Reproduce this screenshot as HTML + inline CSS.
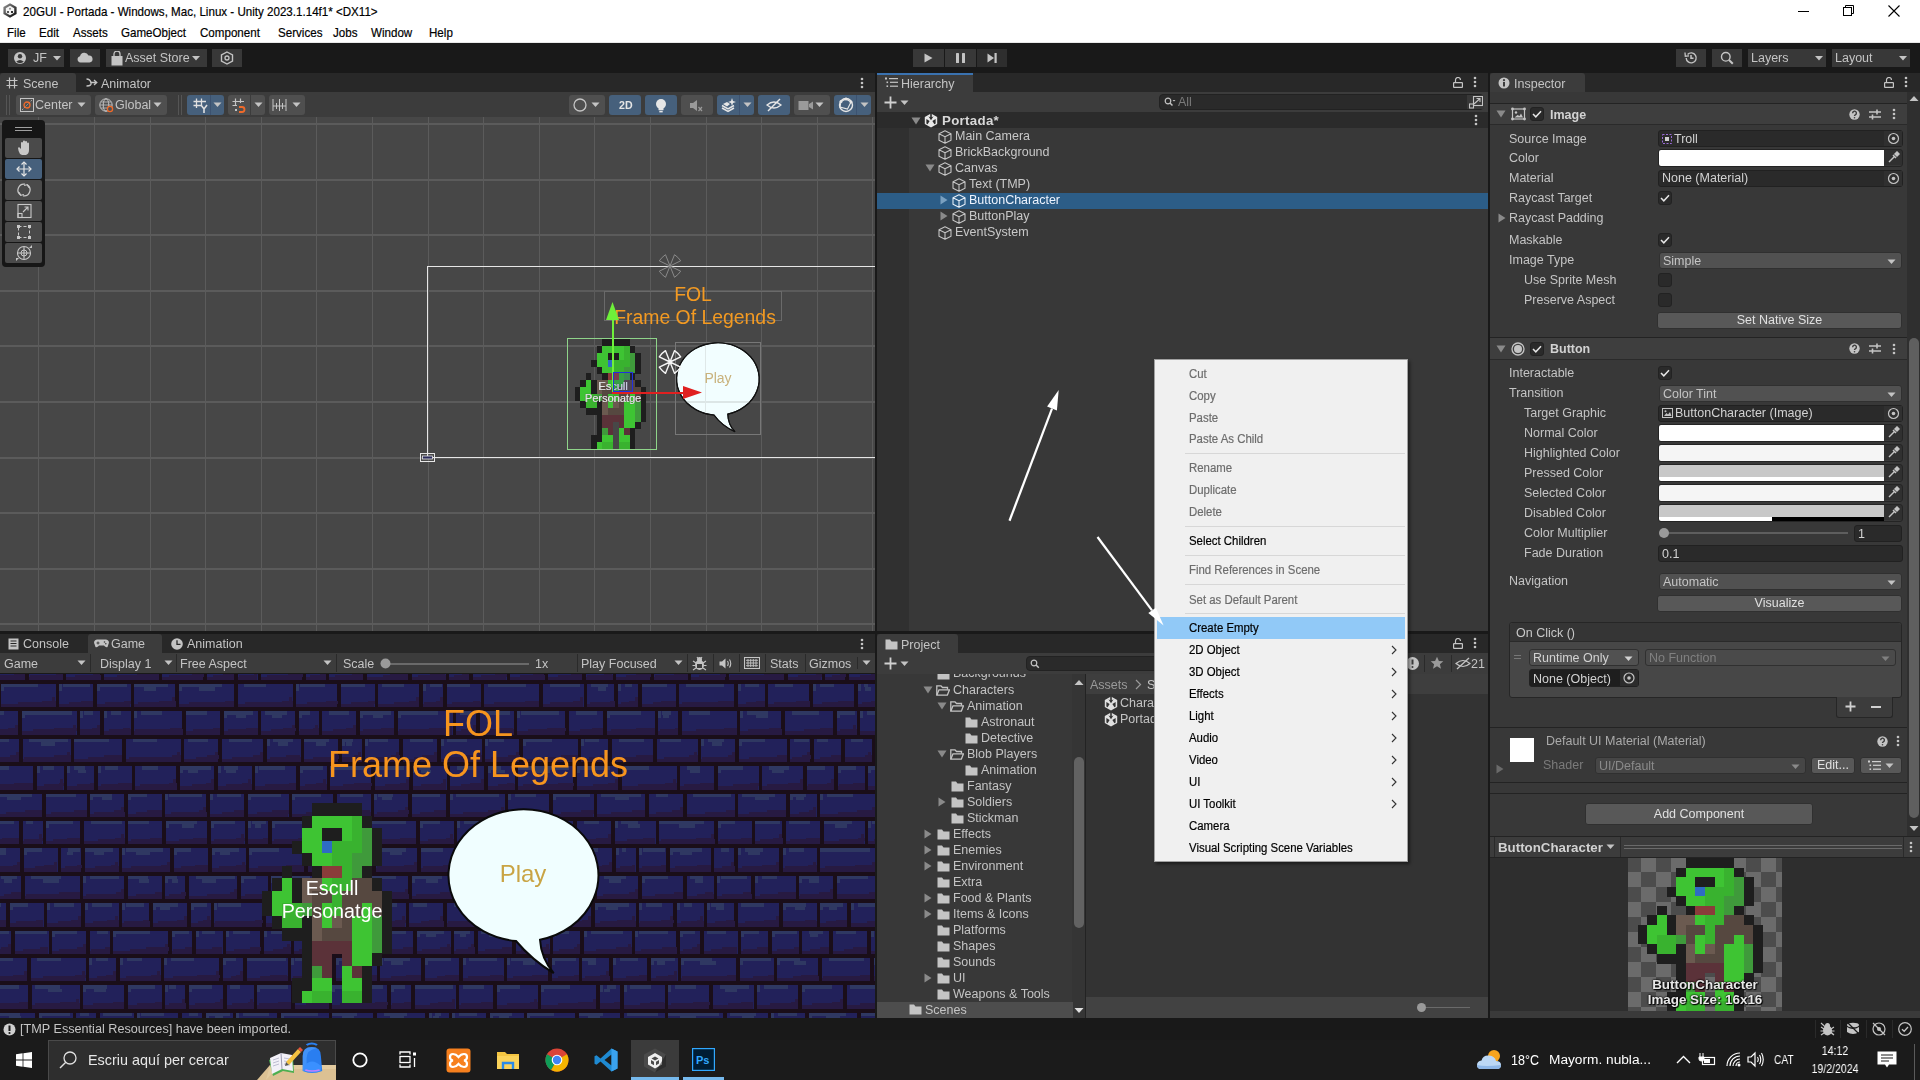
<!DOCTYPE html><html><head><meta charset="utf-8"><style>
html,body{margin:0;padding:0;width:1920px;height:1080px;overflow:hidden;background:#191919;font-family:"Liberation Sans",sans-serif;}
.a{position:absolute;box-sizing:border-box;}
.t{position:absolute;white-space:pre;font-family:"Liberation Sans",sans-serif;will-change:transform;}
</style></head><body>
<div class="a" style="left:0px;top:0px;width:1920px;height:43px;background:#ffffff;"></div>
<div class="a" style="left:0px;top:42px;width:1920px;height:1px;background:#e8e8e8;"></div>
<svg class="a" style="left:3px;top:3px;" width="14" height="15" viewBox="0 0 14 15"><defs><linearGradient id="ug" x1="0" y1="0" x2="1" y2="1"><stop offset="0" stop-color="#9a9a9a"/><stop offset="1" stop-color="#000"/></linearGradient></defs><polygon points="7,0.3 13.6,4 13.6,11 7,14.7 0.4,11 0.4,4" fill="url(#ug)"/><polygon points="7,2.8 11.2,5.2 11.2,9.8 7,12.2 2.8,9.8 2.8,5.2" fill="#f4f4f4"/><circle cx="7" cy="5.7" r="1" fill="#888"/><circle cx="5" cy="9" r="1.1" fill="#333"/><circle cx="9" cy="9" r="1.1" fill="#000"/></svg>
<div class="t" style="left:23px;top:5.1px;font-size:12.6px;line-height:15px;color:#000;font-weight:400;transform:scaleX(0.92);transform-origin:0 0;will-change:auto;-webkit-text-stroke:0.2px #000;">20GUI - Portada - Windows, Mac, Linux - Unity 2023.1.14f1* &lt;DX11&gt;</div>
<div class="a" style="left:1798px;top:11px;width:11px;height:1px;background:#000;"></div>
<svg class="a" style="left:1843px;top:5px;" width="12" height="12" viewBox="0 0 12 12"><rect x="0.5" y="2.5" width="8" height="8" fill="none" stroke="#000" stroke-width="1"/><path d="M2.5 2.5 V0.5 H10.5 V8.5 H8.5" fill="none" stroke="#000" stroke-width="1"/></svg>
<svg class="a" style="left:1888px;top:5px;" width="12" height="12" viewBox="0 0 12 12"><path d="M0.5 0.5 L11.5 11.5 M11.5 0.5 L0.5 11.5" stroke="#000" stroke-width="1.1"/></svg>
<div class="t" style="left:7px;top:26.1px;font-size:12.6px;line-height:15px;color:#000;font-weight:400;transform:scaleX(0.92);transform-origin:0 0;will-change:auto;-webkit-text-stroke:0.2px #000;">File</div>
<div class="t" style="left:39px;top:26.1px;font-size:12.6px;line-height:15px;color:#000;font-weight:400;transform:scaleX(0.92);transform-origin:0 0;will-change:auto;-webkit-text-stroke:0.2px #000;">Edit</div>
<div class="t" style="left:73px;top:26.1px;font-size:12.6px;line-height:15px;color:#000;font-weight:400;transform:scaleX(0.92);transform-origin:0 0;will-change:auto;-webkit-text-stroke:0.2px #000;">Assets</div>
<div class="t" style="left:121px;top:26.1px;font-size:12.6px;line-height:15px;color:#000;font-weight:400;transform:scaleX(0.92);transform-origin:0 0;will-change:auto;-webkit-text-stroke:0.2px #000;">GameObject</div>
<div class="t" style="left:200px;top:26.1px;font-size:12.6px;line-height:15px;color:#000;font-weight:400;transform:scaleX(0.92);transform-origin:0 0;will-change:auto;-webkit-text-stroke:0.2px #000;">Component</div>
<div class="t" style="left:278px;top:26.1px;font-size:12.6px;line-height:15px;color:#000;font-weight:400;transform:scaleX(0.92);transform-origin:0 0;will-change:auto;-webkit-text-stroke:0.2px #000;">Services</div>
<div class="t" style="left:333px;top:26.1px;font-size:12.6px;line-height:15px;color:#000;font-weight:400;transform:scaleX(0.92);transform-origin:0 0;will-change:auto;-webkit-text-stroke:0.2px #000;">Jobs</div>
<div class="t" style="left:371px;top:26.1px;font-size:12.6px;line-height:15px;color:#000;font-weight:400;transform:scaleX(0.92);transform-origin:0 0;will-change:auto;-webkit-text-stroke:0.2px #000;">Window</div>
<div class="t" style="left:429px;top:26.1px;font-size:12.6px;line-height:15px;color:#000;font-weight:400;transform:scaleX(0.92);transform-origin:0 0;will-change:auto;-webkit-text-stroke:0.2px #000;">Help</div>
<div class="a" style="left:0px;top:43px;width:1920px;height:30px;background:#191919;"></div>
<div class="a" style="left:8px;top:49px;width:56px;height:18px;background:#383838;"></div>
<svg class="a" style="left:13px;top:51px;" width="14" height="14" viewBox="0 0 14 14"><circle cx="7" cy="7" r="6" fill="#c4c4c4"/><circle cx="7" cy="5.2" r="2.2" fill="#383838"/><path d="M3.2 10.8 Q7 7.2 10.8 10.8 Q7 13.5 3.2 10.8Z" fill="#383838"/></svg>
<div class="t" style="left:33px;top:51.1px;font-size:12.5px;line-height:15px;color:#c4c4c4;font-weight:400;">JF</div>
<svg class="a" style="left:53px;top:56px;" width="8" height="5" viewBox="0 0 8 5"><path d="M0 0 H8 L4 4.5Z" fill="#c4c4c4"/></svg>
<div class="a" style="left:70px;top:49px;width:30px;height:18px;background:#383838;"></div>
<svg class="a" style="left:77px;top:52px;" width="16" height="11" viewBox="0 0 16 11"><path d="M3.5 10.5 A3.2 3.2 0 0 1 3 4.2 A4.5 4.5 0 0 1 11.5 3.5 A3.5 3.5 0 0 1 12.5 10.5Z" fill="#c4c4c4"/></svg>
<div class="a" style="left:106px;top:49px;width:101px;height:18px;background:#383838;"></div>
<svg class="a" style="left:111px;top:51px;" width="12" height="15" viewBox="0 0 12 15"><path d="M3 5 V3 A3 3 0 0 1 9 3 V5" fill="none" stroke="#c4c4c4" stroke-width="1.3"/><rect x="0.5" y="5" width="11" height="9.5" fill="#c4c4c4"/></svg>
<div class="t" style="left:125px;top:51.1px;font-size:12.5px;line-height:15px;color:#c4c4c4;font-weight:400;">Asset Store</div>
<svg class="a" style="left:192px;top:56px;" width="8" height="5" viewBox="0 0 8 5"><path d="M0 0 H8 L4 4.5Z" fill="#c4c4c4"/></svg>
<div class="a" style="left:212px;top:49px;width:30px;height:18px;background:#383838;"></div>
<svg class="a" style="left:220px;top:51px;" width="14" height="14" viewBox="0 0 14 14"><polygon points="7,1 12.5,4 12.5,10 7,13 1.5,10 1.5,4" fill="none" stroke="#c4c4c4" stroke-width="1.4"/><circle cx="7" cy="7" r="2" fill="none" stroke="#c4c4c4" stroke-width="1.3"/></svg>
<div class="a" style="left:913px;top:49px;width:31px;height:18px;background:#383838;"></div>
<div class="a" style="left:945px;top:49px;width:31px;height:18px;background:#383838;"></div>
<div class="a" style="left:977px;top:49px;width:30px;height:18px;background:#2e2e2e;"></div>
<svg class="a" style="left:924px;top:53px;" width="9" height="10" viewBox="0 0 9 10"><path d="M0.5 0.5 L8.5 5 L0.5 9.5Z" fill="#c4c4c4"/></svg>
<svg class="a" style="left:956px;top:53px;" width="9" height="10" viewBox="0 0 9 10"><rect x="0" y="0" width="3" height="10" rx="0.6" fill="#c4c4c4"/><rect x="6" y="0" width="3" height="10" rx="0.6" fill="#c4c4c4"/></svg>
<svg class="a" style="left:987px;top:53px;" width="11" height="10" viewBox="0 0 11 10"><path d="M0.5 0.5 L7 5 L0.5 9.5Z" fill="#c4c4c4"/><rect x="7.5" y="0" width="2.2" height="10" fill="#c4c4c4"/></svg>
<div class="a" style="left:1676px;top:49px;width:30px;height:18px;background:#383838;"></div>
<div class="a" style="left:1712px;top:49px;width:30px;height:18px;background:#383838;"></div>
<div class="a" style="left:1748px;top:49px;width:78px;height:18px;background:#383838;"></div>
<div class="a" style="left:1832px;top:49px;width:78px;height:18px;background:#383838;"></div>
<svg class="a" style="left:1684px;top:51px;" width="14" height="14" viewBox="0 0 14 14"><path d="M2.2 7 A5 5 0 1 0 3.6 3.4" fill="none" stroke="#c4c4c4" stroke-width="1.4"/><path d="M1 1.5 L1.3 5.2 L5 4.8" fill="none" stroke="#c4c4c4" stroke-width="1.3"/><path d="M7 4 V7.3 H9.5" fill="none" stroke="#c4c4c4" stroke-width="1.5"/></svg>
<svg class="a" style="left:1720px;top:51px;" width="14" height="14" viewBox="0 0 14 14"><circle cx="5.8" cy="5.8" r="4.3" fill="none" stroke="#c4c4c4" stroke-width="1.4"/><path d="M9 9 L12.8 12.8" stroke="#c4c4c4" stroke-width="2"/></svg>
<div class="t" style="left:1751px;top:51.1px;font-size:12.5px;line-height:15px;color:#c4c4c4;font-weight:400;">Layers</div>
<svg class="a" style="left:1815px;top:56px;" width="8" height="5" viewBox="0 0 8 5"><path d="M0 0 H8 L4 4.5Z" fill="#c4c4c4"/></svg>
<div class="t" style="left:1835px;top:51.1px;font-size:12.5px;line-height:15px;color:#c4c4c4;font-weight:400;">Layout</div>
<svg class="a" style="left:1899px;top:56px;" width="8" height="5" viewBox="0 0 8 5"><path d="M0 0 H8 L4 4.5Z" fill="#c4c4c4"/></svg>
<div class="a" style="left:0px;top:73px;width:875px;height:19px;background:#282828;"></div>
<div class="a" style="left:0;top:73px;width:76px;height:19px;background:#3c3c3c;border-radius:3px 3px 0 0"></div>
<svg class="a" style="left:6px;top:77px;" width="12" height="12" viewBox="0 0 12 12"><path d="M3.5 0.5 V11.5 M8.5 0.5 V11.5 M0.5 3.5 H11.5 M0.5 8.5 H11.5" stroke="#c4c4c4" stroke-width="1.2"/></svg>
<div class="t" style="left:23px;top:76.6px;font-size:12.5px;line-height:15px;color:#c4c4c4;font-weight:400;">Scene</div>
<svg class="a" style="left:86px;top:77px;" width="12" height="11" viewBox="0 0 12 11"><path d="M0.5 2 Q4 2 5 5.5 Q6 9 0.5 9" fill="none" stroke="#c4c4c4" stroke-width="1.3"/><path d="M4.5 5.5 H10.5 M8 3 L10.8 5.5 L8 8" fill="none" stroke="#c4c4c4" stroke-width="1.3"/></svg>
<div class="t" style="left:101px;top:76.6px;font-size:12.5px;line-height:15px;color:#c4c4c4;font-weight:400;">Animator</div>
<svg class="a" style="left:860px;top:77px;" width="4" height="12" viewBox="0 0 4 12"><circle cx="2" cy="2" r="1.3" fill="#c4c4c4"/><circle cx="2" cy="6" r="1.3" fill="#c4c4c4"/><circle cx="2" cy="10" r="1.3" fill="#c4c4c4"/></svg>
<div class="a" style="left:0px;top:92px;width:875px;height:25px;background:#3c3c3c;"></div>
<div class="a" style="left:6px;top:95px;width:1px;height:20px;background:#555;"></div>
<div class="a" style="left:9px;top:95px;width:1px;height:20px;background:#555;"></div>
<div class="a" style="left:178px;top:95px;width:1px;height:20px;background:#555;"></div>
<div class="a" style="left:181px;top:95px;width:1px;height:20px;background:#555;"></div>
<div class="a" style="left:613px;top:95px;width:1px;height:20px;background:#555;"></div>
<div class="a" style="left:16px;top:95px;width:75px;height:20px;background:#4f4f4f;border-radius:3px"></div>
<svg class="a" style="left:20px;top:98px;" width="14" height="14" viewBox="0 0 14 14"><rect x="0.5" y="0.5" width="13" height="13" fill="none" stroke="#c4c4c4" stroke-width="1"/><path d="M2 12 L12 2" stroke="#c4c4c4" stroke-width="0.8" stroke-dasharray="1.5 1"/><circle cx="7" cy="7" r="3" fill="none" stroke="#f06a2a" stroke-width="1.3"/></svg>
<div class="t" style="left:35px;top:98.1px;font-size:12.5px;line-height:15px;color:#c4c4c4;font-weight:400;">Center</div>
<svg class="a" style="left:77px;top:102px;" width="9" height="6" viewBox="0 0 9 6"><path d="M0.5 0.5 H8.5 L4.5 5Z" fill="#c4c4c4"/></svg>
<div class="a" style="left:95px;top:95px;width:72px;height:20px;background:#4f4f4f;border-radius:3px"></div>
<svg class="a" style="left:99px;top:98px;" width="18" height="15" viewBox="0 0 18 15"><circle cx="7" cy="7" r="6.2" fill="none" stroke="#c4c4c4" stroke-width="1"/><ellipse cx="7" cy="7" rx="2.8" ry="6.2" fill="none" stroke="#c4c4c4" stroke-width="1"/><path d="M1 7 H13 M2 4 H12 M2 10 H12" stroke="#c4c4c4" stroke-width="0.8"/><circle cx="11" cy="11" r="2.6" fill="#4f4f4f" stroke="#f06a2a" stroke-width="1.3"/></svg>
<div class="t" style="left:115px;top:98.1px;font-size:12.5px;line-height:15px;color:#c4c4c4;font-weight:400;">Global</div>
<svg class="a" style="left:153px;top:102px;" width="9" height="6" viewBox="0 0 9 6"><path d="M0.5 0.5 H8.5 L4.5 5Z" fill="#c4c4c4"/></svg>
<div class="a" style="left:187px;top:95px;width:37px;height:20px;background:#46607c;border-radius:3px"></div>
<div class="a" style="left:210px;top:95px;width:1px;height:20px;background:#3c5270;"></div>
<svg class="a" style="left:193px;top:98px;" width="16" height="15" viewBox="0 0 16 15"><path d="M3.5 0.5 V10 M8.5 0.5 V7 M0.5 3.5 H13 M0.5 7.5 H8" stroke="#e0e0e0" stroke-width="1.3"/><path d="M8 7 L11 11 L14 7 M11 11 V15" fill="none" stroke="#e0e0e0" stroke-width="1.6"/></svg>
<svg class="a" style="left:213px;top:102px;" width="9" height="6" viewBox="0 0 9 6"><path d="M0.5 0.5 H8.5 L4.5 5Z" fill="#c4c4c4"/></svg>
<div class="a" style="left:228px;top:95px;width:37px;height:20px;background:#4f4f4f;border-radius:3px"></div>
<div class="a" style="left:250px;top:95px;width:1px;height:20px;background:#3c3c3c;"></div>
<svg class="a" style="left:232px;top:98px;" width="16" height="15" viewBox="0 0 16 15"><path d="M3.5 0.5 V8 M8.5 0.5 V5 M0.5 3.5 H12 M0.5 7.5 H5" stroke="#c4c4c4" stroke-width="1.2"/><path d="M7 9 H10 A2.5 2.5 0 0 1 10 14 H7" fill="none" stroke="#f06a2a" stroke-width="1.8"/><rect x="3" y="11" width="2" height="2" fill="#c4c4c4"/></svg>
<svg class="a" style="left:254px;top:102px;" width="9" height="6" viewBox="0 0 9 6"><path d="M0.5 0.5 H8.5 L4.5 5Z" fill="#c4c4c4"/></svg>
<div class="a" style="left:269px;top:95px;width:36px;height:20px;background:#4f4f4f;border-radius:3px"></div>
<svg class="a" style="left:272px;top:98px;" width="16" height="14" viewBox="0 0 16 14"><path d="M1 1 V13 M4.5 5 V11 M7.5 1 V13 M10.5 5 V11 M14 1 V13 M1 8 H14" stroke="#c4c4c4" stroke-width="1"/></svg>
<svg class="a" style="left:292px;top:102px;" width="9" height="6" viewBox="0 0 9 6"><path d="M0.5 0.5 H8.5 L4.5 5Z" fill="#c4c4c4"/></svg>
<div class="a" style="left:569px;top:95px;width:36px;height:20px;background:#4f4f4f;border-radius:3px"></div>
<svg class="a" style="left:573px;top:98px;" width="16" height="14" viewBox="0 0 16 14"><circle cx="7" cy="7" r="6" fill="none" stroke="#c4c4c4" stroke-width="1.3"/><path d="M8.5 12.8 A6 6 0 0 0 12.8 6 A5 5 0 0 1 8.5 12.8Z" fill="#c4c4c4"/></svg>
<svg class="a" style="left:591px;top:102px;" width="9" height="6" viewBox="0 0 9 6"><path d="M0.5 0.5 H8.5 L4.5 5Z" fill="#c4c4c4"/></svg>
<div class="a" style="left:609px;top:95px;width:32px;height:20px;background:#46607c;border-radius:3px"></div>
<div class="t" style="left:618.5px;top:99.3px;font-size:10.6px;line-height:13px;color:#e6e6e6;font-weight:700;">2D</div>
<div class="a" style="left:645px;top:95px;width:32px;height:20px;background:#46607c;border-radius:3px"></div>
<svg class="a" style="left:654px;top:98px;" width="14" height="15" viewBox="0 0 14 15"><circle cx="7" cy="6" r="5" fill="#e6e6e6"/><rect x="4.5" y="10" width="5" height="2.2" fill="#e6e6e6"/><rect x="5.3" y="12.8" width="3.4" height="1.6" fill="#e6e6e6"/></svg>
<div class="a" style="left:681px;top:95px;width:32px;height:20px;background:#4f4f4f;border-radius:3px"></div>
<svg class="a" style="left:689px;top:99px;" width="16" height="13" viewBox="0 0 16 13"><path d="M1 4 H4 L8 1 V12 L4 9 H1Z" fill="#9a9a9a"/><path d="M9.5 8 L13 12 M13 8 L9.5 12" stroke="#9a9a9a" stroke-width="1.2"/></svg>
<div class="a" style="left:717px;top:95px;width:37px;height:20px;background:#46607c;border-radius:3px"></div>
<div class="a" style="left:739px;top:95px;width:1px;height:20px;background:#3c5270;"></div>
<svg class="a" style="left:721px;top:97px;" width="16" height="16" viewBox="0 0 16 16"><path d="M1 8.5 L7 12 L13 8.5 M1 11 L7 14.5 L13 11" fill="none" stroke="#e6e6e6" stroke-width="1.5"/><path d="M2 7 L6 5 L9 7 L6 9.5Z" fill="#e6e6e6"/><path d="M11 1 L12 4 L15 5 L12 6 L11 9 L10 6 L7 5 L10 4Z" fill="#e6e6e6"/></svg>
<svg class="a" style="left:743px;top:102px;" width="9" height="6" viewBox="0 0 9 6"><path d="M0.5 0.5 H8.5 L4.5 5Z" fill="#c4c4c4"/></svg>
<div class="a" style="left:758px;top:95px;width:32px;height:20px;background:#46607c;border-radius:3px"></div>
<svg class="a" style="left:766px;top:98px;" width="17" height="14" viewBox="0 0 17 14"><path d="M1 7 Q8 1 15 7 Q8 13 1 7Z" fill="none" stroke="#e6e6e6" stroke-width="1.3"/><path d="M2 13 L14 1" stroke="#e6e6e6" stroke-width="1.5"/></svg>
<div class="a" style="left:794px;top:95px;width:36px;height:20px;background:#4f4f4f;border-radius:3px"></div>
<svg class="a" style="left:798px;top:99px;" width="16" height="12" viewBox="0 0 16 12"><rect x="0.5" y="2" width="10" height="9" fill="#9a9a9a"/><path d="M11 5 L15 2.5 V10.5 L11 8Z" fill="#9a9a9a"/></svg>
<svg class="a" style="left:815px;top:102px;" width="9" height="6" viewBox="0 0 9 6"><path d="M0.5 0.5 H8.5 L4.5 5Z" fill="#c4c4c4"/></svg>
<div class="a" style="left:834px;top:95px;width:37px;height:20px;background:#46607c;border-radius:3px"></div>
<div class="a" style="left:856px;top:95px;width:1px;height:20px;background:#3c5270;"></div>
<svg class="a" style="left:838px;top:97px;" width="16" height="16" viewBox="0 0 16 16"><circle cx="8" cy="8" r="6.5" fill="none" stroke="#e6e6e6" stroke-width="1.4"/><path d="M3 4.5 L8 2 L13 5 L9.5 12 L2 10Z" fill="none" stroke="#e6e6e6" stroke-width="1.1"/><circle cx="8" cy="2" r="1.5" fill="#e6e6e6"/><circle cx="13" cy="5" r="1.5" fill="#e6e6e6"/><circle cx="3" cy="4.5" r="1.5" fill="#e6e6e6"/></svg>
<svg class="a" style="left:860px;top:102px;" width="9" height="6" viewBox="0 0 9 6"><path d="M0.5 0.5 H8.5 L4.5 5Z" fill="#c4c4c4"/></svg>
<div class="a" style="left:0px;top:117px;width:875px;height:514.5px;background:#474747;"></div>
<div class="a" style="left:38px;top:117px;width:1px;height:514px;background:#5b5b5b;"></div>
<div class="a" style="left:94px;top:117px;width:1px;height:514px;background:#5b5b5b;"></div>
<div class="a" style="left:150px;top:117px;width:1px;height:514px;background:#5b5b5b;"></div>
<div class="a" style="left:205px;top:117px;width:1px;height:514px;background:#5b5b5b;"></div>
<div class="a" style="left:261px;top:117px;width:1px;height:514px;background:#5b5b5b;"></div>
<div class="a" style="left:316px;top:117px;width:1px;height:514px;background:#5b5b5b;"></div>
<div class="a" style="left:372px;top:117px;width:1px;height:514px;background:#5b5b5b;"></div>
<div class="a" style="left:428px;top:117px;width:1px;height:514px;background:#5b5b5b;"></div>
<div class="a" style="left:483px;top:117px;width:1px;height:514px;background:#5b5b5b;"></div>
<div class="a" style="left:539px;top:117px;width:1px;height:514px;background:#5b5b5b;"></div>
<div class="a" style="left:594px;top:117px;width:1px;height:514px;background:#5b5b5b;"></div>
<div class="a" style="left:650px;top:117px;width:1px;height:514px;background:#5b5b5b;"></div>
<div class="a" style="left:706px;top:117px;width:1px;height:514px;background:#5b5b5b;"></div>
<div class="a" style="left:761px;top:117px;width:1px;height:514px;background:#5b5b5b;"></div>
<div class="a" style="left:817px;top:117px;width:1px;height:514px;background:#5b5b5b;"></div>
<div class="a" style="left:872px;top:117px;width:1px;height:514px;background:#5b5b5b;"></div>
<div class="a" style="left:0px;top:123px;width:875px;height:2px;background:#5b5b5b;"></div>
<div class="a" style="left:0px;top:179px;width:875px;height:2px;background:#5b5b5b;"></div>
<div class="a" style="left:0px;top:234px;width:875px;height:2px;background:#5b5b5b;"></div>
<div class="a" style="left:0px;top:290px;width:875px;height:2px;background:#5b5b5b;"></div>
<div class="a" style="left:0px;top:345px;width:875px;height:2px;background:#5b5b5b;"></div>
<div class="a" style="left:0px;top:401px;width:875px;height:2px;background:#5b5b5b;"></div>
<div class="a" style="left:0px;top:457px;width:875px;height:2px;background:#5b5b5b;"></div>
<div class="a" style="left:0px;top:512px;width:875px;height:2px;background:#5b5b5b;"></div>
<div class="a" style="left:0px;top:568px;width:875px;height:2px;background:#5b5b5b;"></div>
<div class="a" style="left:0px;top:623px;width:875px;height:2px;background:#5b5b5b;"></div>
<div class="a" style="left:427px;top:266px;width:448px;height:1px;background:#e6e6e6;"></div>
<div class="a" style="left:427px;top:266px;width:1px;height:192px;background:#e6e6e6;"></div>
<div class="a" style="left:427px;top:457px;width:448px;height:1px;background:#e6e6e6;"></div>
<svg class="a" style="left:420px;top:453px;" width="15" height="9" viewBox="0 0 15 9"><rect x="0.5" y="0.5" width="14" height="8" fill="none" stroke="#e6e6e6" stroke-width="1"/><rect x="2.5" y="3" width="10" height="3" fill="#2a2a5a" stroke="#e6e6e6" stroke-width="0.8"/></svg>
<div class="a" style="left:604px;top:291px;width:177px;height:1px;background:#6a6a6a;"></div>
<div class="a" style="left:604px;top:320px;width:177px;height:1px;background:#6a6a6a;"></div>
<div class="a" style="left:604px;top:291px;width:1px;height:30px;background:#6a6a6a;"></div>
<div class="a" style="left:781px;top:291px;width:1px;height:30px;background:#6a6a6a;"></div>
<div class="t" style="left:693px;top:285.4px;font-size:19.4px;line-height:19.4px;color:#f39a22;font-weight:400;transform:translateX(-50%);">FOL</div>
<div class="t" style="left:695px;top:308.2px;font-size:19.4px;line-height:19.4px;color:#f39a22;font-weight:400;transform:translateX(-50%);">Frame Of Legends</div>
<svg class="a" style="left:568.7px;top:339px" width="88" height="110" viewBox="0 0 16 16" preserveAspectRatio="none" shape-rendering="crispEdges"><rect x="6" y="0" width="1.04" height="1.04" fill="#1e1e1e"/><rect x="7" y="0" width="1.04" height="1.04" fill="#1e1e1e"/><rect x="8" y="0" width="1.04" height="1.04" fill="#1e1e1e"/><rect x="9" y="0" width="1.04" height="1.04" fill="#1e1e1e"/><rect x="10" y="0" width="1.04" height="1.04" fill="#1e1e1e"/><rect x="5" y="1" width="1.04" height="1.04" fill="#1e1e1e"/><rect x="6" y="1" width="1.04" height="1.04" fill="#3ec433"/><rect x="7" y="1" width="1.04" height="1.04" fill="#3ec433"/><rect x="8" y="1" width="1.04" height="1.04" fill="#3ec433"/><rect x="9" y="1" width="1.04" height="1.04" fill="#3ec433"/><rect x="10" y="1" width="1.04" height="1.04" fill="#39b22f"/><rect x="11" y="1" width="1.04" height="1.04" fill="#1e1e1e"/><rect x="5" y="2" width="1.04" height="1.04" fill="#3ec433"/><rect x="6" y="2" width="1.04" height="1.04" fill="#3ec433"/><rect x="7" y="2" width="1.04" height="1.04" fill="#1e1e1e"/><rect x="8" y="2" width="1.04" height="1.04" fill="#1e1e1e"/><rect x="9" y="2" width="1.04" height="1.04" fill="#3ec433"/><rect x="10" y="2" width="1.04" height="1.04" fill="#39b22f"/><rect x="11" y="2" width="1.04" height="1.04" fill="#3f9a3b"/><rect x="12" y="2" width="1.04" height="1.04" fill="#1e1e1e"/><rect x="4" y="3" width="1.04" height="1.04" fill="#1e1e1e"/><rect x="5" y="3" width="1.04" height="1.04" fill="#3ec433"/><rect x="6" y="3" width="1.04" height="1.04" fill="#3ec433"/><rect x="7" y="3" width="1.04" height="1.04" fill="#2e6cc4"/><rect x="8" y="3" width="1.04" height="1.04" fill="#39b22f"/><rect x="9" y="3" width="1.04" height="1.04" fill="#39b22f"/><rect x="10" y="3" width="1.04" height="1.04" fill="#39b22f"/><rect x="11" y="3" width="1.04" height="1.04" fill="#3f9a3b"/><rect x="12" y="3" width="1.04" height="1.04" fill="#1e1e1e"/><rect x="5" y="4" width="1.04" height="1.04" fill="#1e1e1e"/><rect x="6" y="4" width="1.04" height="1.04" fill="#3ec433"/><rect x="7" y="4" width="1.04" height="1.04" fill="#3ec433"/><rect x="8" y="4" width="1.04" height="1.04" fill="#39b22f"/><rect x="9" y="4" width="1.04" height="1.04" fill="#39b22f"/><rect x="10" y="4" width="1.04" height="1.04" fill="#3f9a3b"/><rect x="11" y="4" width="1.04" height="1.04" fill="#3f9a3b"/><rect x="12" y="4" width="1.04" height="1.04" fill="#1e1e1e"/><rect x="3" y="5" width="1.04" height="1.04" fill="#1e1e1e"/><rect x="6" y="5" width="1.04" height="1.04" fill="#1e1e1e"/><rect x="7" y="5" width="1.04" height="1.04" fill="#8a3c3a"/><rect x="8" y="5" width="1.04" height="1.04" fill="#8a3c3a"/><rect x="9" y="5" width="1.04" height="1.04" fill="#39b22f"/><rect x="10" y="5" width="1.04" height="1.04" fill="#3f9a3b"/><rect x="11" y="5" width="1.04" height="1.04" fill="#1e1e1e"/><rect x="2" y="6" width="1.04" height="1.04" fill="#1e1e1e"/><rect x="3" y="6" width="1.04" height="1.04" fill="#3ec433"/><rect x="4" y="6" width="1.04" height="1.04" fill="#1e1e1e"/><rect x="5" y="6" width="1.04" height="1.04" fill="#6b5a50"/><rect x="6" y="6" width="1.04" height="1.04" fill="#6b5a50"/><rect x="7" y="6" width="1.04" height="1.04" fill="#3ec433"/><rect x="8" y="6" width="1.04" height="1.04" fill="#39b22f"/><rect x="9" y="6" width="1.04" height="1.04" fill="#39b22f"/><rect x="10" y="6" width="1.04" height="1.04" fill="#564840"/><rect x="11" y="6" width="1.04" height="1.04" fill="#564840"/><rect x="12" y="6" width="1.04" height="1.04" fill="#1e1e1e"/><rect x="1" y="7" width="1.04" height="1.04" fill="#1e1e1e"/><rect x="2" y="7" width="1.04" height="1.04" fill="#3ec433"/><rect x="3" y="7" width="1.04" height="1.04" fill="#3ec433"/><rect x="4" y="7" width="1.04" height="1.04" fill="#1e1e1e"/><rect x="5" y="7" width="1.04" height="1.04" fill="#6b5a50"/><rect x="6" y="7" width="1.04" height="1.04" fill="#564840"/><rect x="7" y="7" width="1.04" height="1.04" fill="#564840"/><rect x="8" y="7" width="1.04" height="1.04" fill="#39b22f"/><rect x="9" y="7" width="1.04" height="1.04" fill="#564840"/><rect x="10" y="7" width="1.04" height="1.04" fill="#564840"/><rect x="11" y="7" width="1.04" height="1.04" fill="#564840"/><rect x="12" y="7" width="1.04" height="1.04" fill="#564840"/><rect x="13" y="7" width="1.04" height="1.04" fill="#1e1e1e"/><rect x="1" y="8" width="1.04" height="1.04" fill="#1e1e1e"/><rect x="2" y="8" width="1.04" height="1.04" fill="#3ec433"/><rect x="3" y="8" width="1.04" height="1.04" fill="#39b22f"/><rect x="4" y="8" width="1.04" height="1.04" fill="#39b22f"/><rect x="5" y="8" width="1.04" height="1.04" fill="#3f9a3b"/><rect x="6" y="8" width="1.04" height="1.04" fill="#564840"/><rect x="7" y="8" width="1.04" height="1.04" fill="#3ec433"/><rect x="8" y="8" width="1.04" height="1.04" fill="#39b22f"/><rect x="9" y="8" width="1.04" height="1.04" fill="#564840"/><rect x="10" y="8" width="1.04" height="1.04" fill="#564840"/><rect x="11" y="8" width="1.04" height="1.04" fill="#3ec433"/><rect x="12" y="8" width="1.04" height="1.04" fill="#564840"/><rect x="13" y="8" width="1.04" height="1.04" fill="#1e1e1e"/><rect x="2" y="9" width="1.04" height="1.04" fill="#1e1e1e"/><rect x="3" y="9" width="1.04" height="1.04" fill="#39b22f"/><rect x="4" y="9" width="1.04" height="1.04" fill="#39b22f"/><rect x="5" y="9" width="1.04" height="1.04" fill="#1e1e1e"/><rect x="6" y="9" width="1.04" height="1.04" fill="#6b5a50"/><rect x="7" y="9" width="1.04" height="1.04" fill="#3ec433"/><rect x="8" y="9" width="1.04" height="1.04" fill="#6b5a50"/><rect x="9" y="9" width="1.04" height="1.04" fill="#564840"/><rect x="10" y="9" width="1.04" height="1.04" fill="#3ec433"/><rect x="11" y="9" width="1.04" height="1.04" fill="#3ec433"/><rect x="12" y="9" width="1.04" height="1.04" fill="#3f9a3b"/><rect x="13" y="9" width="1.04" height="1.04" fill="#1e1e1e"/><rect x="3" y="10" width="1.04" height="1.04" fill="#1e1e1e"/><rect x="4" y="10" width="1.04" height="1.04" fill="#1e1e1e"/><rect x="5" y="10" width="1.04" height="1.04" fill="#1e1e1e"/><rect x="6" y="10" width="1.04" height="1.04" fill="#6b5a50"/><rect x="7" y="10" width="1.04" height="1.04" fill="#564840"/><rect x="8" y="10" width="1.04" height="1.04" fill="#564840"/><rect x="9" y="10" width="1.04" height="1.04" fill="#564840"/><rect x="10" y="10" width="1.04" height="1.04" fill="#3ec433"/><rect x="11" y="10" width="1.04" height="1.04" fill="#3ec433"/><rect x="12" y="10" width="1.04" height="1.04" fill="#3f9a3b"/><rect x="13" y="10" width="1.04" height="1.04" fill="#1e1e1e"/><rect x="5" y="11" width="1.04" height="1.04" fill="#1e1e1e"/><rect x="6" y="11" width="1.04" height="1.04" fill="#5b3239"/><rect x="7" y="11" width="1.04" height="1.04" fill="#5b3239"/><rect x="8" y="11" width="1.04" height="1.04" fill="#5b3239"/><rect x="9" y="11" width="1.04" height="1.04" fill="#5b3239"/><rect x="10" y="11" width="1.04" height="1.04" fill="#3ec433"/><rect x="11" y="11" width="1.04" height="1.04" fill="#3ec433"/><rect x="12" y="11" width="1.04" height="1.04" fill="#3f9a3b"/><rect x="13" y="11" width="1.04" height="1.04" fill="#1e1e1e"/><rect x="5" y="12" width="1.04" height="1.04" fill="#1e1e1e"/><rect x="6" y="12" width="1.04" height="1.04" fill="#5b3239"/><rect x="7" y="12" width="1.04" height="1.04" fill="#5b3239"/><rect x="9" y="12" width="1.04" height="1.04" fill="#5b3239"/><rect x="10" y="12" width="1.04" height="1.04" fill="#3ec433"/><rect x="11" y="12" width="1.04" height="1.04" fill="#3ec433"/><rect x="12" y="12" width="1.04" height="1.04" fill="#1e1e1e"/><rect x="5" y="13" width="1.04" height="1.04" fill="#1e1e1e"/><rect x="6" y="13" width="1.04" height="1.04" fill="#3f9a3b"/><rect x="7" y="13" width="1.04" height="1.04" fill="#5b3239"/><rect x="9" y="13" width="1.04" height="1.04" fill="#3ec433"/><rect x="10" y="13" width="1.04" height="1.04" fill="#5b3239"/><rect x="11" y="13" width="1.04" height="1.04" fill="#1e1e1e"/><rect x="4" y="14" width="1.04" height="1.04" fill="#1e1e1e"/><rect x="5" y="14" width="1.04" height="1.04" fill="#1e1e1e"/><rect x="6" y="14" width="1.04" height="1.04" fill="#3ec433"/><rect x="7" y="14" width="1.04" height="1.04" fill="#3ec433"/><rect x="9" y="14" width="1.04" height="1.04" fill="#3ec433"/><rect x="10" y="14" width="1.04" height="1.04" fill="#3ec433"/><rect x="11" y="14" width="1.04" height="1.04" fill="#1e1e1e"/><rect x="4" y="15" width="1.04" height="1.04" fill="#1e1e1e"/><rect x="5" y="15" width="1.04" height="1.04" fill="#3ec433"/><rect x="6" y="15" width="1.04" height="1.04" fill="#39b22f"/><rect x="7" y="15" width="1.04" height="1.04" fill="#39b22f"/><rect x="9" y="15" width="1.04" height="1.04" fill="#39b22f"/><rect x="10" y="15" width="1.04" height="1.04" fill="#39b22f"/><rect x="11" y="15" width="1.04" height="1.04" fill="#1e1e1e"/></svg>
<div class="a" style="left:567px;top:338px;width:90px;height:112px;border:1px solid #8fd48a"></div>
<div class="t" style="left:612.7px;top:380.7px;font-size:11.0px;line-height:11.0px;color:#e8e8e8;font-weight:400;transform:translateX(-50%);text-shadow:0 0 1px rgba(40,40,40,0.8),0.3px 0 0 #e8e8e8;">Escull</div>
<div class="t" style="left:612.9px;top:392.9px;font-size:11.0px;line-height:11.0px;color:#e8e8e8;font-weight:400;transform:translateX(-50%);text-shadow:0 0 1px rgba(40,40,40,0.8),0.3px 0 0 #e8e8e8;">Personatge</div>
<div class="a" style="left:675px;top:342px;width:86px;height:1px;background:#777;"></div>
<div class="a" style="left:675px;top:434px;width:86px;height:1px;background:#777;"></div>
<div class="a" style="left:675px;top:342px;width:1px;height:93px;background:#777;"></div>
<div class="a" style="left:760px;top:342px;width:1px;height:93px;background:#777;"></div>
<svg class="a" style="left:670px;top:335px;" width="100" height="102" viewBox="0 0 100 102"><defs><clipPath id="bc"><path d="M57.8 79.1 A41.3 36.2 0 1 0 44 80 Q52 91 65 96.7 Q58 90 57.8 79.1 Z"/></clipPath></defs><path d="M57.8 79.1 A41.3 36.2 0 1 0 44 80 Q52 91 65 96.7 Q58 90 57.8 79.1 Z" fill="#f2feff" stroke="#111" stroke-width="1.1"/><g clip-path="url(#bc)"><path d="M0 67 H100" stroke="#d5dede" stroke-width="1.6"/><path d="M35.5 0 V100" stroke="#dfe8e8" stroke-width="1"/></g><path d="M57.8 79.1 A41.3 36.2 0 1 0 44 80 Q52 91 65 96.7 Q58 90 57.8 79.1 Z" fill="none" stroke="#111" stroke-width="1.1"/></svg>
<div class="t" style="left:718px;top:370.6px;font-size:14px;line-height:14px;color:#c9b27c;font-weight:400;transform:translateX(-50%);">Play</div>
<svg class="a" style="left:657px;top:253.39999999999998px;" width="26" height="26" viewBox="0 0 26 26"><g transform="translate(13 13)" fill="none" stroke="#8a8a8a" stroke-width="1.0" opacity="1" stroke-linejoin="round"><path d="M0 0 L-10.7 -5.2 Q-8 -9 -4.5 -11.3 Z M0 0 L10.7 -5.2 Q8 -9 4.5 -11.3 Z M0 0 L-10.7 5.2 Q-8 9 -4.5 11.3 Z M0 0 L10.7 5.2 Q8 9 4.5 11.3 Z"/></g></svg>
<svg class="a" style="left:657px;top:349.4px;" width="26" height="26" viewBox="0 0 26 26"><g transform="translate(13 13)" fill="none" stroke="#f4f4f4" stroke-width="1.4" opacity="1" stroke-linejoin="round"><path d="M0 0 L-10.7 -5.2 Q-8 -9 -4.5 -11.3 Z M0 0 L10.7 -5.2 Q8 -9 4.5 -11.3 Z M0 0 L-10.7 5.2 Q-8 9 -4.5 11.3 Z M0 0 L10.7 5.2 Q8 9 4.5 11.3 Z"/></g></svg>
<div class="a" style="left:612px;top:320px;width:1.5px;height:73px;background:#6ef03a;"></div>
<svg class="a" style="left:605px;top:302px;" width="15" height="19" viewBox="0 0 15 19"><path d="M7.5 0 L14 18 H1Z" fill="#6ef03a"/></svg>
<div class="a" style="left:612px;top:392px;width:72px;height:1.5px;background:#e02020;"></div>
<svg class="a" style="left:683px;top:385px;" width="20" height="15" viewBox="0 0 20 15"><path d="M19 7.5 L0 14 V1Z" fill="#e02020"/></svg>
<div class="a" style="left:613px;top:372px;width:20px;height:20px;border:1px solid #2030e0;background:rgba(40,60,200,0.15)"></div>
<div class="a" style="left:2px;top:120px;width:43px;height:147px;background:#161616;border-radius:4px"></div>
<div class="a" style="left:15px;top:127px;width:17px;height:1px;background:#a0a0a0;"></div>
<div class="a" style="left:15px;top:130px;width:17px;height:1px;background:#a0a0a0;"></div>
<div class="a" style="left:5px;top:138px;width:37px;height:20px;background:#4a4a4a;border-radius:2px"></div>
<div class="a" style="left:5px;top:159px;width:37px;height:20px;background:#46607c;border-radius:2px"></div>
<div class="a" style="left:5px;top:180px;width:37px;height:20px;background:#4a4a4a;border-radius:2px"></div>
<div class="a" style="left:5px;top:201px;width:37px;height:20px;background:#4a4a4a;border-radius:2px"></div>
<div class="a" style="left:5px;top:222px;width:37px;height:20px;background:#4a4a4a;border-radius:2px"></div>
<div class="a" style="left:5px;top:243px;width:37px;height:20px;background:#4a4a4a;border-radius:2px"></div>
<svg class="a" style="left:16px;top:140px;" width="16" height="16" viewBox="0 0 16 16"><path d="M4 14 Q2 10 2 8 L3 7 L5 9 V3 Q5 2 6 2 Q7 2 7 3 V8 V1.5 Q7 0.5 8 0.5 Q9 0.5 9 1.5 V8 V2 Q9 1 10 1 Q11 1 11 2 V8 V3.5 Q11 2.5 12 2.5 Q13 2.5 13 3.5 V10 Q13 14 10 15 H6Z" fill="#c8c8c8"/></svg>
<svg class="a" style="left:15px;top:160px;" width="18" height="18" viewBox="0 0 18 18"><path d="M9 2 V16 M2 9 H16" stroke="#e6e6e6" stroke-width="1.2"/><path d="M6.5 4.5 L9 2 L11.5 4.5 M6.5 13.5 L9 16 L11.5 13.5 M4.5 6.5 L2 9 L4.5 11.5 M13.5 6.5 L16 9 L13.5 11.5" fill="none" stroke="#e6e6e6" stroke-width="1.2"/></svg>
<svg class="a" style="left:16px;top:182px;" width="16" height="16" viewBox="0 0 16 16"><g fill="none" stroke="#c8c8c8" stroke-width="1.2"><path d="M9 2.2 A6 6 0 0 0 4.8 13.2"/><path d="M3 10.3 L4.8 13.3 L7.9 12.5"/><path d="M7 13.8 A6 6 0 0 0 11.2 2.8"/><path d="M13 5.7 L11.2 2.7 L8.1 3.5"/></g></svg>
<svg class="a" style="left:16px;top:203px;" width="16" height="16" viewBox="0 0 16 16"><rect x="2" y="1.5" width="13" height="13" fill="none" stroke="#c8c8c8" stroke-width="1.1"/><rect x="2" y="10.5" width="4" height="4" fill="none" stroke="#c8c8c8" stroke-width="1.1"/><path d="M7 9 L12 4 M8.5 4 H12 V7.5" fill="none" stroke="#c8c8c8" stroke-width="1.1"/></svg>
<svg class="a" style="left:16px;top:224px;" width="16" height="16" viewBox="0 0 16 16"><rect x="2.5" y="2.5" width="11" height="11" fill="none" stroke="#c8c8c8" stroke-width="1" stroke-dasharray="3 2"/><rect x="1" y="1" width="3" height="3" fill="#c8c8c8"/><rect x="12" y="1" width="3" height="3" fill="#c8c8c8"/><rect x="1" y="12" width="3" height="3" fill="#c8c8c8"/><rect x="12" y="12" width="3" height="3" fill="#c8c8c8"/></svg>
<svg class="a" style="left:15px;top:244px;" width="18" height="18" viewBox="0 0 18 18"><circle cx="9" cy="9" r="6.5" fill="none" stroke="#c8c8c8" stroke-width="1.1"/><path d="M9 3 V15 M3 9 H15" stroke="#c8c8c8" stroke-width="1.1"/><circle cx="9" cy="9" r="3" fill="none" stroke="#c8c8c8" stroke-width="1"/><path d="M1 17 L4 14 L1 14Z M17 1 L14 4 L17 4Z" fill="#c8c8c8"/></svg>
<div class="a" style="left:0px;top:631px;width:1920px;height:3px;background:#191919;"></div>
<div class="a" style="left:875px;top:73px;width:2px;height:560px;background:#191919;"></div>
<div class="a" style="left:877px;top:73px;width:611px;height:19px;background:#282828;"></div>
<div class="a" style="left:877px;top:73px;width:96px;height:19px;background:#3c3c3c;border-radius:3px 3px 0 0"></div>
<div class="a" style="left:877px;top:73px;width:96px;height:2px;background:#3a72b0;"></div>
<svg class="a" style="left:885px;top:77px;" width="13" height="11" viewBox="0 0 13 11"><g fill="#c4c4c4"><rect x="0" y="0.5" width="2" height="2"/><rect x="4" y="1" width="9" height="1.2"/><rect x="1.5" y="4.5" width="1.6" height="1.6"/><rect x="5" y="4.7" width="8" height="1.2"/><rect x="1.5" y="8.4" width="1.6" height="1.6"/><rect x="5" y="8.6" width="8" height="1.2"/></g></svg>
<div class="t" style="left:901px;top:76.6px;font-size:12.5px;line-height:15px;color:#c4c4c4;font-weight:400;">Hierarchy</div>
<svg class="a" style="left:1453px;top:77px;" width="10" height="11" viewBox="0 0 10 11"><path d="M2.5 5 V3 A2.5 2.5 0 0 1 7.5 3" fill="none" stroke="#c4c4c4" stroke-width="1.2"/><rect x="0.6" y="5.6" width="8.8" height="4.8" fill="none" stroke="#c4c4c4" stroke-width="1.2" rx="0.5"/></svg>
<svg class="a" style="left:1473px;top:76px;" width="4" height="12" viewBox="0 0 4 12"><circle cx="2" cy="2" r="1.3" fill="#c4c4c4"/><circle cx="2" cy="6" r="1.3" fill="#c4c4c4"/><circle cx="2" cy="10" r="1.3" fill="#c4c4c4"/></svg>
<div class="a" style="left:877px;top:92px;width:611px;height:20px;background:#3c3c3c;"></div>
<svg class="a" style="left:884px;top:96px;" width="13" height="13" viewBox="0 0 13 13"><path d="M6.5 0.5 V12.5 M0.5 6.5 H12.5" stroke="#d0d0d0" stroke-width="1.8"/></svg>
<svg class="a" style="left:900px;top:100px;" width="9" height="6" viewBox="0 0 9 6"><path d="M0.5 0.5 H8.5 L4.5 5Z" fill="#c4c4c4"/></svg>
<div class="a" style="left:1159px;top:94px;width:325px;height:16px;background:#2a2a2a;border:1px solid #222;border-radius:4px"></div>
<div class="a" style="left:1467px;top:95px;width:17px;height:14px;background:#383838;"></div>
<svg class="a" style="left:1164px;top:97px;" width="12" height="10" viewBox="0 0 12 10"><circle cx="4" cy="4" r="2.8" fill="none" stroke="#c4c4c4" stroke-width="1.2"/><path d="M6 6 L8.5 8.5" stroke="#c4c4c4" stroke-width="1.5"/><path d="M8.5 3 H11.5 L10 4.6Z" fill="#c4c4c4"/></svg>
<div class="t" style="left:1178px;top:95.1px;font-size:12.5px;line-height:15px;color:#7a7a7a;font-weight:400;">All</div>
<svg class="a" style="left:1469px;top:96px;" width="14" height="13" viewBox="0 0 14 13"><rect x="4.5" y="0.5" width="9" height="9" fill="none" stroke="#c4c4c4" stroke-width="1.1"/><rect x="0.5" y="8" width="4" height="4" fill="none" stroke="#c4c4c4" stroke-width="1.1"/><path d="M5 8 L11 2.5 M7.5 2.5 H11 V6" fill="none" stroke="#c4c4c4" stroke-width="1.1"/></svg>
<div class="a" style="left:877px;top:112px;width:611px;height:519px;background:#383838;"></div>
<div class="a" style="left:877px;top:112px;width:32px;height:519px;background:#303030;"></div>
<div class="a" style="left:877px;top:112px;width:611px;height:16px;background:#2b2b2b;"></div>
<svg class="a" style="left:1474px;top:114px;" width="4" height="12" viewBox="0 0 4 12"><circle cx="2" cy="2" r="1.3" fill="#c4c4c4"/><circle cx="2" cy="6" r="1.3" fill="#c4c4c4"/><circle cx="2" cy="10" r="1.3" fill="#c4c4c4"/></svg>
<svg class="a" style="left:911px;top:117px;" width="10" height="8" viewBox="0 0 10 8"><path d="M0.5 0.5 H9.5 L5 7.5Z" fill="#8a8a8a"/></svg>
<svg class="a" style="left:924px;top:113px;" width="14" height="15" viewBox="0 0 14 15"><path d="M7 0.6 L13.2 4.1 V11 L7 14.4 L0.8 11 V4.1Z" fill="#e8e8e8"/><path d="M6.2 0 H7.8 V4.2 L9.6 3.2 L7 7.2 L4.4 3.2 L6.2 4.2Z" fill="#2b2b2b"/><path d="M2.4 6 L5.6 7.9 L3.6 11.2 L2.4 10.5Z" fill="#2b2b2b"/><path d="M11.6 6 L8.4 7.9 L10.4 11.2 L11.6 10.5Z" fill="#2b2b2b"/></svg>
<div class="t" style="left:942px;top:113.4px;font-size:13.3px;line-height:16px;color:#d8d8d8;font-weight:700;letter-spacing:0.3px;">Portada*</div>
<div class="a" style="left:877px;top:193px;width:611px;height:16px;background:#2c5d87;"></div>
<svg class="a" style="left:938px;top:130px;" width="14" height="14" viewBox="0 0 14 14"><g fill="none" stroke="#c4c4c4" stroke-width="1.1" stroke-linejoin="round"><path d="M7 0.8 L13 3.8 V10.2 L7 13.2 L1 10.2 V3.8Z M1 3.8 L7 6.8 L13 3.8 M7 6.8 V13.2"/></g></svg>
<div class="t" style="left:955px;top:129.1px;font-size:12.5px;line-height:15px;color:#c8c8c8;font-weight:400;">Main Camera</div>
<svg class="a" style="left:938px;top:146px;" width="14" height="14" viewBox="0 0 14 14"><g fill="none" stroke="#c4c4c4" stroke-width="1.1" stroke-linejoin="round"><path d="M7 0.8 L13 3.8 V10.2 L7 13.2 L1 10.2 V3.8Z M1 3.8 L7 6.8 L13 3.8 M7 6.8 V13.2"/></g></svg>
<div class="t" style="left:955px;top:145.1px;font-size:12.5px;line-height:15px;color:#c8c8c8;font-weight:400;">BrickBackground</div>
<svg class="a" style="left:925px;top:164px;" width="10" height="8" viewBox="0 0 10 8"><path d="M0.5 0.5 H9.5 L5 7.5Z" fill="#8a8a8a"/></svg>
<svg class="a" style="left:938px;top:162px;" width="14" height="14" viewBox="0 0 14 14"><g fill="none" stroke="#c4c4c4" stroke-width="1.1" stroke-linejoin="round"><path d="M7 0.8 L13 3.8 V10.2 L7 13.2 L1 10.2 V3.8Z M1 3.8 L7 6.8 L13 3.8 M7 6.8 V13.2"/></g></svg>
<div class="t" style="left:955px;top:161.1px;font-size:12.5px;line-height:15px;color:#c8c8c8;font-weight:400;">Canvas</div>
<svg class="a" style="left:952px;top:178px;" width="14" height="14" viewBox="0 0 14 14"><g fill="none" stroke="#c4c4c4" stroke-width="1.1" stroke-linejoin="round"><path d="M7 0.8 L13 3.8 V10.2 L7 13.2 L1 10.2 V3.8Z M1 3.8 L7 6.8 L13 3.8 M7 6.8 V13.2"/></g></svg>
<div class="t" style="left:969px;top:177.1px;font-size:12.5px;line-height:15px;color:#c8c8c8;font-weight:400;">Text (TMP)</div>
<svg class="a" style="left:940px;top:195px;" width="8" height="10" viewBox="0 0 8 10"><path d="M0.5 0.5 L7.5 5 L0.5 9.5Z" fill="#7aa0c0"/></svg>
<svg class="a" style="left:952px;top:194px;" width="14" height="14" viewBox="0 0 14 14"><g fill="none" stroke="#e6eef8" stroke-width="1.1" stroke-linejoin="round"><path d="M7 0.8 L13 3.8 V10.2 L7 13.2 L1 10.2 V3.8Z M1 3.8 L7 6.8 L13 3.8 M7 6.8 V13.2"/></g></svg>
<div class="t" style="left:969px;top:193.1px;font-size:12.5px;line-height:15px;color:#eef4ff;font-weight:400;">ButtonCharacter</div>
<svg class="a" style="left:940px;top:211px;" width="8" height="10" viewBox="0 0 8 10"><path d="M0.5 0.5 L7.5 5 L0.5 9.5Z" fill="#8a8a8a"/></svg>
<svg class="a" style="left:952px;top:210px;" width="14" height="14" viewBox="0 0 14 14"><g fill="none" stroke="#c4c4c4" stroke-width="1.1" stroke-linejoin="round"><path d="M7 0.8 L13 3.8 V10.2 L7 13.2 L1 10.2 V3.8Z M1 3.8 L7 6.8 L13 3.8 M7 6.8 V13.2"/></g></svg>
<div class="t" style="left:969px;top:209.1px;font-size:12.5px;line-height:15px;color:#c8c8c8;font-weight:400;">ButtonPlay</div>
<svg class="a" style="left:938px;top:226px;" width="14" height="14" viewBox="0 0 14 14"><g fill="none" stroke="#c4c4c4" stroke-width="1.1" stroke-linejoin="round"><path d="M7 0.8 L13 3.8 V10.2 L7 13.2 L1 10.2 V3.8Z M1 3.8 L7 6.8 L13 3.8 M7 6.8 V13.2"/></g></svg>
<div class="t" style="left:955px;top:225.1px;font-size:12.5px;line-height:15px;color:#c8c8c8;font-weight:400;">EventSystem</div>
<div class="a" style="left:1490px;top:73px;width:430px;height:19px;background:#282828;"></div>
<div class="a" style="left:1490px;top:73px;width:95px;height:19px;background:#3c3c3c;border-radius:3px 3px 0 0"></div>
<svg class="a" style="left:1498px;top:77px;" width="12" height="12" viewBox="0 0 12 12"><circle cx="6" cy="6" r="5.5" fill="#c4c4c4"/><rect x="5" y="5" width="2" height="4.5" fill="#3c3c3c"/><circle cx="6" cy="3.2" r="1.1" fill="#3c3c3c"/></svg>
<div class="t" style="left:1514px;top:76.6px;font-size:12.5px;line-height:15px;color:#c4c4c4;font-weight:400;">Inspector</div>
<svg class="a" style="left:1884px;top:77px;" width="10" height="11" viewBox="0 0 10 11"><path d="M2.5 5 V3 A2.5 2.5 0 0 1 7.5 3" fill="none" stroke="#c4c4c4" stroke-width="1.2"/><rect x="0.6" y="5.6" width="8.8" height="4.8" fill="none" stroke="#c4c4c4" stroke-width="1.2" rx="0.5"/></svg>
<svg class="a" style="left:1904px;top:76px;" width="4" height="12" viewBox="0 0 4 12"><circle cx="2" cy="2" r="1.3" fill="#c4c4c4"/><circle cx="2" cy="6" r="1.3" fill="#c4c4c4"/><circle cx="2" cy="10" r="1.3" fill="#c4c4c4"/></svg>
<div class="a" style="left:1490px;top:92px;width:430px;height:926px;background:#383838;"></div>
<div class="a" style="left:1490px;top:92px;width:417px;height:11px;background:#383838;"></div>
<div class="a" style="left:1490px;top:103px;width:417px;height:1px;background:#232323;"></div>
<div class="a" style="left:1907px;top:92px;width:13px;height:926px;background:#2f2f2f;"></div>
<svg class="a" style="left:1909px;top:95px;" width="10" height="7" viewBox="0 0 10 7"><path d="M0.5 6 L5 1 L9.5 6Z" fill="#c4c4c4"/></svg>
<div class="a" style="left:1909px;top:338px;width:10px;height:480px;background:#5f5f5f;border-radius:5px"></div>
<svg class="a" style="left:1909px;top:825px;" width="10" height="7" viewBox="0 0 10 7"><path d="M0.5 1 L5 6 L9.5 1Z" fill="#c4c4c4"/></svg>
<div class="a" style="left:1490px;top:104px;width:417px;height:20px;background:#3e3e3e;"></div>
<div class="a" style="left:1490px;top:124px;width:417px;height:1px;background:#2a2a2a;"></div>
<svg class="a" style="left:1496px;top:110.0px;" width="10" height="8" viewBox="0 0 10 8"><path d="M0.5 0.5 H9.5 L5 7.5Z" fill="#8a8a8a"/></svg>
<svg class="a" style="left:1511px;top:107.0px;" width="15" height="14" viewBox="0 0 15 14"><rect x="1.5" y="2" width="12" height="10" fill="none" stroke="#c4c4c4" stroke-width="1.2"/><circle cx="1.5" cy="2" r="1.4" fill="#c4c4c4"/><circle cx="13.5" cy="2" r="1.4" fill="#c4c4c4"/><circle cx="1.5" cy="12" r="1.4" fill="#c4c4c4"/><circle cx="13.5" cy="12" r="1.4" fill="#c4c4c4"/><circle cx="5" cy="5.5" r="1.2" fill="#c4c4c4"/><path d="M3.5 10.5 L6.5 8 L8.5 9 L10 6.5 L12 10.5Z" fill="#c4c4c4"/></svg>
<div class="a" style="left:1530px;top:107.0px;width:14px;height:14px;background:#2a2a2a;border:1px solid #222;border-radius:3px"></div>
<svg class="a" style="left:1532px;top:110.0px;" width="10" height="8" viewBox="0 0 10 8"><path d="M1 4 L3.8 6.8 L9 1.3" fill="none" stroke="#e6e6e6" stroke-width="1.5"/></svg>
<div class="t" style="left:1550px;top:107.6px;font-size:12.5px;line-height:15px;color:#d2d2d2;font-weight:700;">Image</div>
<svg class="a" style="left:1849px;top:108.5px;" width="11" height="11" viewBox="0 0 11 11"><circle cx="5.5" cy="5.5" r="5.2" fill="#c4c4c4"/><path d="M3.6 4.2 A1.9 1.9 0 1 1 6.3 5.8 Q5.5 6.2 5.5 7" fill="none" stroke="#3e3e3e" stroke-width="1.4"/><circle cx="5.5" cy="8.8" r="0.8" fill="#3e3e3e"/></svg>
<svg class="a" style="left:1869px;top:108.5px;" width="12" height="11" viewBox="0 0 12 11"><path d="M0 3 H12 M0 8 H12" stroke="#c4c4c4" stroke-width="1.3"/><path d="M8 0.5 V5.5 M3.5 5.5 V10.5" stroke="#c4c4c4" stroke-width="1.6"/></svg>
<svg class="a" style="left:1892px;top:108.0px;" width="4" height="12" viewBox="0 0 4 12"><circle cx="2" cy="2" r="1.3" fill="#c4c4c4"/><circle cx="2" cy="6" r="1.3" fill="#c4c4c4"/><circle cx="2" cy="10" r="1.3" fill="#c4c4c4"/></svg>
<div class="t" style="left:1509px;top:131.6px;font-size:12.5px;line-height:15px;color:#c4c4c4;font-weight:400;">Source Image</div>
<div class="a" style="left:1658px;top:130px;width:245px;height:17px;background:#2a2a2a;border:1px solid #212121;border-radius:3px"></div>
<div class="a" style="left:1884px;top:131px;width:18px;height:15px;background:#303030;"></div>
<svg class="a" style="left:1887px;top:132px;" width="13" height="13" viewBox="0 0 13 13"><circle cx="6.5" cy="6.5" r="5" fill="none" stroke="#c4c4c4" stroke-width="1.2"/><circle cx="6.5" cy="6.5" r="1.8" fill="#c4c4c4"/></svg>
<svg class="a" style="left:1662px;top:134px;" width="10" height="10" viewBox="0 0 10 10"><rect x="0.5" y="0.5" width="9" height="9" fill="none" stroke="#9b6cd8" stroke-width="1" stroke-dasharray="2 1.5"/><rect x="3" y="3" width="4" height="4" fill="#d0d0d0"/></svg>
<div class="t" style="left:1674px;top:131.6px;font-size:12.5px;line-height:15px;color:#d2d2d2;font-weight:400;">Troll</div>
<div class="t" style="left:1509px;top:151.1px;font-size:12.5px;line-height:15px;color:#c4c4c4;font-weight:400;">Color</div>
<div class="a" style="left:1659px;top:150px;width:225px;height:16px;background:#ffffff;"></div>
<div class="a" style="left:1884px;top:150px;width:18px;height:15px;background:#303030;"></div>
<svg class="a" style="left:1887px;top:151px;" width="13" height="13" viewBox="0 0 13 13"><path d="M2 11 L7.5 5.5" stroke="#c4c4c4" stroke-width="1.4"/><path d="M6 4 L9 7 M8 3 L10 1 L12 3 L10 5Z" stroke="#c4c4c4" stroke-width="1.5" fill="#c4c4c4"/></svg>
<div class="a" style="left:1658px;top:149px;width:245px;height:18px;border:1px solid #242424;border-radius:3px"></div>
<div class="t" style="left:1509px;top:171.1px;font-size:12.5px;line-height:15px;color:#c4c4c4;font-weight:400;">Material</div>
<div class="a" style="left:1658px;top:170px;width:245px;height:17px;background:#2a2a2a;border:1px solid #212121;border-radius:3px"></div>
<div class="a" style="left:1884px;top:171px;width:18px;height:15px;background:#303030;"></div>
<svg class="a" style="left:1887px;top:172px;" width="13" height="13" viewBox="0 0 13 13"><circle cx="6.5" cy="6.5" r="5" fill="none" stroke="#c4c4c4" stroke-width="1.2"/><circle cx="6.5" cy="6.5" r="1.8" fill="#c4c4c4"/></svg>
<div class="t" style="left:1662px;top:171.1px;font-size:12.5px;line-height:15px;color:#d2d2d2;font-weight:400;">None (Material)</div>
<div class="t" style="left:1509px;top:191.1px;font-size:12.5px;line-height:15px;color:#c4c4c4;font-weight:400;">Raycast Target</div>
<div class="a" style="left:1658px;top:191px;width:14px;height:14px;background:#2a2a2a;border:1px solid #222;border-radius:3px"></div>
<svg class="a" style="left:1660px;top:194px;" width="10" height="8" viewBox="0 0 10 8"><path d="M1 4 L3.8 6.8 L9 1.3" fill="none" stroke="#e6e6e6" stroke-width="1.5"/></svg>
<svg class="a" style="left:1498px;top:213px;" width="8" height="10" viewBox="0 0 8 10"><path d="M0.5 0.5 L7.5 5 L0.5 9.5Z" fill="#8a8a8a"/></svg>
<div class="t" style="left:1509px;top:211.1px;font-size:12.5px;line-height:15px;color:#c4c4c4;font-weight:400;">Raycast Padding</div>
<div class="t" style="left:1509px;top:233.1px;font-size:12.5px;line-height:15px;color:#c4c4c4;font-weight:400;">Maskable</div>
<div class="a" style="left:1658px;top:233px;width:14px;height:14px;background:#2a2a2a;border:1px solid #222;border-radius:3px"></div>
<svg class="a" style="left:1660px;top:236px;" width="10" height="8" viewBox="0 0 10 8"><path d="M1 4 L3.8 6.8 L9 1.3" fill="none" stroke="#e6e6e6" stroke-width="1.5"/></svg>
<div class="t" style="left:1509px;top:253.1px;font-size:12.5px;line-height:15px;color:#c4c4c4;font-weight:400;">Image Type</div>
<div class="a" style="left:1659px;top:252px;width:243px;height:17px;background:#515151;border:1px solid #303030;border-radius:3px"></div>
<div class="t" style="left:1663px;top:254.1px;font-size:12.5px;line-height:15px;color:#c4c4c4;font-weight:400;">Simple</div>
<svg class="a" style="left:1887px;top:258.5px;" width="9" height="6" viewBox="0 0 9 6"><path d="M0.5 0.5 H8.5 L4.5 5Z" fill="#c4c4c4"/></svg>
<div class="t" style="left:1524px;top:273.1px;font-size:12.5px;line-height:15px;color:#c4c4c4;font-weight:400;">Use Sprite Mesh</div>
<div class="a" style="left:1658px;top:273px;width:14px;height:14px;background:#2a2a2a;border:1px solid #222;border-radius:3px"></div>
<div class="t" style="left:1524px;top:293.1px;font-size:12.5px;line-height:15px;color:#c4c4c4;font-weight:400;">Preserve Aspect</div>
<div class="a" style="left:1658px;top:293px;width:14px;height:14px;background:#2a2a2a;border:1px solid #222;border-radius:3px"></div>
<div class="a" style="left:1657px;top:312px;width:245px;height:17px;background:#585858;border:1px solid #303030;border-radius:3px"></div>
<div class="t" style="left:1657px;top:313.0px;width:245px;text-align:center;font-size:12.5px;line-height:15px;color:#e0e0e0">Set Native Size</div>
<div class="a" style="left:1490px;top:337px;width:417px;height:1px;background:#232323;"></div>
<div class="a" style="left:1490px;top:338px;width:417px;height:21px;background:#3e3e3e;"></div>
<div class="a" style="left:1490px;top:359px;width:417px;height:1px;background:#2a2a2a;"></div>
<svg class="a" style="left:1496px;top:344.5px;" width="10" height="8" viewBox="0 0 10 8"><path d="M0.5 0.5 H9.5 L5 7.5Z" fill="#8a8a8a"/></svg>
<svg class="a" style="left:1511px;top:341.5px;" width="14" height="14" viewBox="0 0 14 14"><circle cx="7" cy="7" r="6" fill="none" stroke="#c4c4c4" stroke-width="1.3"/><circle cx="7" cy="7" r="4" fill="#c4c4c4"/></svg>
<div class="a" style="left:1530px;top:341.5px;width:14px;height:14px;background:#2a2a2a;border:1px solid #222;border-radius:3px"></div>
<svg class="a" style="left:1532px;top:344.5px;" width="10" height="8" viewBox="0 0 10 8"><path d="M1 4 L3.8 6.8 L9 1.3" fill="none" stroke="#e6e6e6" stroke-width="1.5"/></svg>
<div class="t" style="left:1550px;top:342.1px;font-size:12.5px;line-height:15px;color:#d2d2d2;font-weight:700;">Button</div>
<svg class="a" style="left:1849px;top:343.0px;" width="11" height="11" viewBox="0 0 11 11"><circle cx="5.5" cy="5.5" r="5.2" fill="#c4c4c4"/><path d="M3.6 4.2 A1.9 1.9 0 1 1 6.3 5.8 Q5.5 6.2 5.5 7" fill="none" stroke="#3e3e3e" stroke-width="1.4"/><circle cx="5.5" cy="8.8" r="0.8" fill="#3e3e3e"/></svg>
<svg class="a" style="left:1869px;top:343.0px;" width="12" height="11" viewBox="0 0 12 11"><path d="M0 3 H12 M0 8 H12" stroke="#c4c4c4" stroke-width="1.3"/><path d="M8 0.5 V5.5 M3.5 5.5 V10.5" stroke="#c4c4c4" stroke-width="1.6"/></svg>
<svg class="a" style="left:1892px;top:342.5px;" width="4" height="12" viewBox="0 0 4 12"><circle cx="2" cy="2" r="1.3" fill="#c4c4c4"/><circle cx="2" cy="6" r="1.3" fill="#c4c4c4"/><circle cx="2" cy="10" r="1.3" fill="#c4c4c4"/></svg>
<div class="t" style="left:1509px;top:366.1px;font-size:12.5px;line-height:15px;color:#c4c4c4;font-weight:400;">Interactable</div>
<div class="a" style="left:1658px;top:366px;width:14px;height:14px;background:#2a2a2a;border:1px solid #222;border-radius:3px"></div>
<svg class="a" style="left:1660px;top:369px;" width="10" height="8" viewBox="0 0 10 8"><path d="M1 4 L3.8 6.8 L9 1.3" fill="none" stroke="#e6e6e6" stroke-width="1.5"/></svg>
<div class="t" style="left:1509px;top:386.1px;font-size:12.5px;line-height:15px;color:#c4c4c4;font-weight:400;">Transition</div>
<div class="a" style="left:1659px;top:385px;width:243px;height:17px;background:#515151;border:1px solid #303030;border-radius:3px"></div>
<div class="t" style="left:1663px;top:387.1px;font-size:12.5px;line-height:15px;color:#c4c4c4;font-weight:400;">Color Tint</div>
<svg class="a" style="left:1887px;top:391.5px;" width="9" height="6" viewBox="0 0 9 6"><path d="M0.5 0.5 H8.5 L4.5 5Z" fill="#c4c4c4"/></svg>
<div class="t" style="left:1524px;top:406.1px;font-size:12.5px;line-height:15px;color:#c4c4c4;font-weight:400;">Target Graphic</div>
<div class="a" style="left:1658px;top:405px;width:245px;height:17px;background:#2a2a2a;border:1px solid #212121;border-radius:3px"></div>
<div class="a" style="left:1884px;top:406px;width:18px;height:15px;background:#303030;"></div>
<svg class="a" style="left:1887px;top:407px;" width="13" height="13" viewBox="0 0 13 13"><circle cx="6.5" cy="6.5" r="5" fill="none" stroke="#c4c4c4" stroke-width="1.2"/><circle cx="6.5" cy="6.5" r="1.8" fill="#c4c4c4"/></svg>
<svg class="a" style="left:1662px;top:408px;" width="11" height="10" viewBox="0 0 11 10"><rect x="0.5" y="0.5" width="10" height="9" fill="none" stroke="#c4c4c4" stroke-width="1"/><path d="M2 8 L4.5 5 L6 6.5 L8 4 L9.5 8Z" fill="#c4c4c4"/><circle cx="3.5" cy="3.2" r="1" fill="#c4c4c4"/></svg>
<div class="t" style="left:1675px;top:406.1px;font-size:12.5px;line-height:15px;color:#d2d2d2;font-weight:400;">ButtonCharacter (Image)</div>
<div class="t" style="left:1524px;top:426.1px;font-size:12.5px;line-height:15px;color:#c4c4c4;font-weight:400;">Normal Color</div>
<div class="a" style="left:1659px;top:425px;width:225px;height:16px;background:#ffffff;"></div>
<div class="a" style="left:1884px;top:425px;width:18px;height:15px;background:#303030;"></div>
<svg class="a" style="left:1887px;top:426px;" width="13" height="13" viewBox="0 0 13 13"><path d="M2 11 L7.5 5.5" stroke="#c4c4c4" stroke-width="1.4"/><path d="M6 4 L9 7 M8 3 L10 1 L12 3 L10 5Z" stroke="#c4c4c4" stroke-width="1.5" fill="#c4c4c4"/></svg>
<div class="a" style="left:1658px;top:424px;width:245px;height:18px;border:1px solid #242424;border-radius:3px"></div>
<div class="t" style="left:1524px;top:446.1px;font-size:12.5px;line-height:15px;color:#c4c4c4;font-weight:400;">Highlighted Color</div>
<div class="a" style="left:1659px;top:445px;width:225px;height:16px;background:#f5f5f5;"></div>
<div class="a" style="left:1884px;top:445px;width:18px;height:15px;background:#303030;"></div>
<svg class="a" style="left:1887px;top:446px;" width="13" height="13" viewBox="0 0 13 13"><path d="M2 11 L7.5 5.5" stroke="#c4c4c4" stroke-width="1.4"/><path d="M6 4 L9 7 M8 3 L10 1 L12 3 L10 5Z" stroke="#c4c4c4" stroke-width="1.5" fill="#c4c4c4"/></svg>
<div class="a" style="left:1658px;top:444px;width:245px;height:18px;border:1px solid #242424;border-radius:3px"></div>
<div class="t" style="left:1524px;top:466.1px;font-size:12.5px;line-height:15px;color:#c4c4c4;font-weight:400;">Pressed Color</div>
<div class="a" style="left:1659px;top:465px;width:225px;height:16px;background:#c8c8c8;"></div>
<div class="a" style="left:1659px;top:477px;width:225px;height:4px;background:#ffffff;"></div>
<div class="a" style="left:1884px;top:465px;width:18px;height:15px;background:#303030;"></div>
<svg class="a" style="left:1887px;top:466px;" width="13" height="13" viewBox="0 0 13 13"><path d="M2 11 L7.5 5.5" stroke="#c4c4c4" stroke-width="1.4"/><path d="M6 4 L9 7 M8 3 L10 1 L12 3 L10 5Z" stroke="#c4c4c4" stroke-width="1.5" fill="#c4c4c4"/></svg>
<div class="a" style="left:1658px;top:464px;width:245px;height:18px;border:1px solid #242424;border-radius:3px"></div>
<div class="t" style="left:1524px;top:486.1px;font-size:12.5px;line-height:15px;color:#c4c4c4;font-weight:400;">Selected Color</div>
<div class="a" style="left:1659px;top:485px;width:225px;height:16px;background:#f5f5f5;"></div>
<div class="a" style="left:1884px;top:485px;width:18px;height:15px;background:#303030;"></div>
<svg class="a" style="left:1887px;top:486px;" width="13" height="13" viewBox="0 0 13 13"><path d="M2 11 L7.5 5.5" stroke="#c4c4c4" stroke-width="1.4"/><path d="M6 4 L9 7 M8 3 L10 1 L12 3 L10 5Z" stroke="#c4c4c4" stroke-width="1.5" fill="#c4c4c4"/></svg>
<div class="a" style="left:1658px;top:484px;width:245px;height:18px;border:1px solid #242424;border-radius:3px"></div>
<div class="t" style="left:1524px;top:506.1px;font-size:12.5px;line-height:15px;color:#c4c4c4;font-weight:400;">Disabled Color</div>
<div class="a" style="left:1659px;top:505px;width:225px;height:16px;background:#c8c8c8;"></div>
<div class="a" style="left:1659px;top:517px;width:113px;height:4px;background:#ffffff;"></div>
<div class="a" style="left:1772px;top:517px;width:112px;height:4px;background:#000000;"></div>
<div class="a" style="left:1884px;top:505px;width:18px;height:15px;background:#303030;"></div>
<svg class="a" style="left:1887px;top:506px;" width="13" height="13" viewBox="0 0 13 13"><path d="M2 11 L7.5 5.5" stroke="#c4c4c4" stroke-width="1.4"/><path d="M6 4 L9 7 M8 3 L10 1 L12 3 L10 5Z" stroke="#c4c4c4" stroke-width="1.5" fill="#c4c4c4"/></svg>
<div class="a" style="left:1658px;top:504px;width:245px;height:18px;border:1px solid #242424;border-radius:3px"></div>
<div class="t" style="left:1524px;top:526.1px;font-size:12.5px;line-height:15px;color:#c4c4c4;font-weight:400;">Color Multiplier</div>
<div class="a" style="left:1663px;top:532px;width:185px;height:2px;background:#5e5e5e;"></div>
<svg class="a" style="left:1658px;top:527px;" width="12" height="12" viewBox="0 0 12 12"><circle cx="6" cy="6" r="5" fill="#9a9a9a"/></svg>
<div class="a" style="left:1854px;top:525px;width:48px;height:17px;background:#2a2a2a;border:1px solid #212121;border-radius:3px"></div>
<div class="t" style="left:1858px;top:526.6px;font-size:12.5px;line-height:15px;color:#d2d2d2;font-weight:400;">1</div>
<div class="t" style="left:1524px;top:546.1px;font-size:12.5px;line-height:15px;color:#c4c4c4;font-weight:400;">Fade Duration</div>
<div class="a" style="left:1658px;top:545px;width:245px;height:17px;background:#2a2a2a;border:1px solid #212121;border-radius:3px"></div>
<div class="t" style="left:1662px;top:546.6px;font-size:12.5px;line-height:15px;color:#d2d2d2;font-weight:400;">0.1</div>
<div class="t" style="left:1509px;top:574.1px;font-size:12.5px;line-height:15px;color:#c4c4c4;font-weight:400;">Navigation</div>
<div class="a" style="left:1659px;top:573px;width:243px;height:17px;background:#515151;border:1px solid #303030;border-radius:3px"></div>
<div class="t" style="left:1663px;top:575.1px;font-size:12.5px;line-height:15px;color:#c4c4c4;font-weight:400;">Automatic</div>
<svg class="a" style="left:1887px;top:579.5px;" width="9" height="6" viewBox="0 0 9 6"><path d="M0.5 0.5 H8.5 L4.5 5Z" fill="#c4c4c4"/></svg>
<div class="a" style="left:1657px;top:595px;width:245px;height:17px;background:#585858;border:1px solid #303030;border-radius:3px"></div>
<div class="t" style="left:1657px;top:596.0px;width:245px;text-align:center;font-size:12.5px;line-height:15px;color:#e0e0e0">Visualize</div>
<div class="a" style="left:1509px;top:622px;width:393px;height:76px;background:#474747;border:1px solid #262626;border-radius:3px"></div>
<div class="a" style="left:1510px;top:623px;width:391px;height:19px;background:#353535;border-bottom:1px solid #2a2a2a;border-radius:3px 3px 0 0"></div>
<div class="t" style="left:1516px;top:625.6px;font-size:12.5px;line-height:15px;color:#c8c8c8;font-weight:400;">On Click ()</div>
<div class="a" style="left:1514px;top:655px;width:7px;height:1px;background:#777;"></div>
<div class="a" style="left:1514px;top:658px;width:7px;height:1px;background:#777;"></div>
<div class="a" style="left:1529px;top:649px;width:110px;height:17px;background:#515151;border:1px solid #303030;border-radius:3px"></div>
<div class="t" style="left:1533px;top:651.1px;font-size:12.5px;line-height:15px;color:#d2d2d2;font-weight:400;">Runtime Only</div>
<svg class="a" style="left:1624px;top:655.5px;" width="9" height="6" viewBox="0 0 9 6"><path d="M0.5 0.5 H8.5 L4.5 5Z" fill="#d2d2d2"/></svg>
<div class="a" style="left:1645px;top:649px;width:251px;height:17px;background:#4a4a4a;border:1px solid #303030;border-radius:3px"></div>
<div class="t" style="left:1649px;top:651.1px;font-size:12.5px;line-height:15px;color:#808080;font-weight:400;">No Function</div>
<svg class="a" style="left:1881px;top:655.5px;" width="9" height="6" viewBox="0 0 9 6"><path d="M0.5 0.5 H8.5 L4.5 5Z" fill="#808080"/></svg>
<div class="a" style="left:1529px;top:669px;width:110px;height:18px;background:#1e1e1e;border:1px solid #212121;border-radius:3px"></div>
<div class="a" style="left:1620px;top:670px;width:18px;height:16px;background:#2c2c2c;"></div>
<div class="t" style="left:1533px;top:671.6px;font-size:12.5px;line-height:15px;color:#d2d2d2;font-weight:400;">None (Object)</div>
<svg class="a" style="left:1622px;top:671px;" width="14" height="14" viewBox="0 0 14 14"><circle cx="7" cy="7" r="5" fill="none" stroke="#c4c4c4" stroke-width="1.2"/><circle cx="7" cy="7" r="1.8" fill="#c4c4c4"/></svg>
<div class="a" style="left:1836px;top:697px;width:57px;height:21px;background:#3c3c3c;border:1px solid #262626;border-top:none;border-radius:0 0 3px 3px"></div>
<svg class="a" style="left:1845px;top:701px;" width="11" height="11" viewBox="0 0 11 11"><path d="M5.5 0.5 V10.5 M0.5 5.5 H10.5" stroke="#d0d0d0" stroke-width="1.8"/></svg>
<div class="a" style="left:1871px;top:706px;width:10px;height:2px;background:#d0d0d0;"></div>
<div class="a" style="left:1490px;top:727px;width:417px;height:1px;background:#232323;"></div>
<div class="a" style="left:1510px;top:738px;width:24px;height:24px;background:#ffffff;"></div>
<div class="t" style="left:1546px;top:734.1px;font-size:12.5px;line-height:15px;color:#aaaaaa;font-weight:400;">Default UI Material (Material)</div>
<svg class="a" style="left:1877px;top:736px;" width="11" height="11" viewBox="0 0 11 11"><circle cx="5.5" cy="5.5" r="5.2" fill="#c4c4c4"/><path d="M3.6 4.2 A1.9 1.9 0 1 1 6.3 5.8 Q5.5 6.2 5.5 7" fill="none" stroke="#3e3e3e" stroke-width="1.4"/><circle cx="5.5" cy="8.8" r="0.8" fill="#3e3e3e"/></svg>
<svg class="a" style="left:1896px;top:735px;" width="4" height="12" viewBox="0 0 4 12"><circle cx="2" cy="2" r="1.3" fill="#c4c4c4"/><circle cx="2" cy="6" r="1.3" fill="#c4c4c4"/><circle cx="2" cy="10" r="1.3" fill="#c4c4c4"/></svg>
<svg class="a" style="left:1496px;top:764px;" width="8" height="10" viewBox="0 0 8 10"><path d="M0.5 0.5 L7.5 5 L0.5 9.5Z" fill="#6a6a6a"/></svg>
<div class="t" style="left:1543px;top:758.1px;font-size:12.5px;line-height:15px;color:#7a7a7a;font-weight:400;">Shader</div>
<div class="a" style="left:1595px;top:757px;width:211px;height:17px;background:#464646;border:1px solid #303030;border-radius:3px"></div>
<div class="t" style="left:1599px;top:759.1px;font-size:12.5px;line-height:15px;color:#8a8a8a;font-weight:400;">UI/Default</div>
<svg class="a" style="left:1791px;top:763.5px;" width="9" height="6" viewBox="0 0 9 6"><path d="M0.5 0.5 H8.5 L4.5 5Z" fill="#8a8a8a"/></svg>
<div class="a" style="left:1811px;top:757px;width:44px;height:17px;background:#585858;border:1px solid #303030;border-radius:3px"></div>
<div class="t" style="left:1811px;top:758.0px;width:44px;text-align:center;font-size:12.5px;line-height:15px;color:#e0e0e0">Edit...</div>
<div class="a" style="left:1860px;top:757px;width:42px;height:17px;background:#585858;border:1px solid #303030;border-radius:3px"></div>
<svg class="a" style="left:1868px;top:760px;" width="13" height="11" viewBox="0 0 13 11"><g fill="#d0d0d0"><rect x="0" y="0.5" width="2" height="2"/><rect x="4" y="1" width="9" height="1.2"/><rect x="1.5" y="4.5" width="1.6" height="1.6"/><rect x="5" y="4.7" width="8" height="1.2"/><rect x="1.5" y="8.4" width="1.6" height="1.6"/><rect x="5" y="8.6" width="8" height="1.2"/></g></svg>
<svg class="a" style="left:1885px;top:763px;" width="9" height="6" viewBox="0 0 9 6"><path d="M0.5 0.5 H8.5 L4.5 5Z" fill="#c4c4c4"/></svg>
<div class="a" style="left:1490px;top:782px;width:417px;height:1px;background:#232323;"></div>
<div class="a" style="left:1490px;top:793px;width:417px;height:1px;background:#232323;"></div>
<div class="a" style="left:1585px;top:803px;width:228px;height:22px;background:#585858;border:1px solid #303030;border-radius:3px"></div>
<div class="t" style="left:1585px;top:806.5px;width:228px;text-align:center;font-size:12.5px;line-height:15px;color:#e0e0e0">Add Component</div>
<div class="a" style="left:1490px;top:836px;width:430px;height:22px;background:#3c3c3c;"></div>
<div class="a" style="left:1490px;top:836px;width:430px;height:1px;background:#232323;"></div>
<div class="a" style="left:1490px;top:857px;width:430px;height:1px;background:#232323;"></div>
<div class="a" style="left:1494px;top:837px;width:1px;height:20px;background:#2a2a2a;"></div>
<div class="a" style="left:1620px;top:837px;width:1px;height:20px;background:#2a2a2a;"></div>
<div class="a" style="left:1903px;top:837px;width:1px;height:20px;background:#2a2a2a;"></div>
<div class="t" style="left:1498px;top:839.6px;font-size:13.3px;line-height:16px;color:#d2d2d2;font-weight:700;">ButtonCharacter</div>
<svg class="a" style="left:1606px;top:844px;" width="9" height="6" viewBox="0 0 9 6"><path d="M0.5 0.5 H8.5 L4.5 5Z" fill="#c4c4c4"/></svg>
<div class="a" style="left:1624px;top:845px;width:278px;height:1px;background:#6a6a6a;"></div>
<div class="a" style="left:1624px;top:848px;width:278px;height:1px;background:#6a6a6a;"></div>
<svg class="a" style="left:1909px;top:841px;" width="4" height="12" viewBox="0 0 4 12"><circle cx="2" cy="2" r="1.3" fill="#c4c4c4"/><circle cx="2" cy="6" r="1.3" fill="#c4c4c4"/><circle cx="2" cy="10" r="1.3" fill="#c4c4c4"/></svg>
<div class="a" style="left:1490px;top:858px;width:430px;height:160px;background:#2e2e2e;"></div>
<div class="a" style="left:1628px;top:858px;width:154px;height:153px;background-color:#4c4c4c;background-image:linear-gradient(45deg,#6b6b6b 25%,transparent 25%,transparent 75%,#6b6b6b 75%),linear-gradient(45deg,#6b6b6b 25%,transparent 25%,transparent 75%,#6b6b6b 75%);background-size:30px 30px;background-position:-2px -1px,13px 14px"></div>
<svg class="a" style="left:1628px;top:858px" width="154" height="153" viewBox="0 0 16 16" preserveAspectRatio="none" shape-rendering="crispEdges"><rect x="6" y="0" width="1.04" height="1.04" fill="#1e1e1e"/><rect x="7" y="0" width="1.04" height="1.04" fill="#1e1e1e"/><rect x="8" y="0" width="1.04" height="1.04" fill="#1e1e1e"/><rect x="9" y="0" width="1.04" height="1.04" fill="#1e1e1e"/><rect x="10" y="0" width="1.04" height="1.04" fill="#1e1e1e"/><rect x="5" y="1" width="1.04" height="1.04" fill="#1e1e1e"/><rect x="6" y="1" width="1.04" height="1.04" fill="#3ec433"/><rect x="7" y="1" width="1.04" height="1.04" fill="#3ec433"/><rect x="8" y="1" width="1.04" height="1.04" fill="#3ec433"/><rect x="9" y="1" width="1.04" height="1.04" fill="#3ec433"/><rect x="10" y="1" width="1.04" height="1.04" fill="#39b22f"/><rect x="11" y="1" width="1.04" height="1.04" fill="#1e1e1e"/><rect x="5" y="2" width="1.04" height="1.04" fill="#3ec433"/><rect x="6" y="2" width="1.04" height="1.04" fill="#3ec433"/><rect x="7" y="2" width="1.04" height="1.04" fill="#1e1e1e"/><rect x="8" y="2" width="1.04" height="1.04" fill="#1e1e1e"/><rect x="9" y="2" width="1.04" height="1.04" fill="#3ec433"/><rect x="10" y="2" width="1.04" height="1.04" fill="#39b22f"/><rect x="11" y="2" width="1.04" height="1.04" fill="#3f9a3b"/><rect x="12" y="2" width="1.04" height="1.04" fill="#1e1e1e"/><rect x="4" y="3" width="1.04" height="1.04" fill="#1e1e1e"/><rect x="5" y="3" width="1.04" height="1.04" fill="#3ec433"/><rect x="6" y="3" width="1.04" height="1.04" fill="#3ec433"/><rect x="7" y="3" width="1.04" height="1.04" fill="#2e6cc4"/><rect x="8" y="3" width="1.04" height="1.04" fill="#39b22f"/><rect x="9" y="3" width="1.04" height="1.04" fill="#39b22f"/><rect x="10" y="3" width="1.04" height="1.04" fill="#39b22f"/><rect x="11" y="3" width="1.04" height="1.04" fill="#3f9a3b"/><rect x="12" y="3" width="1.04" height="1.04" fill="#1e1e1e"/><rect x="5" y="4" width="1.04" height="1.04" fill="#1e1e1e"/><rect x="6" y="4" width="1.04" height="1.04" fill="#3ec433"/><rect x="7" y="4" width="1.04" height="1.04" fill="#3ec433"/><rect x="8" y="4" width="1.04" height="1.04" fill="#39b22f"/><rect x="9" y="4" width="1.04" height="1.04" fill="#39b22f"/><rect x="10" y="4" width="1.04" height="1.04" fill="#3f9a3b"/><rect x="11" y="4" width="1.04" height="1.04" fill="#3f9a3b"/><rect x="12" y="4" width="1.04" height="1.04" fill="#1e1e1e"/><rect x="3" y="5" width="1.04" height="1.04" fill="#1e1e1e"/><rect x="6" y="5" width="1.04" height="1.04" fill="#1e1e1e"/><rect x="7" y="5" width="1.04" height="1.04" fill="#8a3c3a"/><rect x="8" y="5" width="1.04" height="1.04" fill="#8a3c3a"/><rect x="9" y="5" width="1.04" height="1.04" fill="#39b22f"/><rect x="10" y="5" width="1.04" height="1.04" fill="#3f9a3b"/><rect x="11" y="5" width="1.04" height="1.04" fill="#1e1e1e"/><rect x="2" y="6" width="1.04" height="1.04" fill="#1e1e1e"/><rect x="3" y="6" width="1.04" height="1.04" fill="#3ec433"/><rect x="4" y="6" width="1.04" height="1.04" fill="#1e1e1e"/><rect x="5" y="6" width="1.04" height="1.04" fill="#6b5a50"/><rect x="6" y="6" width="1.04" height="1.04" fill="#6b5a50"/><rect x="7" y="6" width="1.04" height="1.04" fill="#3ec433"/><rect x="8" y="6" width="1.04" height="1.04" fill="#39b22f"/><rect x="9" y="6" width="1.04" height="1.04" fill="#39b22f"/><rect x="10" y="6" width="1.04" height="1.04" fill="#564840"/><rect x="11" y="6" width="1.04" height="1.04" fill="#564840"/><rect x="12" y="6" width="1.04" height="1.04" fill="#1e1e1e"/><rect x="1" y="7" width="1.04" height="1.04" fill="#1e1e1e"/><rect x="2" y="7" width="1.04" height="1.04" fill="#3ec433"/><rect x="3" y="7" width="1.04" height="1.04" fill="#3ec433"/><rect x="4" y="7" width="1.04" height="1.04" fill="#1e1e1e"/><rect x="5" y="7" width="1.04" height="1.04" fill="#6b5a50"/><rect x="6" y="7" width="1.04" height="1.04" fill="#564840"/><rect x="7" y="7" width="1.04" height="1.04" fill="#564840"/><rect x="8" y="7" width="1.04" height="1.04" fill="#39b22f"/><rect x="9" y="7" width="1.04" height="1.04" fill="#564840"/><rect x="10" y="7" width="1.04" height="1.04" fill="#564840"/><rect x="11" y="7" width="1.04" height="1.04" fill="#564840"/><rect x="12" y="7" width="1.04" height="1.04" fill="#564840"/><rect x="13" y="7" width="1.04" height="1.04" fill="#1e1e1e"/><rect x="1" y="8" width="1.04" height="1.04" fill="#1e1e1e"/><rect x="2" y="8" width="1.04" height="1.04" fill="#3ec433"/><rect x="3" y="8" width="1.04" height="1.04" fill="#39b22f"/><rect x="4" y="8" width="1.04" height="1.04" fill="#39b22f"/><rect x="5" y="8" width="1.04" height="1.04" fill="#3f9a3b"/><rect x="6" y="8" width="1.04" height="1.04" fill="#564840"/><rect x="7" y="8" width="1.04" height="1.04" fill="#3ec433"/><rect x="8" y="8" width="1.04" height="1.04" fill="#39b22f"/><rect x="9" y="8" width="1.04" height="1.04" fill="#564840"/><rect x="10" y="8" width="1.04" height="1.04" fill="#564840"/><rect x="11" y="8" width="1.04" height="1.04" fill="#3ec433"/><rect x="12" y="8" width="1.04" height="1.04" fill="#564840"/><rect x="13" y="8" width="1.04" height="1.04" fill="#1e1e1e"/><rect x="2" y="9" width="1.04" height="1.04" fill="#1e1e1e"/><rect x="3" y="9" width="1.04" height="1.04" fill="#39b22f"/><rect x="4" y="9" width="1.04" height="1.04" fill="#39b22f"/><rect x="5" y="9" width="1.04" height="1.04" fill="#1e1e1e"/><rect x="6" y="9" width="1.04" height="1.04" fill="#6b5a50"/><rect x="7" y="9" width="1.04" height="1.04" fill="#3ec433"/><rect x="8" y="9" width="1.04" height="1.04" fill="#6b5a50"/><rect x="9" y="9" width="1.04" height="1.04" fill="#564840"/><rect x="10" y="9" width="1.04" height="1.04" fill="#3ec433"/><rect x="11" y="9" width="1.04" height="1.04" fill="#3ec433"/><rect x="12" y="9" width="1.04" height="1.04" fill="#3f9a3b"/><rect x="13" y="9" width="1.04" height="1.04" fill="#1e1e1e"/><rect x="3" y="10" width="1.04" height="1.04" fill="#1e1e1e"/><rect x="4" y="10" width="1.04" height="1.04" fill="#1e1e1e"/><rect x="5" y="10" width="1.04" height="1.04" fill="#1e1e1e"/><rect x="6" y="10" width="1.04" height="1.04" fill="#6b5a50"/><rect x="7" y="10" width="1.04" height="1.04" fill="#564840"/><rect x="8" y="10" width="1.04" height="1.04" fill="#564840"/><rect x="9" y="10" width="1.04" height="1.04" fill="#564840"/><rect x="10" y="10" width="1.04" height="1.04" fill="#3ec433"/><rect x="11" y="10" width="1.04" height="1.04" fill="#3ec433"/><rect x="12" y="10" width="1.04" height="1.04" fill="#3f9a3b"/><rect x="13" y="10" width="1.04" height="1.04" fill="#1e1e1e"/><rect x="5" y="11" width="1.04" height="1.04" fill="#1e1e1e"/><rect x="6" y="11" width="1.04" height="1.04" fill="#5b3239"/><rect x="7" y="11" width="1.04" height="1.04" fill="#5b3239"/><rect x="8" y="11" width="1.04" height="1.04" fill="#5b3239"/><rect x="9" y="11" width="1.04" height="1.04" fill="#5b3239"/><rect x="10" y="11" width="1.04" height="1.04" fill="#3ec433"/><rect x="11" y="11" width="1.04" height="1.04" fill="#3ec433"/><rect x="12" y="11" width="1.04" height="1.04" fill="#3f9a3b"/><rect x="13" y="11" width="1.04" height="1.04" fill="#1e1e1e"/><rect x="5" y="12" width="1.04" height="1.04" fill="#1e1e1e"/><rect x="6" y="12" width="1.04" height="1.04" fill="#5b3239"/><rect x="7" y="12" width="1.04" height="1.04" fill="#5b3239"/><rect x="9" y="12" width="1.04" height="1.04" fill="#5b3239"/><rect x="10" y="12" width="1.04" height="1.04" fill="#3ec433"/><rect x="11" y="12" width="1.04" height="1.04" fill="#3ec433"/><rect x="12" y="12" width="1.04" height="1.04" fill="#1e1e1e"/><rect x="5" y="13" width="1.04" height="1.04" fill="#1e1e1e"/><rect x="6" y="13" width="1.04" height="1.04" fill="#3f9a3b"/><rect x="7" y="13" width="1.04" height="1.04" fill="#5b3239"/><rect x="9" y="13" width="1.04" height="1.04" fill="#3ec433"/><rect x="10" y="13" width="1.04" height="1.04" fill="#5b3239"/><rect x="11" y="13" width="1.04" height="1.04" fill="#1e1e1e"/><rect x="4" y="14" width="1.04" height="1.04" fill="#1e1e1e"/><rect x="5" y="14" width="1.04" height="1.04" fill="#1e1e1e"/><rect x="6" y="14" width="1.04" height="1.04" fill="#3ec433"/><rect x="7" y="14" width="1.04" height="1.04" fill="#3ec433"/><rect x="9" y="14" width="1.04" height="1.04" fill="#3ec433"/><rect x="10" y="14" width="1.04" height="1.04" fill="#3ec433"/><rect x="11" y="14" width="1.04" height="1.04" fill="#1e1e1e"/><rect x="4" y="15" width="1.04" height="1.04" fill="#1e1e1e"/><rect x="5" y="15" width="1.04" height="1.04" fill="#3ec433"/><rect x="6" y="15" width="1.04" height="1.04" fill="#39b22f"/><rect x="7" y="15" width="1.04" height="1.04" fill="#39b22f"/><rect x="9" y="15" width="1.04" height="1.04" fill="#39b22f"/><rect x="10" y="15" width="1.04" height="1.04" fill="#39b22f"/><rect x="11" y="15" width="1.04" height="1.04" fill="#1e1e1e"/></svg>
<div class="a" style="left:1490px;top:1011px;width:430px;height:7px;background:#3a3a3a;"></div>
<div class="t" style="left:1628px;top:978px;width:154px;text-align:center;font-size:13.4px;line-height:14.5px;color:#e8e8e8;font-weight:700;text-shadow:0 0 2px #000,0 0 2px #000,1px 1px 1px #000">ButtonCharacter<br>Image Size: 16x16</div>
<div class="a" style="left:0px;top:634px;width:875px;height:19px;background:#282828;"></div>
<svg class="a" style="left:8px;top:638px;" width="11" height="12" viewBox="0 0 11 12"><rect x="0.5" y="0.5" width="10" height="11" fill="#c4c4c4"/><path d="M2.5 3 H8.5 M2.5 5.5 H8.5 M2.5 8 H8.5" stroke="#282828" stroke-width="1"/></svg>
<div class="t" style="left:23px;top:636.6px;font-size:12.5px;line-height:15px;color:#c4c4c4;font-weight:400;">Console</div>
<div class="a" style="left:88px;top:634px;width:74px;height:19px;background:#3c3c3c;border-radius:3px 3px 0 0"></div>
<svg class="a" style="left:94px;top:639px;" width="15" height="9" viewBox="0 0 15 9"><path d="M3 0.5 H12 A3 3 0 0 1 14.5 5 L13.5 8 Q12.5 8.8 11 7.5 L10 6.5 H5 L4 7.5 Q2.5 8.8 1.5 8 L0.5 5 A3 3 0 0 1 3 0.5Z" fill="#c4c4c4"/><path d="M2.5 4 H5.5 M4 2.5 V5.5" stroke="#3c3c3c" stroke-width="1"/><circle cx="10.5" cy="3" r="0.8" fill="#3c3c3c"/><circle cx="11.8" cy="4.8" r="0.8" fill="#3c3c3c"/></svg>
<div class="t" style="left:111px;top:636.6px;font-size:12.5px;line-height:15px;color:#c4c4c4;font-weight:400;">Game</div>
<svg class="a" style="left:171px;top:638px;" width="12" height="12" viewBox="0 0 12 12"><circle cx="6" cy="6" r="5.8" fill="#c4c4c4"/><path d="M6 2.2 V6.3 H9.5" fill="none" stroke="#282828" stroke-width="1.3"/></svg>
<div class="t" style="left:187px;top:636.6px;font-size:12.5px;line-height:15px;color:#c4c4c4;font-weight:400;">Animation</div>
<svg class="a" style="left:860px;top:638px;" width="4" height="12" viewBox="0 0 4 12"><circle cx="2" cy="2" r="1.3" fill="#c4c4c4"/><circle cx="2" cy="6" r="1.3" fill="#c4c4c4"/><circle cx="2" cy="10" r="1.3" fill="#c4c4c4"/></svg>
<div class="a" style="left:0px;top:653px;width:875px;height:20px;background:#3c3c3c;"></div>
<div class="a" style="left:90px;top:654px;width:1px;height:18px;background:#2a2a2a;"></div>
<div class="a" style="left:176px;top:654px;width:1px;height:18px;background:#2a2a2a;"></div>
<div class="a" style="left:336px;top:654px;width:1px;height:18px;background:#2a2a2a;"></div>
<div class="a" style="left:577px;top:654px;width:1px;height:18px;background:#2a2a2a;"></div>
<div class="a" style="left:687px;top:654px;width:1px;height:18px;background:#2a2a2a;"></div>
<div class="a" style="left:713px;top:654px;width:1px;height:18px;background:#2a2a2a;"></div>
<div class="a" style="left:739px;top:654px;width:1px;height:18px;background:#2a2a2a;"></div>
<div class="a" style="left:765px;top:654px;width:1px;height:18px;background:#2a2a2a;"></div>
<div class="a" style="left:805px;top:654px;width:1px;height:18px;background:#2a2a2a;"></div>
<div class="a" style="left:857px;top:657px;width:1px;height:12px;background:#2a2a2a;"></div>
<div class="t" style="left:4px;top:656.6px;font-size:12.5px;line-height:15px;color:#c4c4c4;font-weight:400;">Game</div>
<svg class="a" style="left:77px;top:660px;" width="9" height="6" viewBox="0 0 9 6"><path d="M0.5 0.5 H8.5 L4.5 5Z" fill="#c4c4c4"/></svg>
<div class="t" style="left:100px;top:656.6px;font-size:12.5px;line-height:15px;color:#c4c4c4;font-weight:400;">Display 1</div>
<svg class="a" style="left:164px;top:660px;" width="9" height="6" viewBox="0 0 9 6"><path d="M0.5 0.5 H8.5 L4.5 5Z" fill="#c4c4c4"/></svg>
<div class="t" style="left:180px;top:656.6px;font-size:12.5px;line-height:15px;color:#c4c4c4;font-weight:400;">Free Aspect</div>
<svg class="a" style="left:323px;top:660px;" width="9" height="6" viewBox="0 0 9 6"><path d="M0.5 0.5 H8.5 L4.5 5Z" fill="#c4c4c4"/></svg>
<div class="t" style="left:343px;top:656.6px;font-size:12.5px;line-height:15px;color:#c4c4c4;font-weight:400;">Scale</div>
<div class="a" style="left:386px;top:663px;width:143px;height:1.5px;background:#6a6a6a;"></div>
<svg class="a" style="left:380px;top:658px;" width="11" height="11" viewBox="0 0 11 11"><circle cx="5.5" cy="5.5" r="5" fill="#9a9a9a"/></svg>
<div class="t" style="left:535px;top:656.6px;font-size:12.5px;line-height:15px;color:#c4c4c4;font-weight:400;">1x</div>
<div class="t" style="left:581px;top:656.6px;font-size:12.5px;line-height:15px;color:#c4c4c4;font-weight:400;">Play Focused</div>
<svg class="a" style="left:674px;top:660px;" width="9" height="6" viewBox="0 0 9 6"><path d="M0.5 0.5 H8.5 L4.5 5Z" fill="#c4c4c4"/></svg>
<svg class="a" style="left:692px;top:656px;" width="15" height="15" viewBox="0 0 15 15"><ellipse cx="7.5" cy="9" rx="4.5" ry="5" fill="#c4c4c4"/><circle cx="7.5" cy="3.5" r="2.5" fill="#c4c4c4"/><path d="M1 5 L4 7 M14 5 L11 7 M0.5 9.5 H3.5 M14.5 9.5 H11.5 M1 14 L4 12 M14 14 L11 12 M5 1 L6 2.5 M10 1 L9 2.5" stroke="#c4c4c4" stroke-width="1.1"/><rect x="5" y="8" width="5" height="4" fill="#3c3c3c"/></svg>
<svg class="a" style="left:719px;top:658px;" width="13" height="11" viewBox="0 0 13 11"><path d="M0.5 3.5 H3 L6.5 0.5 V10.5 L3 7.5 H0.5Z" fill="#c4c4c4"/><path d="M8.5 3 Q10 5.5 8.5 8 M10.5 1.5 Q13 5.5 10.5 9.5" fill="none" stroke="#c4c4c4" stroke-width="1.1"/></svg>
<svg class="a" style="left:744px;top:657px;" width="16" height="12" viewBox="0 0 16 12"><rect x="0.5" y="0.5" width="15" height="11" fill="none" stroke="#c4c4c4" stroke-width="1.1"/><path d="M2 3.3 H14 M2 6 H14 M2 8.7 H14 M4 2 V10 M6.7 2 V10 M9.3 2 V10 M12 2 V10" stroke="#c4c4c4" stroke-width="0.9"/></svg>
<div class="t" style="left:770px;top:656.6px;font-size:12.5px;line-height:15px;color:#c4c4c4;font-weight:400;">Stats</div>
<div class="t" style="left:809px;top:656.6px;font-size:12.5px;line-height:15px;color:#c4c4c4;font-weight:400;">Gizmos</div>
<svg class="a" style="left:862px;top:660px;" width="9" height="6" viewBox="0 0 9 6"><path d="M0.5 0.5 H8.5 L4.5 5Z" fill="#c4c4c4"/></svg>
<svg class="a" style="left:0;top:674px" width="875" height="344" viewBox="0 0 875 344" shape-rendering="crispEdges"><style>.m{fill:#22215a}.h{fill:#2f3862}.s{fill:#271a42}</style><rect width="875" height="344" fill="#1a0e19"/><rect x="-30" y="-17.4" width="55" height="23.3" class="m"/><rect x="-20" y="0.5" width="45" height="5.4" class="s"/><rect x="-30" y="2.5" width="11" height="3.4" class="s"/><rect x="14" y="-0.9" width="11" height="3.4" class="s"/><rect x="22" y="-4.3" width="3" height="3.4" class="s"/><rect x="-23" y="-17.4" width="32" height="3.4" class="h"/><rect x="-14" y="-14.0" width="16" height="3.4" class="h"/><rect x="29" y="-17.4" width="34" height="23.3" class="m"/><rect x="30" y="0.5" width="33" height="5.4" class="s"/><rect x="29" y="2.5" width="2" height="3.4" class="s"/><rect x="56" y="-0.9" width="7" height="3.4" class="s"/><rect x="29" y="-17.4" width="26" height="3.4" class="h"/><rect x="29" y="-17.4" width="3" height="6.8" class="h"/><rect x="66" y="-17.4" width="34" height="23.3" class="m"/><rect x="75" y="0.5" width="26" height="5.4" class="s"/><rect x="66" y="2.5" width="9" height="3.4" class="s"/><rect x="93" y="-0.9" width="7" height="3.4" class="s"/><rect x="97" y="-4.3" width="3" height="3.4" class="s"/><rect x="66" y="-17.4" width="20" height="3.4" class="h"/><rect x="66" y="-17.4" width="3" height="6.8" class="h"/><rect x="76" y="-14.0" width="10" height="3.4" class="h"/><rect x="104" y="-17.4" width="55" height="23.3" class="m"/><rect x="117" y="0.5" width="42" height="5.4" class="s"/><rect x="104" y="2.5" width="14" height="3.4" class="s"/><rect x="137" y="-0.9" width="22" height="3.4" class="s"/><rect x="155" y="-4.3" width="3" height="3.4" class="s"/><rect x="107" y="-17.4" width="36" height="3.4" class="h"/><rect x="162" y="-17.4" width="41" height="23.3" class="m"/><rect x="169" y="0.5" width="34" height="5.4" class="s"/><rect x="162" y="2.5" width="8" height="3.4" class="s"/><rect x="192" y="-0.9" width="12" height="3.4" class="s"/><rect x="162" y="-17.4" width="34" height="3.4" class="h"/><rect x="162" y="-17.4" width="3" height="6.8" class="h"/><rect x="173" y="-14.0" width="12" height="3.4" class="h"/><rect x="207" y="-17.4" width="27" height="23.3" class="m"/><rect x="213" y="0.5" width="21" height="5.4" class="s"/><rect x="207" y="2.5" width="7" height="3.4" class="s"/><rect x="223" y="-0.9" width="11" height="3.4" class="s"/><rect x="231" y="-4.3" width="3" height="3.4" class="s"/><rect x="210" y="-17.4" width="15" height="3.4" class="h"/><rect x="238" y="-17.4" width="20" height="23.3" class="m"/><rect x="239" y="0.5" width="18" height="5.4" class="s"/><rect x="238" y="2.5" width="3" height="3.4" class="s"/><rect x="254" y="-0.9" width="3" height="3.4" class="s"/><rect x="254" y="-4.3" width="3" height="3.4" class="s"/><rect x="241" y="-17.4" width="15" height="3.4" class="h"/><rect x="238" y="-17.4" width="3" height="6.8" class="h"/><rect x="244" y="-14.0" width="6" height="3.4" class="h"/><rect x="261" y="-17.4" width="41" height="23.3" class="m"/><rect x="267" y="0.5" width="35" height="5.4" class="s"/><rect x="261" y="2.5" width="7" height="3.4" class="s"/><rect x="288" y="-0.9" width="15" height="3.4" class="s"/><rect x="299" y="-4.3" width="3" height="3.4" class="s"/><rect x="265" y="-17.4" width="31" height="3.4" class="h"/><rect x="261" y="-17.4" width="3" height="6.8" class="h"/><rect x="270" y="-14.0" width="12" height="3.4" class="h"/><rect x="306" y="-17.4" width="20" height="23.3" class="m"/><rect x="310" y="0.5" width="16" height="5.4" class="s"/><rect x="306" y="2.5" width="5" height="3.4" class="s"/><rect x="320" y="-0.9" width="6" height="3.4" class="s"/><rect x="306" y="-17.4" width="14" height="3.4" class="h"/><rect x="306" y="-17.4" width="3" height="6.8" class="h"/><rect x="329" y="-17.4" width="34" height="23.3" class="m"/><rect x="335" y="0.5" width="28" height="5.4" class="s"/><rect x="329" y="2.5" width="7" height="3.4" class="s"/><rect x="352" y="-0.9" width="11" height="3.4" class="s"/><rect x="360" y="-4.3" width="3" height="3.4" class="s"/><rect x="329" y="-17.4" width="17" height="3.4" class="h"/><rect x="367" y="-17.4" width="41" height="23.3" class="m"/><rect x="383" y="0.5" width="25" height="5.4" class="s"/><rect x="367" y="2.5" width="17" height="3.4" class="s"/><rect x="390" y="-0.9" width="18" height="3.4" class="s"/><rect x="405" y="-4.3" width="3" height="3.4" class="s"/><rect x="374" y="-17.4" width="26" height="3.4" class="h"/><rect x="367" y="-17.4" width="3" height="6.8" class="h"/><rect x="412" y="-17.4" width="34" height="23.3" class="m"/><rect x="418" y="0.5" width="28" height="5.4" class="s"/><rect x="412" y="2.5" width="7" height="3.4" class="s"/><rect x="430" y="-0.9" width="15" height="3.4" class="s"/><rect x="415" y="-17.4" width="20" height="3.4" class="h"/><rect x="412" y="-17.4" width="3" height="6.8" class="h"/><rect x="423" y="-14.0" width="10" height="3.4" class="h"/><rect x="449" y="-17.4" width="20" height="23.3" class="m"/><rect x="454" y="0.5" width="15" height="5.4" class="s"/><rect x="449" y="2.5" width="6" height="3.4" class="s"/><rect x="462" y="-0.9" width="7" height="3.4" class="s"/><rect x="466" y="-4.3" width="3" height="3.4" class="s"/><rect x="456" y="-17.4" width="8" height="3.4" class="h"/><rect x="449" y="-17.4" width="3" height="6.8" class="h"/><rect x="473" y="-17.4" width="34" height="23.3" class="m"/><rect x="481" y="0.5" width="25" height="5.4" class="s"/><rect x="473" y="2.5" width="10" height="3.4" class="s"/><rect x="495" y="-0.9" width="12" height="3.4" class="s"/><rect x="503" y="-4.3" width="3" height="3.4" class="s"/><rect x="480" y="-17.4" width="14" height="3.4" class="h"/><rect x="473" y="-17.4" width="3" height="6.8" class="h"/><rect x="510" y="-17.4" width="34" height="23.3" class="m"/><rect x="520" y="0.5" width="25" height="5.4" class="s"/><rect x="510" y="2.5" width="10" height="3.4" class="s"/><rect x="533" y="-0.9" width="11" height="3.4" class="s"/><rect x="541" y="-4.3" width="3" height="3.4" class="s"/><rect x="510" y="-17.4" width="23" height="3.4" class="h"/><rect x="510" y="-17.4" width="3" height="6.8" class="h"/><rect x="524" y="-14.0" width="10" height="3.4" class="h"/><rect x="548" y="-17.4" width="34" height="23.3" class="m"/><rect x="558" y="0.5" width="24" height="5.4" class="s"/><rect x="548" y="2.5" width="11" height="3.4" class="s"/><rect x="571" y="-0.9" width="11" height="3.4" class="s"/><rect x="579" y="-4.3" width="3" height="3.4" class="s"/><rect x="555" y="-17.4" width="18" height="3.4" class="h"/><rect x="548" y="-17.4" width="3" height="6.8" class="h"/><rect x="586" y="-17.4" width="27" height="23.3" class="m"/><rect x="587" y="0.5" width="26" height="5.4" class="s"/><rect x="586" y="2.5" width="2" height="3.4" class="s"/><rect x="604" y="-0.9" width="8" height="3.4" class="s"/><rect x="592" y="-17.4" width="14" height="3.4" class="h"/><rect x="586" y="-17.4" width="3" height="6.8" class="h"/><rect x="616" y="-17.4" width="34" height="23.3" class="m"/><rect x="626" y="0.5" width="24" height="5.4" class="s"/><rect x="616" y="2.5" width="11" height="3.4" class="s"/><rect x="636" y="-0.9" width="15" height="3.4" class="s"/><rect x="647" y="-4.3" width="3" height="3.4" class="s"/><rect x="616" y="-17.4" width="18" height="3.4" class="h"/><rect x="616" y="-17.4" width="3" height="6.8" class="h"/><rect x="654" y="-17.4" width="34" height="23.3" class="m"/><rect x="655" y="0.5" width="33" height="5.4" class="s"/><rect x="654" y="2.5" width="2" height="3.4" class="s"/><rect x="674" y="-0.9" width="14" height="3.4" class="s"/><rect x="684" y="-4.3" width="3" height="3.4" class="s"/><rect x="657" y="-17.4" width="24" height="3.4" class="h"/><rect x="691" y="-17.4" width="34" height="23.3" class="m"/><rect x="699" y="0.5" width="26" height="5.4" class="s"/><rect x="691" y="2.5" width="9" height="3.4" class="s"/><rect x="720" y="-0.9" width="6" height="3.4" class="s"/><rect x="722" y="-4.3" width="3" height="3.4" class="s"/><rect x="695" y="-17.4" width="24" height="3.4" class="h"/><rect x="703" y="-14.0" width="10" height="3.4" class="h"/><rect x="729" y="-17.4" width="55" height="23.3" class="m"/><rect x="730" y="0.5" width="54" height="5.4" class="s"/><rect x="729" y="2.5" width="2" height="3.4" class="s"/><rect x="764" y="-0.9" width="20" height="3.4" class="s"/><rect x="781" y="-4.3" width="3" height="3.4" class="s"/><rect x="729" y="-17.4" width="29" height="3.4" class="h"/><rect x="729" y="-17.4" width="3" height="6.8" class="h"/><rect x="788" y="-17.4" width="34" height="23.3" class="m"/><rect x="798" y="0.5" width="23" height="5.4" class="s"/><rect x="788" y="2.5" width="12" height="3.4" class="s"/><rect x="816" y="-0.9" width="6" height="3.4" class="s"/><rect x="818" y="-4.3" width="3" height="3.4" class="s"/><rect x="794" y="-17.4" width="17" height="3.4" class="h"/><rect x="788" y="-17.4" width="3" height="6.8" class="h"/><rect x="825" y="-17.4" width="20" height="23.3" class="m"/><rect x="832" y="0.5" width="13" height="5.4" class="s"/><rect x="825" y="2.5" width="8" height="3.4" class="s"/><rect x="840" y="-0.9" width="6" height="3.4" class="s"/><rect x="829" y="-17.4" width="10" height="3.4" class="h"/><rect x="825" y="-17.4" width="3" height="6.8" class="h"/><rect x="830" y="-14.0" width="6" height="3.4" class="h"/><rect x="849" y="-17.4" width="27" height="23.3" class="m"/><rect x="860" y="0.5" width="16" height="5.4" class="s"/><rect x="849" y="2.5" width="12" height="3.4" class="s"/><rect x="871" y="-0.9" width="5" height="3.4" class="s"/><rect x="852" y="-17.4" width="21" height="3.4" class="h"/><rect x="-30" y="10.0" width="27" height="23.3" class="m"/><rect x="-24" y="27.9" width="21" height="5.4" class="s"/><rect x="-30" y="29.9" width="7" height="3.4" class="s"/><rect x="-11" y="26.5" width="8" height="3.4" class="s"/><rect x="-6" y="23.1" width="3" height="3.4" class="s"/><rect x="-30" y="10.0" width="19" height="3.4" class="h"/><rect x="-30" y="10.0" width="3" height="6.8" class="h"/><rect x="1" y="10.0" width="55" height="23.3" class="m"/><rect x="18" y="27.9" width="38" height="5.4" class="s"/><rect x="1" y="29.9" width="18" height="3.4" class="s"/><rect x="42" y="26.5" width="14" height="3.4" class="s"/><rect x="52" y="23.1" width="3" height="3.4" class="s"/><rect x="1" y="10.0" width="37" height="3.4" class="h"/><rect x="1" y="10.0" width="3" height="6.8" class="h"/><rect x="59" y="10.0" width="34" height="23.3" class="m"/><rect x="69" y="27.9" width="24" height="5.4" class="s"/><rect x="59" y="29.9" width="11" height="3.4" class="s"/><rect x="81" y="26.5" width="12" height="3.4" class="s"/><rect x="63" y="10.0" width="27" height="3.4" class="h"/><rect x="59" y="10.0" width="3" height="6.8" class="h"/><rect x="97" y="10.0" width="34" height="23.3" class="m"/><rect x="105" y="27.9" width="25" height="5.4" class="s"/><rect x="97" y="29.9" width="10" height="3.4" class="s"/><rect x="124" y="26.5" width="7" height="3.4" class="s"/><rect x="97" y="10.0" width="30" height="3.4" class="h"/><rect x="97" y="10.0" width="3" height="6.8" class="h"/><rect x="134" y="10.0" width="41" height="23.3" class="m"/><rect x="138" y="27.9" width="38" height="5.4" class="s"/><rect x="134" y="29.9" width="4" height="3.4" class="s"/><rect x="159" y="26.5" width="17" height="3.4" class="s"/><rect x="172" y="23.1" width="3" height="3.4" class="s"/><rect x="134" y="10.0" width="34" height="3.4" class="h"/><rect x="144" y="13.4" width="12" height="3.4" class="h"/><rect x="179" y="10.0" width="55" height="23.3" class="m"/><rect x="189" y="27.9" width="45" height="5.4" class="s"/><rect x="179" y="29.9" width="11" height="3.4" class="s"/><rect x="225" y="26.5" width="9" height="3.4" class="s"/><rect x="182" y="10.0" width="40" height="3.4" class="h"/><rect x="179" y="10.0" width="3" height="6.8" class="h"/><rect x="199" y="13.4" width="16" height="3.4" class="h"/><rect x="238" y="10.0" width="55" height="23.3" class="m"/><rect x="245" y="27.9" width="48" height="5.4" class="s"/><rect x="238" y="29.9" width="8" height="3.4" class="s"/><rect x="282" y="26.5" width="11" height="3.4" class="s"/><rect x="289" y="23.1" width="3" height="3.4" class="s"/><rect x="244" y="10.0" width="22" height="3.4" class="h"/><rect x="296" y="10.0" width="41" height="23.3" class="m"/><rect x="307" y="27.9" width="30" height="5.4" class="s"/><rect x="296" y="29.9" width="12" height="3.4" class="s"/><rect x="326" y="26.5" width="12" height="3.4" class="s"/><rect x="300" y="10.0" width="25" height="3.4" class="h"/><rect x="296" y="10.0" width="3" height="6.8" class="h"/><rect x="341" y="10.0" width="34" height="23.3" class="m"/><rect x="351" y="27.9" width="23" height="5.4" class="s"/><rect x="341" y="29.9" width="12" height="3.4" class="s"/><rect x="368" y="26.5" width="7" height="3.4" class="s"/><rect x="341" y="10.0" width="24" height="3.4" class="h"/><rect x="378" y="10.0" width="41" height="23.3" class="m"/><rect x="394" y="27.9" width="25" height="5.4" class="s"/><rect x="378" y="29.9" width="17" height="3.4" class="s"/><rect x="409" y="26.5" width="10" height="3.4" class="s"/><rect x="416" y="23.1" width="3" height="3.4" class="s"/><rect x="382" y="10.0" width="22" height="3.4" class="h"/><rect x="423" y="10.0" width="20" height="23.3" class="m"/><rect x="424" y="27.9" width="19" height="5.4" class="s"/><rect x="423" y="29.9" width="2" height="3.4" class="s"/><rect x="436" y="26.5" width="7" height="3.4" class="s"/><rect x="440" y="23.1" width="3" height="3.4" class="s"/><rect x="430" y="10.0" width="12" height="3.4" class="h"/><rect x="423" y="10.0" width="3" height="6.8" class="h"/><rect x="447" y="10.0" width="34" height="23.3" class="m"/><rect x="452" y="27.9" width="29" height="5.4" class="s"/><rect x="447" y="29.9" width="6" height="3.4" class="s"/><rect x="473" y="26.5" width="7" height="3.4" class="s"/><rect x="447" y="10.0" width="23" height="3.4" class="h"/><rect x="484" y="10.0" width="55" height="23.3" class="m"/><rect x="494" y="27.9" width="45" height="5.4" class="s"/><rect x="484" y="29.9" width="11" height="3.4" class="s"/><rect x="525" y="26.5" width="14" height="3.4" class="s"/><rect x="488" y="10.0" width="38" height="3.4" class="h"/><rect x="543" y="10.0" width="41" height="23.3" class="m"/><rect x="550" y="27.9" width="33" height="5.4" class="s"/><rect x="543" y="29.9" width="9" height="3.4" class="s"/><rect x="573" y="26.5" width="10" height="3.4" class="s"/><rect x="580" y="23.1" width="3" height="3.4" class="s"/><rect x="550" y="10.0" width="30" height="3.4" class="h"/><rect x="587" y="10.0" width="27" height="23.3" class="m"/><rect x="590" y="27.9" width="25" height="5.4" class="s"/><rect x="587" y="29.9" width="3" height="3.4" class="s"/><rect x="610" y="26.5" width="5" height="3.4" class="s"/><rect x="591" y="10.0" width="17" height="3.4" class="h"/><rect x="598" y="13.4" width="8" height="3.4" class="h"/><rect x="618" y="10.0" width="20" height="23.3" class="m"/><rect x="621" y="27.9" width="17" height="5.4" class="s"/><rect x="618" y="29.9" width="4" height="3.4" class="s"/><rect x="629" y="26.5" width="9" height="3.4" class="s"/><rect x="635" y="23.1" width="3" height="3.4" class="s"/><rect x="625" y="10.0" width="7" height="3.4" class="h"/><rect x="618" y="10.0" width="3" height="6.8" class="h"/><rect x="642" y="10.0" width="34" height="23.3" class="m"/><rect x="653" y="27.9" width="23" height="5.4" class="s"/><rect x="642" y="29.9" width="12" height="3.4" class="s"/><rect x="661" y="26.5" width="15" height="3.4" class="s"/><rect x="642" y="10.0" width="25" height="3.4" class="h"/><rect x="679" y="10.0" width="55" height="23.3" class="m"/><rect x="682" y="27.9" width="52" height="5.4" class="s"/><rect x="679" y="29.9" width="4" height="3.4" class="s"/><rect x="718" y="26.5" width="16" height="3.4" class="s"/><rect x="686" y="10.0" width="38" height="3.4" class="h"/><rect x="738" y="10.0" width="27" height="23.3" class="m"/><rect x="746" y="27.9" width="19" height="5.4" class="s"/><rect x="738" y="29.9" width="9" height="3.4" class="s"/><rect x="756" y="26.5" width="9" height="3.4" class="s"/><rect x="745" y="10.0" width="14" height="3.4" class="h"/><rect x="738" y="10.0" width="3" height="6.8" class="h"/><rect x="768" y="10.0" width="41" height="23.3" class="m"/><rect x="774" y="27.9" width="36" height="5.4" class="s"/><rect x="768" y="29.9" width="6" height="3.4" class="s"/><rect x="796" y="26.5" width="14" height="3.4" class="s"/><rect x="775" y="10.0" width="18" height="3.4" class="h"/><rect x="813" y="10.0" width="41" height="23.3" class="m"/><rect x="822" y="27.9" width="32" height="5.4" class="s"/><rect x="813" y="29.9" width="10" height="3.4" class="s"/><rect x="838" y="26.5" width="16" height="3.4" class="s"/><rect x="820" y="10.0" width="14" height="3.4" class="h"/><rect x="813" y="10.0" width="3" height="6.8" class="h"/><rect x="858" y="10.0" width="20" height="23.3" class="m"/><rect x="862" y="27.9" width="16" height="5.4" class="s"/><rect x="858" y="29.9" width="5" height="3.4" class="s"/><rect x="871" y="26.5" width="7" height="3.4" class="s"/><rect x="864" y="10.0" width="4" height="3.4" class="h"/><rect x="858" y="10.0" width="3" height="6.8" class="h"/><rect x="865" y="13.4" width="6" height="3.4" class="h"/><rect x="-30" y="37.4" width="48" height="23.3" class="m"/><rect x="-12" y="55.3" width="30" height="5.4" class="s"/><rect x="-30" y="57.3" width="19" height="3.4" class="s"/><rect x="8" y="53.9" width="10" height="3.4" class="s"/><rect x="15" y="50.5" width="3" height="3.4" class="s"/><rect x="-30" y="37.4" width="34" height="3.4" class="h"/><rect x="-30" y="37.4" width="3" height="6.8" class="h"/><rect x="22" y="37.4" width="55" height="23.3" class="m"/><rect x="33" y="55.3" width="43" height="5.4" class="s"/><rect x="22" y="57.3" width="13" height="3.4" class="s"/><rect x="54" y="53.9" width="23" height="3.4" class="s"/><rect x="73" y="50.5" width="3" height="3.4" class="s"/><rect x="22" y="37.4" width="50" height="3.4" class="h"/><rect x="22" y="37.4" width="3" height="6.8" class="h"/><rect x="80" y="37.4" width="20" height="23.3" class="m"/><rect x="80" y="55.3" width="20" height="5.4" class="s"/><rect x="80" y="57.3" width="1" height="3.4" class="s"/><rect x="92" y="53.9" width="8" height="3.4" class="s"/><rect x="97" y="50.5" width="3" height="3.4" class="s"/><rect x="84" y="37.4" width="9" height="3.4" class="h"/><rect x="80" y="37.4" width="3" height="6.8" class="h"/><rect x="104" y="37.4" width="27" height="23.3" class="m"/><rect x="109" y="55.3" width="22" height="5.4" class="s"/><rect x="104" y="57.3" width="6" height="3.4" class="s"/><rect x="123" y="53.9" width="7" height="3.4" class="s"/><rect x="111" y="37.4" width="10" height="3.4" class="h"/><rect x="104" y="37.4" width="3" height="6.8" class="h"/><rect x="134" y="37.4" width="48" height="23.3" class="m"/><rect x="135" y="55.3" width="48" height="5.4" class="s"/><rect x="134" y="57.3" width="1" height="3.4" class="s"/><rect x="170" y="53.9" width="12" height="3.4" class="s"/><rect x="141" y="37.4" width="21" height="3.4" class="h"/><rect x="134" y="37.4" width="3" height="6.8" class="h"/><rect x="186" y="37.4" width="34" height="23.3" class="m"/><rect x="193" y="55.3" width="27" height="5.4" class="s"/><rect x="186" y="57.3" width="8" height="3.4" class="s"/><rect x="213" y="53.9" width="7" height="3.4" class="s"/><rect x="186" y="37.4" width="21" height="3.4" class="h"/><rect x="224" y="37.4" width="34" height="23.3" class="m"/><rect x="228" y="55.3" width="30" height="5.4" class="s"/><rect x="224" y="57.3" width="5" height="3.4" class="s"/><rect x="246" y="53.9" width="12" height="3.4" class="s"/><rect x="224" y="37.4" width="29" height="3.4" class="h"/><rect x="224" y="37.4" width="3" height="6.8" class="h"/><rect x="236" y="40.8" width="10" height="3.4" class="h"/><rect x="261" y="37.4" width="34" height="23.3" class="m"/><rect x="271" y="55.3" width="24" height="5.4" class="s"/><rect x="261" y="57.3" width="11" height="3.4" class="s"/><rect x="283" y="53.9" width="13" height="3.4" class="s"/><rect x="292" y="50.5" width="3" height="3.4" class="s"/><rect x="265" y="37.4" width="22" height="3.4" class="h"/><rect x="272" y="40.8" width="10" height="3.4" class="h"/><rect x="299" y="37.4" width="20" height="23.3" class="m"/><rect x="300" y="55.3" width="19" height="5.4" class="s"/><rect x="299" y="57.3" width="2" height="3.4" class="s"/><rect x="313" y="53.9" width="6" height="3.4" class="s"/><rect x="315" y="50.5" width="3" height="3.4" class="s"/><rect x="302" y="37.4" width="8" height="3.4" class="h"/><rect x="299" y="37.4" width="3" height="6.8" class="h"/><rect x="322" y="37.4" width="34" height="23.3" class="m"/><rect x="333" y="55.3" width="23" height="5.4" class="s"/><rect x="322" y="57.3" width="12" height="3.4" class="s"/><rect x="346" y="53.9" width="10" height="3.4" class="s"/><rect x="353" y="50.5" width="3" height="3.4" class="s"/><rect x="329" y="37.4" width="20" height="3.4" class="h"/><rect x="360" y="37.4" width="34" height="23.3" class="m"/><rect x="363" y="55.3" width="31" height="5.4" class="s"/><rect x="360" y="57.3" width="4" height="3.4" class="s"/><rect x="381" y="53.9" width="13" height="3.4" class="s"/><rect x="363" y="37.4" width="28" height="3.4" class="h"/><rect x="360" y="37.4" width="3" height="6.8" class="h"/><rect x="373" y="40.8" width="10" height="3.4" class="h"/><rect x="398" y="37.4" width="55" height="23.3" class="m"/><rect x="399" y="55.3" width="53" height="5.4" class="s"/><rect x="398" y="57.3" width="3" height="3.4" class="s"/><rect x="429" y="53.9" width="23" height="3.4" class="s"/><rect x="449" y="50.5" width="3" height="3.4" class="s"/><rect x="401" y="37.4" width="37" height="3.4" class="h"/><rect x="398" y="37.4" width="3" height="6.8" class="h"/><rect x="456" y="37.4" width="20" height="23.3" class="m"/><rect x="461" y="55.3" width="15" height="5.4" class="s"/><rect x="456" y="57.3" width="6" height="3.4" class="s"/><rect x="467" y="53.9" width="9" height="3.4" class="s"/><rect x="473" y="50.5" width="3" height="3.4" class="s"/><rect x="460" y="37.4" width="11" height="3.4" class="h"/><rect x="480" y="37.4" width="34" height="23.3" class="m"/><rect x="488" y="55.3" width="26" height="5.4" class="s"/><rect x="480" y="57.3" width="9" height="3.4" class="s"/><rect x="499" y="53.9" width="14" height="3.4" class="s"/><rect x="483" y="37.4" width="27" height="3.4" class="h"/><rect x="517" y="37.4" width="48" height="23.3" class="m"/><rect x="528" y="55.3" width="37" height="5.4" class="s"/><rect x="517" y="57.3" width="12" height="3.4" class="s"/><rect x="547" y="53.9" width="19" height="3.4" class="s"/><rect x="521" y="37.4" width="38" height="3.4" class="h"/><rect x="517" y="37.4" width="3" height="6.8" class="h"/><rect x="569" y="37.4" width="34" height="23.3" class="m"/><rect x="580" y="55.3" width="23" height="5.4" class="s"/><rect x="569" y="57.3" width="12" height="3.4" class="s"/><rect x="592" y="53.9" width="11" height="3.4" class="s"/><rect x="576" y="37.4" width="21" height="3.4" class="h"/><rect x="607" y="37.4" width="48" height="23.3" class="m"/><rect x="611" y="55.3" width="44" height="5.4" class="s"/><rect x="607" y="57.3" width="5" height="3.4" class="s"/><rect x="636" y="53.9" width="19" height="3.4" class="s"/><rect x="610" y="37.4" width="31" height="3.4" class="h"/><rect x="607" y="37.4" width="3" height="6.8" class="h"/><rect x="658" y="37.4" width="20" height="23.3" class="m"/><rect x="660" y="55.3" width="18" height="5.4" class="s"/><rect x="658" y="57.3" width="3" height="3.4" class="s"/><rect x="675" y="53.9" width="3" height="3.4" class="s"/><rect x="662" y="37.4" width="9" height="3.4" class="h"/><rect x="658" y="37.4" width="3" height="6.8" class="h"/><rect x="663" y="40.8" width="6" height="3.4" class="h"/><rect x="682" y="37.4" width="55" height="23.3" class="m"/><rect x="696" y="55.3" width="41" height="5.4" class="s"/><rect x="682" y="57.3" width="15" height="3.4" class="s"/><rect x="724" y="53.9" width="13" height="3.4" class="s"/><rect x="689" y="37.4" width="21" height="3.4" class="h"/><rect x="740" y="37.4" width="41" height="23.3" class="m"/><rect x="748" y="55.3" width="34" height="5.4" class="s"/><rect x="740" y="57.3" width="8" height="3.4" class="s"/><rect x="769" y="53.9" width="12" height="3.4" class="s"/><rect x="747" y="37.4" width="21" height="3.4" class="h"/><rect x="740" y="37.4" width="3" height="6.8" class="h"/><rect x="756" y="40.8" width="12" height="3.4" class="h"/><rect x="785" y="37.4" width="48" height="23.3" class="m"/><rect x="804" y="55.3" width="29" height="5.4" class="s"/><rect x="785" y="57.3" width="20" height="3.4" class="s"/><rect x="820" y="53.9" width="13" height="3.4" class="s"/><rect x="792" y="37.4" width="27" height="3.4" class="h"/><rect x="837" y="37.4" width="20" height="23.3" class="m"/><rect x="840" y="55.3" width="17" height="5.4" class="s"/><rect x="837" y="57.3" width="4" height="3.4" class="s"/><rect x="853" y="53.9" width="3" height="3.4" class="s"/><rect x="853" y="50.5" width="3" height="3.4" class="s"/><rect x="837" y="37.4" width="18" height="3.4" class="h"/><rect x="837" y="37.4" width="3" height="6.8" class="h"/><rect x="860" y="37.4" width="48" height="23.3" class="m"/><rect x="878" y="55.3" width="30" height="5.4" class="s"/><rect x="860" y="57.3" width="19" height="3.4" class="s"/><rect x="893" y="53.9" width="16" height="3.4" class="s"/><rect x="867" y="37.4" width="24" height="3.4" class="h"/><rect x="860" y="37.4" width="3" height="6.8" class="h"/><rect x="-22" y="64.8" width="41" height="23.3" class="m"/><rect x="-11" y="82.7" width="30" height="5.4" class="s"/><rect x="-22" y="84.7" width="12" height="3.4" class="s"/><rect x="10" y="81.3" width="9" height="3.4" class="s"/><rect x="16" y="77.9" width="3" height="3.4" class="s"/><rect x="-22" y="64.8" width="31" height="3.4" class="h"/><rect x="23" y="64.8" width="48" height="23.3" class="m"/><rect x="24" y="82.7" width="47" height="5.4" class="s"/><rect x="23" y="84.7" width="2" height="3.4" class="s"/><rect x="54" y="81.3" width="17" height="3.4" class="s"/><rect x="67" y="77.9" width="3" height="3.4" class="s"/><rect x="29" y="64.8" width="39" height="3.4" class="h"/><rect x="41" y="68.2" width="14" height="3.4" class="h"/><rect x="74" y="64.8" width="48" height="23.3" class="m"/><rect x="88" y="82.7" width="34" height="5.4" class="s"/><rect x="74" y="84.7" width="15" height="3.4" class="s"/><rect x="104" y="81.3" width="18" height="3.4" class="s"/><rect x="74" y="64.8" width="35" height="3.4" class="h"/><rect x="126" y="64.8" width="55" height="23.3" class="m"/><rect x="129" y="82.7" width="52" height="5.4" class="s"/><rect x="126" y="84.7" width="4" height="3.4" class="s"/><rect x="172" y="81.3" width="9" height="3.4" class="s"/><rect x="177" y="77.9" width="3" height="3.4" class="s"/><rect x="133" y="64.8" width="24" height="3.4" class="h"/><rect x="184" y="64.8" width="34" height="23.3" class="m"/><rect x="196" y="82.7" width="22" height="5.4" class="s"/><rect x="184" y="84.7" width="13" height="3.4" class="s"/><rect x="207" y="81.3" width="12" height="3.4" class="s"/><rect x="215" y="77.9" width="3" height="3.4" class="s"/><rect x="188" y="64.8" width="20" height="3.4" class="h"/><rect x="222" y="64.8" width="41" height="23.3" class="m"/><rect x="232" y="82.7" width="31" height="5.4" class="s"/><rect x="222" y="84.7" width="11" height="3.4" class="s"/><rect x="253" y="81.3" width="10" height="3.4" class="s"/><rect x="260" y="77.9" width="3" height="3.4" class="s"/><rect x="229" y="64.8" width="23" height="3.4" class="h"/><rect x="267" y="64.8" width="34" height="23.3" class="m"/><rect x="270" y="82.7" width="31" height="5.4" class="s"/><rect x="267" y="84.7" width="4" height="3.4" class="s"/><rect x="286" y="81.3" width="14" height="3.4" class="s"/><rect x="273" y="64.8" width="20" height="3.4" class="h"/><rect x="267" y="64.8" width="3" height="6.8" class="h"/><rect x="278" y="68.2" width="10" height="3.4" class="h"/><rect x="304" y="64.8" width="34" height="23.3" class="m"/><rect x="313" y="82.7" width="25" height="5.4" class="s"/><rect x="304" y="84.7" width="10" height="3.4" class="s"/><rect x="331" y="81.3" width="8" height="3.4" class="s"/><rect x="335" y="77.9" width="3" height="3.4" class="s"/><rect x="304" y="64.8" width="25" height="3.4" class="h"/><rect x="316" y="68.2" width="10" height="3.4" class="h"/><rect x="342" y="64.8" width="20" height="23.3" class="m"/><rect x="342" y="82.7" width="20" height="5.4" class="s"/><rect x="342" y="84.7" width="1" height="3.4" class="s"/><rect x="354" y="81.3" width="7" height="3.4" class="s"/><rect x="358" y="77.9" width="3" height="3.4" class="s"/><rect x="342" y="64.8" width="11" height="3.4" class="h"/><rect x="342" y="64.8" width="3" height="6.8" class="h"/><rect x="346" y="68.2" width="6" height="3.4" class="h"/><rect x="365" y="64.8" width="34" height="23.3" class="m"/><rect x="373" y="82.7" width="27" height="5.4" class="s"/><rect x="365" y="84.7" width="8" height="3.4" class="s"/><rect x="391" y="81.3" width="9" height="3.4" class="s"/><rect x="396" y="77.9" width="3" height="3.4" class="s"/><rect x="369" y="64.8" width="19" height="3.4" class="h"/><rect x="365" y="64.8" width="3" height="6.8" class="h"/><rect x="403" y="64.8" width="34" height="23.3" class="m"/><rect x="414" y="82.7" width="23" height="5.4" class="s"/><rect x="403" y="84.7" width="12" height="3.4" class="s"/><rect x="422" y="81.3" width="15" height="3.4" class="s"/><rect x="434" y="77.9" width="3" height="3.4" class="s"/><rect x="410" y="64.8" width="23" height="3.4" class="h"/><rect x="441" y="64.8" width="41" height="23.3" class="m"/><rect x="447" y="82.7" width="35" height="5.4" class="s"/><rect x="441" y="84.7" width="7" height="3.4" class="s"/><rect x="465" y="81.3" width="17" height="3.4" class="s"/><rect x="478" y="77.9" width="3" height="3.4" class="s"/><rect x="447" y="64.8" width="20" height="3.4" class="h"/><rect x="441" y="64.8" width="3" height="6.8" class="h"/><rect x="485" y="64.8" width="34" height="23.3" class="m"/><rect x="491" y="82.7" width="28" height="5.4" class="s"/><rect x="485" y="84.7" width="7" height="3.4" class="s"/><rect x="508" y="81.3" width="12" height="3.4" class="s"/><rect x="516" y="77.9" width="3" height="3.4" class="s"/><rect x="489" y="64.8" width="15" height="3.4" class="h"/><rect x="485" y="64.8" width="3" height="6.8" class="h"/><rect x="523" y="64.8" width="55" height="23.3" class="m"/><rect x="541" y="82.7" width="37" height="5.4" class="s"/><rect x="523" y="84.7" width="19" height="3.4" class="s"/><rect x="561" y="81.3" width="17" height="3.4" class="s"/><rect x="523" y="64.8" width="29" height="3.4" class="h"/><rect x="523" y="64.8" width="3" height="6.8" class="h"/><rect x="581" y="64.8" width="27" height="23.3" class="m"/><rect x="589" y="82.7" width="19" height="5.4" class="s"/><rect x="581" y="84.7" width="9" height="3.4" class="s"/><rect x="600" y="81.3" width="8" height="3.4" class="s"/><rect x="585" y="64.8" width="14" height="3.4" class="h"/><rect x="581" y="64.8" width="3" height="6.8" class="h"/><rect x="612" y="64.8" width="41" height="23.3" class="m"/><rect x="618" y="82.7" width="35" height="5.4" class="s"/><rect x="612" y="84.7" width="7" height="3.4" class="s"/><rect x="636" y="81.3" width="17" height="3.4" class="s"/><rect x="619" y="64.8" width="25" height="3.4" class="h"/><rect x="657" y="64.8" width="41" height="23.3" class="m"/><rect x="664" y="82.7" width="34" height="5.4" class="s"/><rect x="657" y="84.7" width="8" height="3.4" class="s"/><rect x="689" y="81.3" width="9" height="3.4" class="s"/><rect x="694" y="77.9" width="3" height="3.4" class="s"/><rect x="660" y="64.8" width="21" height="3.4" class="h"/><rect x="701" y="64.8" width="34" height="23.3" class="m"/><rect x="702" y="82.7" width="33" height="5.4" class="s"/><rect x="701" y="84.7" width="2" height="3.4" class="s"/><rect x="728" y="81.3" width="7" height="3.4" class="s"/><rect x="732" y="77.9" width="3" height="3.4" class="s"/><rect x="708" y="64.8" width="16" height="3.4" class="h"/><rect x="701" y="64.8" width="3" height="6.8" class="h"/><rect x="712" y="68.2" width="10" height="3.4" class="h"/><rect x="739" y="64.8" width="48" height="23.3" class="m"/><rect x="749" y="82.7" width="38" height="5.4" class="s"/><rect x="739" y="84.7" width="11" height="3.4" class="s"/><rect x="777" y="81.3" width="10" height="3.4" class="s"/><rect x="739" y="64.8" width="26" height="3.4" class="h"/><rect x="739" y="64.8" width="3" height="6.8" class="h"/><rect x="790" y="64.8" width="20" height="23.3" class="m"/><rect x="792" y="82.7" width="18" height="5.4" class="s"/><rect x="790" y="84.7" width="3" height="3.4" class="s"/><rect x="802" y="81.3" width="9" height="3.4" class="s"/><rect x="807" y="77.9" width="3" height="3.4" class="s"/><rect x="794" y="64.8" width="15" height="3.4" class="h"/><rect x="814" y="64.8" width="27" height="23.3" class="m"/><rect x="820" y="82.7" width="21" height="5.4" class="s"/><rect x="814" y="84.7" width="7" height="3.4" class="s"/><rect x="831" y="81.3" width="10" height="3.4" class="s"/><rect x="817" y="64.8" width="11" height="3.4" class="h"/><rect x="845" y="64.8" width="27" height="23.3" class="m"/><rect x="845" y="82.7" width="27" height="5.4" class="s"/><rect x="845" y="84.7" width="1" height="3.4" class="s"/><rect x="865" y="81.3" width="7" height="3.4" class="s"/><rect x="868" y="77.9" width="3" height="3.4" class="s"/><rect x="851" y="64.8" width="12" height="3.4" class="h"/><rect x="-22" y="92.2" width="55" height="23.3" class="m"/><rect x="-13" y="110.1" width="46" height="5.4" class="s"/><rect x="-22" y="112.1" width="10" height="3.4" class="s"/><rect x="14" y="108.7" width="19" height="3.4" class="s"/><rect x="-15" y="92.2" width="24" height="3.4" class="h"/><rect x="-22" y="92.2" width="3" height="6.8" class="h"/><rect x="37" y="92.2" width="27" height="23.3" class="m"/><rect x="44" y="110.1" width="19" height="5.4" class="s"/><rect x="37" y="112.1" width="9" height="3.4" class="s"/><rect x="59" y="108.7" width="5" height="3.4" class="s"/><rect x="60" y="105.3" width="3" height="3.4" class="s"/><rect x="43" y="92.2" width="11" height="3.4" class="h"/><rect x="37" y="92.2" width="3" height="6.8" class="h"/><rect x="67" y="92.2" width="27" height="23.3" class="m"/><rect x="77" y="110.1" width="17" height="5.4" class="s"/><rect x="67" y="112.1" width="11" height="3.4" class="s"/><rect x="90" y="108.7" width="4" height="3.4" class="s"/><rect x="74" y="92.2" width="11" height="3.4" class="h"/><rect x="67" y="92.2" width="3" height="6.8" class="h"/><rect x="78" y="95.6" width="8" height="3.4" class="h"/><rect x="98" y="92.2" width="34" height="23.3" class="m"/><rect x="101" y="110.1" width="31" height="5.4" class="s"/><rect x="98" y="112.1" width="4" height="3.4" class="s"/><rect x="118" y="108.7" width="14" height="3.4" class="s"/><rect x="105" y="92.2" width="13" height="3.4" class="h"/><rect x="98" y="92.2" width="3" height="6.8" class="h"/><rect x="135" y="92.2" width="41" height="23.3" class="m"/><rect x="140" y="110.1" width="37" height="5.4" class="s"/><rect x="135" y="112.1" width="5" height="3.4" class="s"/><rect x="169" y="108.7" width="8" height="3.4" class="s"/><rect x="173" y="105.3" width="3" height="3.4" class="s"/><rect x="142" y="92.2" width="16" height="3.4" class="h"/><rect x="180" y="92.2" width="34" height="23.3" class="m"/><rect x="192" y="110.1" width="22" height="5.4" class="s"/><rect x="180" y="112.1" width="13" height="3.4" class="s"/><rect x="206" y="108.7" width="8" height="3.4" class="s"/><rect x="211" y="105.3" width="3" height="3.4" class="s"/><rect x="183" y="92.2" width="28" height="3.4" class="h"/><rect x="180" y="92.2" width="3" height="6.8" class="h"/><rect x="188" y="95.6" width="10" height="3.4" class="h"/><rect x="218" y="92.2" width="34" height="23.3" class="m"/><rect x="226" y="110.1" width="26" height="5.4" class="s"/><rect x="218" y="112.1" width="9" height="3.4" class="s"/><rect x="242" y="108.7" width="9" height="3.4" class="s"/><rect x="248" y="105.3" width="3" height="3.4" class="s"/><rect x="224" y="92.2" width="14" height="3.4" class="h"/><rect x="218" y="92.2" width="3" height="6.8" class="h"/><rect x="226" y="95.6" width="10" height="3.4" class="h"/><rect x="255" y="92.2" width="41" height="23.3" class="m"/><rect x="265" y="110.1" width="31" height="5.4" class="s"/><rect x="255" y="112.1" width="11" height="3.4" class="s"/><rect x="289" y="108.7" width="7" height="3.4" class="s"/><rect x="259" y="92.2" width="26" height="3.4" class="h"/><rect x="255" y="92.2" width="3" height="6.8" class="h"/><rect x="300" y="92.2" width="27" height="23.3" class="m"/><rect x="305" y="110.1" width="22" height="5.4" class="s"/><rect x="300" y="112.1" width="6" height="3.4" class="s"/><rect x="316" y="108.7" width="10" height="3.4" class="s"/><rect x="323" y="105.3" width="3" height="3.4" class="s"/><rect x="300" y="92.2" width="23" height="3.4" class="h"/><rect x="300" y="92.2" width="3" height="6.8" class="h"/><rect x="330" y="92.2" width="41" height="23.3" class="m"/><rect x="343" y="110.1" width="28" height="5.4" class="s"/><rect x="330" y="112.1" width="14" height="3.4" class="s"/><rect x="354" y="108.7" width="18" height="3.4" class="s"/><rect x="330" y="92.2" width="37" height="3.4" class="h"/><rect x="375" y="92.2" width="34" height="23.3" class="m"/><rect x="385" y="110.1" width="24" height="5.4" class="s"/><rect x="375" y="112.1" width="11" height="3.4" class="s"/><rect x="400" y="108.7" width="9" height="3.4" class="s"/><rect x="406" y="105.3" width="3" height="3.4" class="s"/><rect x="375" y="92.2" width="29" height="3.4" class="h"/><rect x="375" y="92.2" width="3" height="6.8" class="h"/><rect x="413" y="92.2" width="34" height="23.3" class="m"/><rect x="421" y="110.1" width="25" height="5.4" class="s"/><rect x="413" y="112.1" width="10" height="3.4" class="s"/><rect x="441" y="108.7" width="5" height="3.4" class="s"/><rect x="443" y="105.3" width="3" height="3.4" class="s"/><rect x="419" y="92.2" width="11" height="3.4" class="h"/><rect x="413" y="92.2" width="3" height="6.8" class="h"/><rect x="421" y="95.6" width="10" height="3.4" class="h"/><rect x="450" y="92.2" width="34" height="23.3" class="m"/><rect x="461" y="110.1" width="23" height="5.4" class="s"/><rect x="450" y="112.1" width="12" height="3.4" class="s"/><rect x="470" y="108.7" width="14" height="3.4" class="s"/><rect x="481" y="105.3" width="3" height="3.4" class="s"/><rect x="457" y="92.2" width="18" height="3.4" class="h"/><rect x="488" y="92.2" width="27" height="23.3" class="m"/><rect x="498" y="110.1" width="17" height="5.4" class="s"/><rect x="488" y="112.1" width="11" height="3.4" class="s"/><rect x="507" y="108.7" width="7" height="3.4" class="s"/><rect x="491" y="92.2" width="10" height="3.4" class="h"/><rect x="488" y="92.2" width="3" height="6.8" class="h"/><rect x="497" y="95.6" width="8" height="3.4" class="h"/><rect x="518" y="92.2" width="55" height="23.3" class="m"/><rect x="523" y="110.1" width="50" height="5.4" class="s"/><rect x="518" y="112.1" width="6" height="3.4" class="s"/><rect x="558" y="108.7" width="16" height="3.4" class="s"/><rect x="518" y="92.2" width="51" height="3.4" class="h"/><rect x="534" y="95.6" width="16" height="3.4" class="h"/><rect x="577" y="92.2" width="41" height="23.3" class="m"/><rect x="593" y="110.1" width="25" height="5.4" class="s"/><rect x="577" y="112.1" width="17" height="3.4" class="s"/><rect x="608" y="108.7" width="10" height="3.4" class="s"/><rect x="615" y="105.3" width="3" height="3.4" class="s"/><rect x="577" y="92.2" width="33" height="3.4" class="h"/><rect x="577" y="92.2" width="3" height="6.8" class="h"/><rect x="622" y="92.2" width="55" height="23.3" class="m"/><rect x="638" y="110.1" width="39" height="5.4" class="s"/><rect x="622" y="112.1" width="17" height="3.4" class="s"/><rect x="665" y="108.7" width="12" height="3.4" class="s"/><rect x="673" y="105.3" width="3" height="3.4" class="s"/><rect x="625" y="92.2" width="24" height="3.4" class="h"/><rect x="622" y="92.2" width="3" height="6.8" class="h"/><rect x="680" y="92.2" width="34" height="23.3" class="m"/><rect x="684" y="110.1" width="30" height="5.4" class="s"/><rect x="680" y="112.1" width="5" height="3.4" class="s"/><rect x="700" y="108.7" width="14" height="3.4" class="s"/><rect x="687" y="92.2" width="13" height="3.4" class="h"/><rect x="690" y="95.6" width="10" height="3.4" class="h"/><rect x="718" y="92.2" width="41" height="23.3" class="m"/><rect x="733" y="110.1" width="25" height="5.4" class="s"/><rect x="718" y="112.1" width="17" height="3.4" class="s"/><rect x="750" y="108.7" width="9" height="3.4" class="s"/><rect x="718" y="92.2" width="25" height="3.4" class="h"/><rect x="718" y="92.2" width="3" height="6.8" class="h"/><rect x="762" y="92.2" width="41" height="23.3" class="m"/><rect x="767" y="110.1" width="36" height="5.4" class="s"/><rect x="762" y="112.1" width="6" height="3.4" class="s"/><rect x="788" y="108.7" width="15" height="3.4" class="s"/><rect x="800" y="105.3" width="3" height="3.4" class="s"/><rect x="769" y="92.2" width="20" height="3.4" class="h"/><rect x="772" y="95.6" width="12" height="3.4" class="h"/><rect x="807" y="92.2" width="27" height="23.3" class="m"/><rect x="808" y="110.1" width="26" height="5.4" class="s"/><rect x="807" y="112.1" width="2" height="3.4" class="s"/><rect x="827" y="108.7" width="7" height="3.4" class="s"/><rect x="831" y="105.3" width="3" height="3.4" class="s"/><rect x="807" y="92.2" width="18" height="3.4" class="h"/><rect x="838" y="92.2" width="27" height="23.3" class="m"/><rect x="839" y="110.1" width="26" height="5.4" class="s"/><rect x="838" y="112.1" width="2" height="3.4" class="s"/><rect x="853" y="108.7" width="12" height="3.4" class="s"/><rect x="841" y="92.2" width="15" height="3.4" class="h"/><rect x="838" y="92.2" width="3" height="6.8" class="h"/><rect x="868" y="92.2" width="48" height="23.3" class="m"/><rect x="886" y="110.1" width="30" height="5.4" class="s"/><rect x="868" y="112.1" width="19" height="3.4" class="s"/><rect x="897" y="108.7" width="20" height="3.4" class="s"/><rect x="913" y="105.3" width="3" height="3.4" class="s"/><rect x="868" y="92.2" width="42" height="3.4" class="h"/><rect x="868" y="92.2" width="3" height="6.8" class="h"/><rect x="882" y="95.6" width="14" height="3.4" class="h"/><rect x="-6" y="119.6" width="48" height="23.3" class="m"/><rect x="6" y="137.5" width="36" height="5.4" class="s"/><rect x="-6" y="139.5" width="13" height="3.4" class="s"/><rect x="25" y="136.1" width="17" height="3.4" class="s"/><rect x="-6" y="119.6" width="38" height="3.4" class="h"/><rect x="7" y="123.0" width="14" height="3.4" class="h"/><rect x="46" y="119.6" width="41" height="23.3" class="m"/><rect x="51" y="137.5" width="36" height="5.4" class="s"/><rect x="46" y="139.5" width="6" height="3.4" class="s"/><rect x="74" y="136.1" width="13" height="3.4" class="s"/><rect x="46" y="119.6" width="30" height="3.4" class="h"/><rect x="90" y="119.6" width="34" height="23.3" class="m"/><rect x="94" y="137.5" width="31" height="5.4" class="s"/><rect x="90" y="139.5" width="4" height="3.4" class="s"/><rect x="114" y="136.1" width="10" height="3.4" class="s"/><rect x="121" y="132.7" width="3" height="3.4" class="s"/><rect x="90" y="119.6" width="22" height="3.4" class="h"/><rect x="90" y="119.6" width="3" height="6.8" class="h"/><rect x="102" y="123.0" width="10" height="3.4" class="h"/><rect x="128" y="119.6" width="34" height="23.3" class="m"/><rect x="136" y="137.5" width="26" height="5.4" class="s"/><rect x="128" y="139.5" width="9" height="3.4" class="s"/><rect x="147" y="136.1" width="15" height="3.4" class="s"/><rect x="128" y="119.6" width="19" height="3.4" class="h"/><rect x="128" y="119.6" width="3" height="6.8" class="h"/><rect x="165" y="119.6" width="41" height="23.3" class="m"/><rect x="171" y="137.5" width="36" height="5.4" class="s"/><rect x="165" y="139.5" width="6" height="3.4" class="s"/><rect x="199" y="136.1" width="7" height="3.4" class="s"/><rect x="203" y="132.7" width="3" height="3.4" class="s"/><rect x="169" y="119.6" width="33" height="3.4" class="h"/><rect x="165" y="119.6" width="3" height="6.8" class="h"/><rect x="210" y="119.6" width="34" height="23.3" class="m"/><rect x="222" y="137.5" width="22" height="5.4" class="s"/><rect x="210" y="139.5" width="13" height="3.4" class="s"/><rect x="234" y="136.1" width="10" height="3.4" class="s"/><rect x="217" y="119.6" width="24" height="3.4" class="h"/><rect x="210" y="119.6" width="3" height="6.8" class="h"/><rect x="248" y="119.6" width="41" height="23.3" class="m"/><rect x="257" y="137.5" width="31" height="5.4" class="s"/><rect x="248" y="139.5" width="11" height="3.4" class="s"/><rect x="272" y="136.1" width="17" height="3.4" class="s"/><rect x="251" y="119.6" width="30" height="3.4" class="h"/><rect x="248" y="119.6" width="3" height="6.8" class="h"/><rect x="292" y="119.6" width="41" height="23.3" class="m"/><rect x="306" y="137.5" width="27" height="5.4" class="s"/><rect x="292" y="139.5" width="15" height="3.4" class="s"/><rect x="317" y="136.1" width="16" height="3.4" class="s"/><rect x="292" y="119.6" width="29" height="3.4" class="h"/><rect x="292" y="119.6" width="3" height="6.8" class="h"/><rect x="337" y="119.6" width="34" height="23.3" class="m"/><rect x="341" y="137.5" width="30" height="5.4" class="s"/><rect x="337" y="139.5" width="5" height="3.4" class="s"/><rect x="362" y="136.1" width="8" height="3.4" class="s"/><rect x="340" y="119.6" width="23" height="3.4" class="h"/><rect x="374" y="119.6" width="34" height="23.3" class="m"/><rect x="377" y="137.5" width="31" height="5.4" class="s"/><rect x="374" y="139.5" width="4" height="3.4" class="s"/><rect x="398" y="136.1" width="11" height="3.4" class="s"/><rect x="405" y="132.7" width="3" height="3.4" class="s"/><rect x="378" y="119.6" width="15" height="3.4" class="h"/><rect x="374" y="119.6" width="3" height="6.8" class="h"/><rect x="382" y="123.0" width="10" height="3.4" class="h"/><rect x="412" y="119.6" width="34" height="23.3" class="m"/><rect x="420" y="137.5" width="26" height="5.4" class="s"/><rect x="412" y="139.5" width="9" height="3.4" class="s"/><rect x="434" y="136.1" width="12" height="3.4" class="s"/><rect x="412" y="119.6" width="28" height="3.4" class="h"/><rect x="450" y="119.6" width="55" height="23.3" class="m"/><rect x="463" y="137.5" width="42" height="5.4" class="s"/><rect x="450" y="139.5" width="14" height="3.4" class="s"/><rect x="488" y="136.1" width="17" height="3.4" class="s"/><rect x="501" y="132.7" width="3" height="3.4" class="s"/><rect x="456" y="119.6" width="43" height="3.4" class="h"/><rect x="450" y="119.6" width="3" height="6.8" class="h"/><rect x="508" y="119.6" width="41" height="23.3" class="m"/><rect x="516" y="137.5" width="33" height="5.4" class="s"/><rect x="508" y="139.5" width="9" height="3.4" class="s"/><rect x="543" y="136.1" width="6" height="3.4" class="s"/><rect x="515" y="119.6" width="21" height="3.4" class="h"/><rect x="508" y="119.6" width="3" height="6.8" class="h"/><rect x="553" y="119.6" width="41" height="23.3" class="m"/><rect x="561" y="137.5" width="32" height="5.4" class="s"/><rect x="553" y="139.5" width="10" height="3.4" class="s"/><rect x="581" y="136.1" width="13" height="3.4" class="s"/><rect x="556" y="119.6" width="34" height="3.4" class="h"/><rect x="553" y="119.6" width="3" height="6.8" class="h"/><rect x="597" y="119.6" width="48" height="23.3" class="m"/><rect x="611" y="137.5" width="34" height="5.4" class="s"/><rect x="597" y="139.5" width="15" height="3.4" class="s"/><rect x="632" y="136.1" width="13" height="3.4" class="s"/><rect x="601" y="119.6" width="40" height="3.4" class="h"/><rect x="615" y="123.0" width="14" height="3.4" class="h"/><rect x="649" y="119.6" width="34" height="23.3" class="m"/><rect x="656" y="137.5" width="27" height="5.4" class="s"/><rect x="649" y="139.5" width="8" height="3.4" class="s"/><rect x="672" y="136.1" width="11" height="3.4" class="s"/><rect x="680" y="132.7" width="3" height="3.4" class="s"/><rect x="656" y="119.6" width="12" height="3.4" class="h"/><rect x="687" y="119.6" width="48" height="23.3" class="m"/><rect x="705" y="137.5" width="30" height="5.4" class="s"/><rect x="687" y="139.5" width="19" height="3.4" class="s"/><rect x="726" y="136.1" width="9" height="3.4" class="s"/><rect x="693" y="119.6" width="38" height="3.4" class="h"/><rect x="738" y="119.6" width="48" height="23.3" class="m"/><rect x="749" y="137.5" width="37" height="5.4" class="s"/><rect x="738" y="139.5" width="12" height="3.4" class="s"/><rect x="767" y="136.1" width="19" height="3.4" class="s"/><rect x="742" y="119.6" width="33" height="3.4" class="h"/><rect x="755" y="123.0" width="14" height="3.4" class="h"/><rect x="790" y="119.6" width="27" height="23.3" class="m"/><rect x="799" y="137.5" width="17" height="5.4" class="s"/><rect x="790" y="139.5" width="11" height="3.4" class="s"/><rect x="809" y="136.1" width="7" height="3.4" class="s"/><rect x="813" y="132.7" width="3" height="3.4" class="s"/><rect x="793" y="119.6" width="13" height="3.4" class="h"/><rect x="790" y="119.6" width="3" height="6.8" class="h"/><rect x="796" y="123.0" width="8" height="3.4" class="h"/><rect x="820" y="119.6" width="55" height="23.3" class="m"/><rect x="838" y="137.5" width="37" height="5.4" class="s"/><rect x="820" y="139.5" width="19" height="3.4" class="s"/><rect x="857" y="136.1" width="18" height="3.4" class="s"/><rect x="872" y="132.7" width="3" height="3.4" class="s"/><rect x="827" y="119.6" width="26" height="3.4" class="h"/><rect x="820" y="119.6" width="3" height="6.8" class="h"/><rect x="-22" y="147.0" width="41" height="23.3" class="m"/><rect x="-17" y="164.9" width="36" height="5.4" class="s"/><rect x="-22" y="166.9" width="6" height="3.4" class="s"/><rect x="2" y="163.5" width="17" height="3.4" class="s"/><rect x="-19" y="147.0" width="33" height="3.4" class="h"/><rect x="-22" y="147.0" width="3" height="6.8" class="h"/><rect x="23" y="147.0" width="20" height="23.3" class="m"/><rect x="24" y="164.9" width="18" height="5.4" class="s"/><rect x="23" y="166.9" width="3" height="3.4" class="s"/><rect x="39" y="163.5" width="4" height="3.4" class="s"/><rect x="39" y="160.1" width="3" height="3.4" class="s"/><rect x="26" y="147.0" width="7" height="3.4" class="h"/><rect x="46" y="147.0" width="34" height="23.3" class="m"/><rect x="53" y="164.9" width="27" height="5.4" class="s"/><rect x="46" y="166.9" width="8" height="3.4" class="s"/><rect x="67" y="163.5" width="13" height="3.4" class="s"/><rect x="46" y="147.0" width="27" height="3.4" class="h"/><rect x="46" y="147.0" width="3" height="6.8" class="h"/><rect x="84" y="147.0" width="41" height="23.3" class="m"/><rect x="98" y="164.9" width="27" height="5.4" class="s"/><rect x="84" y="166.9" width="15" height="3.4" class="s"/><rect x="115" y="163.5" width="10" height="3.4" class="s"/><rect x="121" y="160.1" width="3" height="3.4" class="s"/><rect x="91" y="147.0" width="31" height="3.4" class="h"/><rect x="128" y="147.0" width="34" height="23.3" class="m"/><rect x="131" y="164.9" width="31" height="5.4" class="s"/><rect x="128" y="166.9" width="4" height="3.4" class="s"/><rect x="150" y="163.5" width="12" height="3.4" class="s"/><rect x="128" y="147.0" width="21" height="3.4" class="h"/><rect x="166" y="147.0" width="41" height="23.3" class="m"/><rect x="179" y="164.9" width="28" height="5.4" class="s"/><rect x="166" y="166.9" width="14" height="3.4" class="s"/><rect x="193" y="163.5" width="14" height="3.4" class="s"/><rect x="166" y="147.0" width="31" height="3.4" class="h"/><rect x="166" y="147.0" width="3" height="6.8" class="h"/><rect x="182" y="150.4" width="12" height="3.4" class="h"/><rect x="211" y="147.0" width="34" height="23.3" class="m"/><rect x="214" y="164.9" width="30" height="5.4" class="s"/><rect x="211" y="166.9" width="5" height="3.4" class="s"/><rect x="236" y="163.5" width="9" height="3.4" class="s"/><rect x="241" y="160.1" width="3" height="3.4" class="s"/><rect x="211" y="147.0" width="24" height="3.4" class="h"/><rect x="211" y="147.0" width="3" height="6.8" class="h"/><rect x="248" y="147.0" width="20" height="23.3" class="m"/><rect x="248" y="164.9" width="20" height="5.4" class="s"/><rect x="248" y="166.9" width="1" height="3.4" class="s"/><rect x="263" y="163.5" width="5" height="3.4" class="s"/><rect x="252" y="147.0" width="14" height="3.4" class="h"/><rect x="248" y="147.0" width="3" height="6.8" class="h"/><rect x="255" y="150.4" width="6" height="3.4" class="h"/><rect x="272" y="147.0" width="34" height="23.3" class="m"/><rect x="274" y="164.9" width="32" height="5.4" class="s"/><rect x="272" y="166.9" width="3" height="3.4" class="s"/><rect x="298" y="163.5" width="8" height="3.4" class="s"/><rect x="302" y="160.1" width="3" height="3.4" class="s"/><rect x="272" y="147.0" width="32" height="3.4" class="h"/><rect x="272" y="147.0" width="3" height="6.8" class="h"/><rect x="309" y="147.0" width="48" height="23.3" class="m"/><rect x="309" y="164.9" width="48" height="5.4" class="s"/><rect x="309" y="166.9" width="1" height="3.4" class="s"/><rect x="349" y="163.5" width="9" height="3.4" class="s"/><rect x="354" y="160.1" width="3" height="3.4" class="s"/><rect x="309" y="147.0" width="36" height="3.4" class="h"/><rect x="361" y="147.0" width="55" height="23.3" class="m"/><rect x="378" y="164.9" width="38" height="5.4" class="s"/><rect x="361" y="166.9" width="18" height="3.4" class="s"/><rect x="400" y="163.5" width="16" height="3.4" class="s"/><rect x="368" y="147.0" width="38" height="3.4" class="h"/><rect x="361" y="147.0" width="3" height="6.8" class="h"/><rect x="420" y="147.0" width="34" height="23.3" class="m"/><rect x="428" y="164.9" width="26" height="5.4" class="s"/><rect x="420" y="166.9" width="9" height="3.4" class="s"/><rect x="446" y="163.5" width="7" height="3.4" class="s"/><rect x="450" y="160.1" width="3" height="3.4" class="s"/><rect x="423" y="147.0" width="17" height="3.4" class="h"/><rect x="420" y="147.0" width="3" height="6.8" class="h"/><rect x="457" y="147.0" width="34" height="23.3" class="m"/><rect x="461" y="164.9" width="30" height="5.4" class="s"/><rect x="457" y="166.9" width="5" height="3.4" class="s"/><rect x="481" y="163.5" width="10" height="3.4" class="s"/><rect x="464" y="147.0" width="18" height="3.4" class="h"/><rect x="457" y="147.0" width="3" height="6.8" class="h"/><rect x="495" y="147.0" width="20" height="23.3" class="m"/><rect x="499" y="164.9" width="15" height="5.4" class="s"/><rect x="495" y="166.9" width="6" height="3.4" class="s"/><rect x="511" y="163.5" width="4" height="3.4" class="s"/><rect x="511" y="160.1" width="3" height="3.4" class="s"/><rect x="495" y="147.0" width="15" height="3.4" class="h"/><rect x="518" y="147.0" width="55" height="23.3" class="m"/><rect x="534" y="164.9" width="39" height="5.4" class="s"/><rect x="518" y="166.9" width="17" height="3.4" class="s"/><rect x="563" y="163.5" width="11" height="3.4" class="s"/><rect x="570" y="160.1" width="3" height="3.4" class="s"/><rect x="518" y="147.0" width="50" height="3.4" class="h"/><rect x="518" y="147.0" width="3" height="6.8" class="h"/><rect x="577" y="147.0" width="34" height="23.3" class="m"/><rect x="585" y="164.9" width="26" height="5.4" class="s"/><rect x="577" y="166.9" width="9" height="3.4" class="s"/><rect x="596" y="163.5" width="15" height="3.4" class="s"/><rect x="608" y="160.1" width="3" height="3.4" class="s"/><rect x="584" y="147.0" width="15" height="3.4" class="h"/><rect x="615" y="147.0" width="41" height="23.3" class="m"/><rect x="627" y="164.9" width="28" height="5.4" class="s"/><rect x="615" y="166.9" width="14" height="3.4" class="s"/><rect x="643" y="163.5" width="12" height="3.4" class="s"/><rect x="621" y="147.0" width="17" height="3.4" class="h"/><rect x="615" y="147.0" width="3" height="6.8" class="h"/><rect x="628" y="150.4" width="12" height="3.4" class="h"/><rect x="659" y="147.0" width="55" height="23.3" class="m"/><rect x="661" y="164.9" width="54" height="5.4" class="s"/><rect x="659" y="166.9" width="2" height="3.4" class="s"/><rect x="696" y="163.5" width="18" height="3.4" class="s"/><rect x="711" y="160.1" width="3" height="3.4" class="s"/><rect x="659" y="147.0" width="45" height="3.4" class="h"/><rect x="679" y="150.4" width="16" height="3.4" class="h"/><rect x="718" y="147.0" width="34" height="23.3" class="m"/><rect x="720" y="164.9" width="32" height="5.4" class="s"/><rect x="718" y="166.9" width="3" height="3.4" class="s"/><rect x="741" y="163.5" width="11" height="3.4" class="s"/><rect x="718" y="147.0" width="17" height="3.4" class="h"/><rect x="718" y="147.0" width="3" height="6.8" class="h"/><rect x="755" y="147.0" width="27" height="23.3" class="m"/><rect x="760" y="164.9" width="23" height="5.4" class="s"/><rect x="755" y="166.9" width="5" height="3.4" class="s"/><rect x="773" y="163.5" width="10" height="3.4" class="s"/><rect x="779" y="160.1" width="3" height="3.4" class="s"/><rect x="755" y="147.0" width="25" height="3.4" class="h"/><rect x="786" y="147.0" width="34" height="23.3" class="m"/><rect x="790" y="164.9" width="30" height="5.4" class="s"/><rect x="786" y="166.9" width="5" height="3.4" class="s"/><rect x="806" y="163.5" width="14" height="3.4" class="s"/><rect x="789" y="147.0" width="21" height="3.4" class="h"/><rect x="824" y="147.0" width="41" height="23.3" class="m"/><rect x="839" y="164.9" width="25" height="5.4" class="s"/><rect x="824" y="166.9" width="17" height="3.4" class="s"/><rect x="858" y="163.5" width="7" height="3.4" class="s"/><rect x="861" y="160.1" width="3" height="3.4" class="s"/><rect x="824" y="147.0" width="28" height="3.4" class="h"/><rect x="835" y="150.4" width="12" height="3.4" class="h"/><rect x="868" y="147.0" width="34" height="23.3" class="m"/><rect x="874" y="164.9" width="28" height="5.4" class="s"/><rect x="868" y="166.9" width="7" height="3.4" class="s"/><rect x="891" y="163.5" width="11" height="3.4" class="s"/><rect x="872" y="147.0" width="19" height="3.4" class="h"/><rect x="868" y="147.0" width="3" height="6.8" class="h"/><rect x="-14" y="174.4" width="34" height="23.3" class="m"/><rect x="-3" y="192.3" width="23" height="5.4" class="s"/><rect x="-14" y="194.3" width="12" height="3.4" class="s"/><rect x="13" y="190.9" width="7" height="3.4" class="s"/><rect x="17" y="187.5" width="3" height="3.4" class="s"/><rect x="-11" y="174.4" width="17" height="3.4" class="h"/><rect x="-14" y="174.4" width="3" height="6.8" class="h"/><rect x="-4" y="177.8" width="10" height="3.4" class="h"/><rect x="24" y="174.4" width="34" height="23.3" class="m"/><rect x="35" y="192.3" width="22" height="5.4" class="s"/><rect x="24" y="194.3" width="13" height="3.4" class="s"/><rect x="44" y="190.9" width="13" height="3.4" class="s"/><rect x="54" y="187.5" width="3" height="3.4" class="s"/><rect x="24" y="174.4" width="18" height="3.4" class="h"/><rect x="24" y="174.4" width="3" height="6.8" class="h"/><rect x="61" y="174.4" width="20" height="23.3" class="m"/><rect x="65" y="192.3" width="16" height="5.4" class="s"/><rect x="61" y="194.3" width="5" height="3.4" class="s"/><rect x="77" y="190.9" width="5" height="3.4" class="s"/><rect x="68" y="174.4" width="12" height="3.4" class="h"/><rect x="67" y="177.8" width="6" height="3.4" class="h"/><rect x="85" y="174.4" width="34" height="23.3" class="m"/><rect x="95" y="192.3" width="24" height="5.4" class="s"/><rect x="85" y="194.3" width="11" height="3.4" class="s"/><rect x="111" y="190.9" width="7" height="3.4" class="s"/><rect x="115" y="187.5" width="3" height="3.4" class="s"/><rect x="85" y="174.4" width="28" height="3.4" class="h"/><rect x="94" y="177.8" width="10" height="3.4" class="h"/><rect x="122" y="174.4" width="48" height="23.3" class="m"/><rect x="131" y="192.3" width="39" height="5.4" class="s"/><rect x="122" y="194.3" width="10" height="3.4" class="s"/><rect x="161" y="190.9" width="9" height="3.4" class="s"/><rect x="167" y="187.5" width="3" height="3.4" class="s"/><rect x="126" y="174.4" width="37" height="3.4" class="h"/><rect x="122" y="174.4" width="3" height="6.8" class="h"/><rect x="136" y="177.8" width="14" height="3.4" class="h"/><rect x="174" y="174.4" width="34" height="23.3" class="m"/><rect x="181" y="192.3" width="27" height="5.4" class="s"/><rect x="174" y="194.3" width="8" height="3.4" class="s"/><rect x="195" y="190.9" width="13" height="3.4" class="s"/><rect x="174" y="174.4" width="17" height="3.4" class="h"/><rect x="174" y="174.4" width="3" height="6.8" class="h"/><rect x="212" y="174.4" width="34" height="23.3" class="m"/><rect x="219" y="192.3" width="27" height="5.4" class="s"/><rect x="212" y="194.3" width="8" height="3.4" class="s"/><rect x="236" y="190.9" width="10" height="3.4" class="s"/><rect x="242" y="187.5" width="3" height="3.4" class="s"/><rect x="215" y="174.4" width="24" height="3.4" class="h"/><rect x="212" y="174.4" width="3" height="6.8" class="h"/><rect x="220" y="177.8" width="10" height="3.4" class="h"/><rect x="249" y="174.4" width="55" height="23.3" class="m"/><rect x="258" y="192.3" width="46" height="5.4" class="s"/><rect x="249" y="194.3" width="10" height="3.4" class="s"/><rect x="286" y="190.9" width="18" height="3.4" class="s"/><rect x="249" y="174.4" width="30" height="3.4" class="h"/><rect x="249" y="174.4" width="3" height="6.8" class="h"/><rect x="308" y="174.4" width="34" height="23.3" class="m"/><rect x="308" y="192.3" width="33" height="5.4" class="s"/><rect x="308" y="194.3" width="2" height="3.4" class="s"/><rect x="327" y="190.9" width="15" height="3.4" class="s"/><rect x="315" y="174.4" width="10" height="3.4" class="h"/><rect x="345" y="174.4" width="27" height="23.3" class="m"/><rect x="355" y="192.3" width="17" height="5.4" class="s"/><rect x="345" y="194.3" width="11" height="3.4" class="s"/><rect x="362" y="190.9" width="10" height="3.4" class="s"/><rect x="352" y="174.4" width="8" height="3.4" class="h"/><rect x="376" y="174.4" width="41" height="23.3" class="m"/><rect x="377" y="192.3" width="40" height="5.4" class="s"/><rect x="376" y="194.3" width="2" height="3.4" class="s"/><rect x="404" y="190.9" width="13" height="3.4" class="s"/><rect x="414" y="187.5" width="3" height="3.4" class="s"/><rect x="376" y="174.4" width="30" height="3.4" class="h"/><rect x="390" y="177.8" width="12" height="3.4" class="h"/><rect x="421" y="174.4" width="34" height="23.3" class="m"/><rect x="423" y="192.3" width="32" height="5.4" class="s"/><rect x="421" y="194.3" width="3" height="3.4" class="s"/><rect x="443" y="190.9" width="11" height="3.4" class="s"/><rect x="451" y="187.5" width="3" height="3.4" class="s"/><rect x="421" y="174.4" width="22" height="3.4" class="h"/><rect x="458" y="174.4" width="41" height="23.3" class="m"/><rect x="473" y="192.3" width="26" height="5.4" class="s"/><rect x="458" y="194.3" width="16" height="3.4" class="s"/><rect x="491" y="190.9" width="9" height="3.4" class="s"/><rect x="496" y="187.5" width="3" height="3.4" class="s"/><rect x="462" y="174.4" width="30" height="3.4" class="h"/><rect x="458" y="174.4" width="3" height="6.8" class="h"/><rect x="503" y="174.4" width="20" height="23.3" class="m"/><rect x="510" y="192.3" width="13" height="5.4" class="s"/><rect x="503" y="194.3" width="8" height="3.4" class="s"/><rect x="515" y="190.9" width="8" height="3.4" class="s"/><rect x="506" y="174.4" width="9" height="3.4" class="h"/><rect x="503" y="174.4" width="3" height="6.8" class="h"/><rect x="526" y="174.4" width="41" height="23.3" class="m"/><rect x="534" y="192.3" width="33" height="5.4" class="s"/><rect x="526" y="194.3" width="9" height="3.4" class="s"/><rect x="553" y="190.9" width="14" height="3.4" class="s"/><rect x="564" y="187.5" width="3" height="3.4" class="s"/><rect x="526" y="174.4" width="21" height="3.4" class="h"/><rect x="526" y="174.4" width="3" height="6.8" class="h"/><rect x="571" y="174.4" width="41" height="23.3" class="m"/><rect x="575" y="192.3" width="37" height="5.4" class="s"/><rect x="571" y="194.3" width="5" height="3.4" class="s"/><rect x="602" y="190.9" width="10" height="3.4" class="s"/><rect x="609" y="187.5" width="3" height="3.4" class="s"/><rect x="574" y="174.4" width="24" height="3.4" class="h"/><rect x="571" y="174.4" width="3" height="6.8" class="h"/><rect x="616" y="174.4" width="20" height="23.3" class="m"/><rect x="620" y="192.3" width="15" height="5.4" class="s"/><rect x="616" y="194.3" width="6" height="3.4" class="s"/><rect x="632" y="190.9" width="3" height="3.4" class="s"/><rect x="622" y="174.4" width="4" height="3.4" class="h"/><rect x="616" y="174.4" width="3" height="6.8" class="h"/><rect x="639" y="174.4" width="27" height="23.3" class="m"/><rect x="642" y="192.3" width="24" height="5.4" class="s"/><rect x="639" y="194.3" width="4" height="3.4" class="s"/><rect x="661" y="190.9" width="5" height="3.4" class="s"/><rect x="643" y="174.4" width="22" height="3.4" class="h"/><rect x="639" y="174.4" width="3" height="6.8" class="h"/><rect x="670" y="174.4" width="41" height="23.3" class="m"/><rect x="675" y="192.3" width="36" height="5.4" class="s"/><rect x="670" y="194.3" width="6" height="3.4" class="s"/><rect x="697" y="190.9" width="14" height="3.4" class="s"/><rect x="670" y="174.4" width="32" height="3.4" class="h"/><rect x="670" y="174.4" width="3" height="6.8" class="h"/><rect x="680" y="177.8" width="12" height="3.4" class="h"/><rect x="714" y="174.4" width="20" height="23.3" class="m"/><rect x="722" y="192.3" width="13" height="5.4" class="s"/><rect x="714" y="194.3" width="8" height="3.4" class="s"/><rect x="731" y="190.9" width="3" height="3.4" class="s"/><rect x="731" y="187.5" width="3" height="3.4" class="s"/><rect x="721" y="174.4" width="8" height="3.4" class="h"/><rect x="738" y="174.4" width="41" height="23.3" class="m"/><rect x="742" y="192.3" width="37" height="5.4" class="s"/><rect x="738" y="194.3" width="5" height="3.4" class="s"/><rect x="762" y="190.9" width="17" height="3.4" class="s"/><rect x="776" y="187.5" width="3" height="3.4" class="s"/><rect x="745" y="174.4" width="18" height="3.4" class="h"/><rect x="738" y="174.4" width="3" height="6.8" class="h"/><rect x="748" y="177.8" width="12" height="3.4" class="h"/><rect x="783" y="174.4" width="34" height="23.3" class="m"/><rect x="785" y="192.3" width="32" height="5.4" class="s"/><rect x="783" y="194.3" width="3" height="3.4" class="s"/><rect x="808" y="190.9" width="9" height="3.4" class="s"/><rect x="813" y="187.5" width="3" height="3.4" class="s"/><rect x="789" y="174.4" width="15" height="3.4" class="h"/><rect x="783" y="174.4" width="3" height="6.8" class="h"/><rect x="820" y="174.4" width="55" height="23.3" class="m"/><rect x="825" y="192.3" width="50" height="5.4" class="s"/><rect x="820" y="194.3" width="6" height="3.4" class="s"/><rect x="855" y="190.9" width="21" height="3.4" class="s"/><rect x="872" y="187.5" width="3" height="3.4" class="s"/><rect x="820" y="174.4" width="50" height="3.4" class="h"/><rect x="-6" y="201.8" width="27" height="23.3" class="m"/><rect x="4" y="219.7" width="17" height="5.4" class="s"/><rect x="-6" y="221.7" width="11" height="3.4" class="s"/><rect x="11" y="218.3" width="10" height="3.4" class="s"/><rect x="1" y="201.8" width="16" height="3.4" class="h"/><rect x="-6" y="201.8" width="3" height="6.8" class="h"/><rect x="4" y="205.2" width="8" height="3.4" class="h"/><rect x="25" y="201.8" width="55" height="23.3" class="m"/><rect x="26" y="219.7" width="54" height="5.4" class="s"/><rect x="25" y="221.7" width="2" height="3.4" class="s"/><rect x="59" y="218.3" width="21" height="3.4" class="s"/><rect x="31" y="201.8" width="30" height="3.4" class="h"/><rect x="43" y="205.2" width="16" height="3.4" class="h"/><rect x="83" y="201.8" width="41" height="23.3" class="m"/><rect x="86" y="219.7" width="38" height="5.4" class="s"/><rect x="83" y="221.7" width="4" height="3.4" class="s"/><rect x="116" y="218.3" width="8" height="3.4" class="s"/><rect x="121" y="214.9" width="3" height="3.4" class="s"/><rect x="90" y="201.8" width="29" height="3.4" class="h"/><rect x="83" y="201.8" width="3" height="6.8" class="h"/><rect x="128" y="201.8" width="34" height="23.3" class="m"/><rect x="136" y="219.7" width="26" height="5.4" class="s"/><rect x="128" y="221.7" width="9" height="3.4" class="s"/><rect x="155" y="218.3" width="7" height="3.4" class="s"/><rect x="128" y="201.8" width="20" height="3.4" class="h"/><rect x="139" y="205.2" width="10" height="3.4" class="h"/><rect x="165" y="201.8" width="20" height="23.3" class="m"/><rect x="169" y="219.7" width="16" height="5.4" class="s"/><rect x="165" y="221.7" width="5" height="3.4" class="s"/><rect x="181" y="218.3" width="5" height="3.4" class="s"/><rect x="165" y="201.8" width="12" height="3.4" class="h"/><rect x="165" y="201.8" width="3" height="6.8" class="h"/><rect x="172" y="205.2" width="6" height="3.4" class="h"/><rect x="189" y="201.8" width="48" height="23.3" class="m"/><rect x="207" y="219.7" width="30" height="5.4" class="s"/><rect x="189" y="221.7" width="19" height="3.4" class="s"/><rect x="230" y="218.3" width="7" height="3.4" class="s"/><rect x="234" y="214.9" width="3" height="3.4" class="s"/><rect x="196" y="201.8" width="39" height="3.4" class="h"/><rect x="202" y="205.2" width="14" height="3.4" class="h"/><rect x="241" y="201.8" width="27" height="23.3" class="m"/><rect x="245" y="219.7" width="23" height="5.4" class="s"/><rect x="241" y="221.7" width="5" height="3.4" class="s"/><rect x="263" y="218.3" width="5" height="3.4" class="s"/><rect x="244" y="201.8" width="12" height="3.4" class="h"/><rect x="241" y="201.8" width="3" height="6.8" class="h"/><rect x="271" y="201.8" width="41" height="23.3" class="m"/><rect x="275" y="219.7" width="37" height="5.4" class="s"/><rect x="271" y="221.7" width="5" height="3.4" class="s"/><rect x="303" y="218.3" width="10" height="3.4" class="s"/><rect x="309" y="214.9" width="3" height="3.4" class="s"/><rect x="271" y="201.8" width="39" height="3.4" class="h"/><rect x="271" y="201.8" width="3" height="6.8" class="h"/><rect x="316" y="201.8" width="41" height="23.3" class="m"/><rect x="329" y="219.7" width="28" height="5.4" class="s"/><rect x="316" y="221.7" width="14" height="3.4" class="s"/><rect x="340" y="218.3" width="17" height="3.4" class="s"/><rect x="353" y="214.9" width="3" height="3.4" class="s"/><rect x="316" y="201.8" width="31" height="3.4" class="h"/><rect x="360" y="201.8" width="48" height="23.3" class="m"/><rect x="363" y="219.7" width="46" height="5.4" class="s"/><rect x="360" y="221.7" width="3" height="3.4" class="s"/><rect x="391" y="218.3" width="17" height="3.4" class="s"/><rect x="405" y="214.9" width="3" height="3.4" class="s"/><rect x="367" y="201.8" width="29" height="3.4" class="h"/><rect x="360" y="201.8" width="3" height="6.8" class="h"/><rect x="412" y="201.8" width="41" height="23.3" class="m"/><rect x="416" y="219.7" width="37" height="5.4" class="s"/><rect x="412" y="221.7" width="5" height="3.4" class="s"/><rect x="440" y="218.3" width="13" height="3.4" class="s"/><rect x="450" y="214.9" width="3" height="3.4" class="s"/><rect x="415" y="201.8" width="27" height="3.4" class="h"/><rect x="412" y="201.8" width="3" height="6.8" class="h"/><rect x="426" y="205.2" width="12" height="3.4" class="h"/><rect x="457" y="201.8" width="27" height="23.3" class="m"/><rect x="457" y="219.7" width="27" height="5.4" class="s"/><rect x="457" y="221.7" width="1" height="3.4" class="s"/><rect x="474" y="218.3" width="9" height="3.4" class="s"/><rect x="480" y="214.9" width="3" height="3.4" class="s"/><rect x="457" y="201.8" width="26" height="3.4" class="h"/><rect x="457" y="201.8" width="3" height="6.8" class="h"/><rect x="464" y="205.2" width="8" height="3.4" class="h"/><rect x="487" y="201.8" width="48" height="23.3" class="m"/><rect x="498" y="219.7" width="37" height="5.4" class="s"/><rect x="487" y="221.7" width="12" height="3.4" class="s"/><rect x="517" y="218.3" width="19" height="3.4" class="s"/><rect x="494" y="201.8" width="23" height="3.4" class="h"/><rect x="487" y="201.8" width="3" height="6.8" class="h"/><rect x="499" y="205.2" width="14" height="3.4" class="h"/><rect x="539" y="201.8" width="55" height="23.3" class="m"/><rect x="551" y="219.7" width="42" height="5.4" class="s"/><rect x="539" y="221.7" width="14" height="3.4" class="s"/><rect x="585" y="218.3" width="9" height="3.4" class="s"/><rect x="590" y="214.9" width="3" height="3.4" class="s"/><rect x="539" y="201.8" width="51" height="3.4" class="h"/><rect x="539" y="201.8" width="3" height="6.8" class="h"/><rect x="597" y="201.8" width="41" height="23.3" class="m"/><rect x="603" y="219.7" width="35" height="5.4" class="s"/><rect x="597" y="221.7" width="7" height="3.4" class="s"/><rect x="629" y="218.3" width="9" height="3.4" class="s"/><rect x="635" y="214.9" width="3" height="3.4" class="s"/><rect x="604" y="201.8" width="22" height="3.4" class="h"/><rect x="609" y="205.2" width="12" height="3.4" class="h"/><rect x="642" y="201.8" width="41" height="23.3" class="m"/><rect x="655" y="219.7" width="28" height="5.4" class="s"/><rect x="642" y="221.7" width="14" height="3.4" class="s"/><rect x="674" y="218.3" width="9" height="3.4" class="s"/><rect x="645" y="201.8" width="23" height="3.4" class="h"/><rect x="642" y="201.8" width="3" height="6.8" class="h"/><rect x="687" y="201.8" width="27" height="23.3" class="m"/><rect x="697" y="219.7" width="17" height="5.4" class="s"/><rect x="687" y="221.7" width="11" height="3.4" class="s"/><rect x="705" y="218.3" width="8" height="3.4" class="s"/><rect x="690" y="201.8" width="13" height="3.4" class="h"/><rect x="695" y="205.2" width="8" height="3.4" class="h"/><rect x="717" y="201.8" width="34" height="23.3" class="m"/><rect x="722" y="219.7" width="30" height="5.4" class="s"/><rect x="717" y="221.7" width="5" height="3.4" class="s"/><rect x="743" y="218.3" width="8" height="3.4" class="s"/><rect x="721" y="201.8" width="26" height="3.4" class="h"/><rect x="717" y="201.8" width="3" height="6.8" class="h"/><rect x="755" y="201.8" width="41" height="23.3" class="m"/><rect x="760" y="219.7" width="36" height="5.4" class="s"/><rect x="755" y="221.7" width="6" height="3.4" class="s"/><rect x="778" y="218.3" width="18" height="3.4" class="s"/><rect x="762" y="201.8" width="15" height="3.4" class="h"/><rect x="755" y="201.8" width="3" height="6.8" class="h"/><rect x="799" y="201.8" width="34" height="23.3" class="m"/><rect x="800" y="219.7" width="33" height="5.4" class="s"/><rect x="799" y="221.7" width="2" height="3.4" class="s"/><rect x="819" y="218.3" width="14" height="3.4" class="s"/><rect x="830" y="214.9" width="3" height="3.4" class="s"/><rect x="799" y="201.8" width="20" height="3.4" class="h"/><rect x="799" y="201.8" width="3" height="6.8" class="h"/><rect x="809" y="205.2" width="10" height="3.4" class="h"/><rect x="837" y="201.8" width="48" height="23.3" class="m"/><rect x="837" y="219.7" width="48" height="5.4" class="s"/><rect x="837" y="221.7" width="1" height="3.4" class="s"/><rect x="869" y="218.3" width="16" height="3.4" class="s"/><rect x="882" y="214.9" width="3" height="3.4" class="s"/><rect x="837" y="201.8" width="31" height="3.4" class="h"/><rect x="837" y="201.8" width="3" height="6.8" class="h"/><rect x="-14" y="229.2" width="20" height="23.3" class="m"/><rect x="-7" y="247.1" width="13" height="5.4" class="s"/><rect x="-14" y="249.1" width="8" height="3.4" class="s"/><rect x="-1" y="245.7" width="7" height="3.4" class="s"/><rect x="-14" y="229.2" width="15" height="3.4" class="h"/><rect x="-14" y="229.2" width="3" height="6.8" class="h"/><rect x="10" y="229.2" width="34" height="23.3" class="m"/><rect x="16" y="247.1" width="27" height="5.4" class="s"/><rect x="10" y="249.1" width="8" height="3.4" class="s"/><rect x="36" y="245.7" width="7" height="3.4" class="s"/><rect x="13" y="229.2" width="15" height="3.4" class="h"/><rect x="10" y="229.2" width="3" height="6.8" class="h"/><rect x="47" y="229.2" width="34" height="23.3" class="m"/><rect x="58" y="247.1" width="23" height="5.4" class="s"/><rect x="47" y="249.1" width="12" height="3.4" class="s"/><rect x="71" y="245.7" width="10" height="3.4" class="s"/><rect x="78" y="242.3" width="3" height="3.4" class="s"/><rect x="54" y="229.2" width="20" height="3.4" class="h"/><rect x="47" y="229.2" width="3" height="6.8" class="h"/><rect x="85" y="229.2" width="34" height="23.3" class="m"/><rect x="93" y="247.1" width="26" height="5.4" class="s"/><rect x="85" y="249.1" width="9" height="3.4" class="s"/><rect x="107" y="245.7" width="12" height="3.4" class="s"/><rect x="115" y="242.3" width="3" height="3.4" class="s"/><rect x="92" y="229.2" width="20" height="3.4" class="h"/><rect x="85" y="229.2" width="3" height="6.8" class="h"/><rect x="122" y="229.2" width="27" height="23.3" class="m"/><rect x="124" y="247.1" width="26" height="5.4" class="s"/><rect x="122" y="249.1" width="2" height="3.4" class="s"/><rect x="143" y="245.7" width="6" height="3.4" class="s"/><rect x="126" y="229.2" width="18" height="3.4" class="h"/><rect x="122" y="229.2" width="3" height="6.8" class="h"/><rect x="153" y="229.2" width="34" height="23.3" class="m"/><rect x="158" y="247.1" width="29" height="5.4" class="s"/><rect x="153" y="249.1" width="6" height="3.4" class="s"/><rect x="177" y="245.7" width="10" height="3.4" class="s"/><rect x="184" y="242.3" width="3" height="3.4" class="s"/><rect x="153" y="229.2" width="25" height="3.4" class="h"/><rect x="153" y="229.2" width="3" height="6.8" class="h"/><rect x="160" y="232.6" width="10" height="3.4" class="h"/><rect x="191" y="229.2" width="20" height="23.3" class="m"/><rect x="198" y="247.1" width="13" height="5.4" class="s"/><rect x="191" y="249.1" width="8" height="3.4" class="s"/><rect x="203" y="245.7" width="8" height="3.4" class="s"/><rect x="207" y="242.3" width="3" height="3.4" class="s"/><rect x="194" y="229.2" width="13" height="3.4" class="h"/><rect x="191" y="229.2" width="3" height="6.8" class="h"/><rect x="214" y="229.2" width="48" height="23.3" class="m"/><rect x="215" y="247.1" width="47" height="5.4" class="s"/><rect x="214" y="249.1" width="2" height="3.4" class="s"/><rect x="255" y="245.7" width="8" height="3.4" class="s"/><rect x="218" y="229.2" width="23" height="3.4" class="h"/><rect x="214" y="229.2" width="3" height="6.8" class="h"/><rect x="266" y="229.2" width="34" height="23.3" class="m"/><rect x="277" y="247.1" width="23" height="5.4" class="s"/><rect x="266" y="249.1" width="12" height="3.4" class="s"/><rect x="293" y="245.7" width="7" height="3.4" class="s"/><rect x="269" y="229.2" width="15" height="3.4" class="h"/><rect x="303" y="229.2" width="41" height="23.3" class="m"/><rect x="312" y="247.1" width="33" height="5.4" class="s"/><rect x="303" y="249.1" width="9" height="3.4" class="s"/><rect x="330" y="245.7" width="14" height="3.4" class="s"/><rect x="341" y="242.3" width="3" height="3.4" class="s"/><rect x="303" y="229.2" width="36" height="3.4" class="h"/><rect x="303" y="229.2" width="3" height="6.8" class="h"/><rect x="317" y="232.6" width="12" height="3.4" class="h"/><rect x="348" y="229.2" width="27" height="23.3" class="m"/><rect x="349" y="247.1" width="26" height="5.4" class="s"/><rect x="348" y="249.1" width="2" height="3.4" class="s"/><rect x="366" y="245.7" width="9" height="3.4" class="s"/><rect x="348" y="229.2" width="14" height="3.4" class="h"/><rect x="348" y="229.2" width="3" height="6.8" class="h"/><rect x="358" y="232.6" width="8" height="3.4" class="h"/><rect x="379" y="229.2" width="27" height="23.3" class="m"/><rect x="387" y="247.1" width="18" height="5.4" class="s"/><rect x="379" y="249.1" width="10" height="3.4" class="s"/><rect x="395" y="245.7" width="11" height="3.4" class="s"/><rect x="402" y="242.3" width="3" height="3.4" class="s"/><rect x="379" y="229.2" width="18" height="3.4" class="h"/><rect x="409" y="229.2" width="34" height="23.3" class="m"/><rect x="421" y="247.1" width="23" height="5.4" class="s"/><rect x="409" y="249.1" width="12" height="3.4" class="s"/><rect x="429" y="245.7" width="14" height="3.4" class="s"/><rect x="440" y="242.3" width="3" height="3.4" class="s"/><rect x="413" y="229.2" width="14" height="3.4" class="h"/><rect x="447" y="229.2" width="55" height="23.3" class="m"/><rect x="448" y="247.1" width="53" height="5.4" class="s"/><rect x="447" y="249.1" width="3" height="3.4" class="s"/><rect x="493" y="245.7" width="8" height="3.4" class="s"/><rect x="498" y="242.3" width="3" height="3.4" class="s"/><rect x="454" y="229.2" width="29" height="3.4" class="h"/><rect x="505" y="229.2" width="48" height="23.3" class="m"/><rect x="513" y="247.1" width="41" height="5.4" class="s"/><rect x="505" y="249.1" width="8" height="3.4" class="s"/><rect x="544" y="245.7" width="10" height="3.4" class="s"/><rect x="512" y="229.2" width="38" height="3.4" class="h"/><rect x="517" y="232.6" width="14" height="3.4" class="h"/><rect x="557" y="229.2" width="34" height="23.3" class="m"/><rect x="559" y="247.1" width="32" height="5.4" class="s"/><rect x="557" y="249.1" width="3" height="3.4" class="s"/><rect x="582" y="245.7" width="9" height="3.4" class="s"/><rect x="588" y="242.3" width="3" height="3.4" class="s"/><rect x="560" y="229.2" width="15" height="3.4" class="h"/><rect x="595" y="229.2" width="41" height="23.3" class="m"/><rect x="600" y="247.1" width="36" height="5.4" class="s"/><rect x="595" y="249.1" width="6" height="3.4" class="s"/><rect x="617" y="245.7" width="18" height="3.4" class="s"/><rect x="632" y="242.3" width="3" height="3.4" class="s"/><rect x="595" y="229.2" width="34" height="3.4" class="h"/><rect x="595" y="229.2" width="3" height="6.8" class="h"/><rect x="606" y="232.6" width="12" height="3.4" class="h"/><rect x="639" y="229.2" width="34" height="23.3" class="m"/><rect x="640" y="247.1" width="33" height="5.4" class="s"/><rect x="639" y="249.1" width="2" height="3.4" class="s"/><rect x="661" y="245.7" width="13" height="3.4" class="s"/><rect x="670" y="242.3" width="3" height="3.4" class="s"/><rect x="646" y="229.2" width="16" height="3.4" class="h"/><rect x="639" y="229.2" width="3" height="6.8" class="h"/><rect x="677" y="229.2" width="27" height="23.3" class="m"/><rect x="681" y="247.1" width="23" height="5.4" class="s"/><rect x="677" y="249.1" width="5" height="3.4" class="s"/><rect x="697" y="245.7" width="6" height="3.4" class="s"/><rect x="700" y="242.3" width="3" height="3.4" class="s"/><rect x="684" y="229.2" width="8" height="3.4" class="h"/><rect x="677" y="229.2" width="3" height="6.8" class="h"/><rect x="707" y="229.2" width="27" height="23.3" class="m"/><rect x="715" y="247.1" width="20" height="5.4" class="s"/><rect x="707" y="249.1" width="8" height="3.4" class="s"/><rect x="726" y="245.7" width="8" height="3.4" class="s"/><rect x="711" y="229.2" width="13" height="3.4" class="h"/><rect x="707" y="229.2" width="3" height="6.8" class="h"/><rect x="716" y="232.6" width="8" height="3.4" class="h"/><rect x="738" y="229.2" width="41" height="23.3" class="m"/><rect x="745" y="247.1" width="34" height="5.4" class="s"/><rect x="738" y="249.1" width="8" height="3.4" class="s"/><rect x="764" y="245.7" width="15" height="3.4" class="s"/><rect x="776" y="242.3" width="3" height="3.4" class="s"/><rect x="741" y="229.2" width="23" height="3.4" class="h"/><rect x="783" y="229.2" width="34" height="23.3" class="m"/><rect x="783" y="247.1" width="34" height="5.4" class="s"/><rect x="783" y="249.1" width="1" height="3.4" class="s"/><rect x="805" y="245.7" width="11" height="3.4" class="s"/><rect x="786" y="229.2" width="20" height="3.4" class="h"/><rect x="783" y="229.2" width="3" height="6.8" class="h"/><rect x="795" y="232.6" width="10" height="3.4" class="h"/><rect x="820" y="229.2" width="27" height="23.3" class="m"/><rect x="826" y="247.1" width="21" height="5.4" class="s"/><rect x="820" y="249.1" width="7" height="3.4" class="s"/><rect x="836" y="245.7" width="11" height="3.4" class="s"/><rect x="820" y="229.2" width="23" height="3.4" class="h"/><rect x="820" y="229.2" width="3" height="6.8" class="h"/><rect x="829" y="232.6" width="8" height="3.4" class="h"/><rect x="851" y="229.2" width="41" height="23.3" class="m"/><rect x="867" y="247.1" width="25" height="5.4" class="s"/><rect x="851" y="249.1" width="17" height="3.4" class="s"/><rect x="883" y="245.7" width="8" height="3.4" class="s"/><rect x="858" y="229.2" width="25" height="3.4" class="h"/><rect x="851" y="229.2" width="3" height="6.8" class="h"/><rect x="-30" y="256.6" width="41" height="23.3" class="m"/><rect x="-22" y="274.5" width="33" height="5.4" class="s"/><rect x="-30" y="276.5" width="9" height="3.4" class="s"/><rect x="1" y="273.1" width="10" height="3.4" class="s"/><rect x="8" y="269.7" width="3" height="3.4" class="s"/><rect x="-30" y="256.6" width="39" height="3.4" class="h"/><rect x="15" y="256.6" width="34" height="23.3" class="m"/><rect x="23" y="274.5" width="25" height="5.4" class="s"/><rect x="15" y="276.5" width="10" height="3.4" class="s"/><rect x="40" y="273.1" width="8" height="3.4" class="s"/><rect x="15" y="256.6" width="32" height="3.4" class="h"/><rect x="52" y="256.6" width="34" height="23.3" class="m"/><rect x="59" y="274.5" width="27" height="5.4" class="s"/><rect x="52" y="276.5" width="8" height="3.4" class="s"/><rect x="77" y="273.1" width="9" height="3.4" class="s"/><rect x="83" y="269.7" width="3" height="3.4" class="s"/><rect x="52" y="256.6" width="25" height="3.4" class="h"/><rect x="52" y="256.6" width="3" height="6.8" class="h"/><rect x="90" y="256.6" width="20" height="23.3" class="m"/><rect x="91" y="274.5" width="19" height="5.4" class="s"/><rect x="90" y="276.5" width="2" height="3.4" class="s"/><rect x="105" y="273.1" width="5" height="3.4" class="s"/><rect x="97" y="256.6" width="11" height="3.4" class="h"/><rect x="113" y="256.6" width="55" height="23.3" class="m"/><rect x="130" y="274.5" width="38" height="5.4" class="s"/><rect x="113" y="276.5" width="18" height="3.4" class="s"/><rect x="146" y="273.1" width="23" height="3.4" class="s"/><rect x="165" y="269.7" width="3" height="3.4" class="s"/><rect x="113" y="256.6" width="37" height="3.4" class="h"/><rect x="113" y="256.6" width="3" height="6.8" class="h"/><rect x="172" y="256.6" width="20" height="23.3" class="m"/><rect x="173" y="274.5" width="19" height="5.4" class="s"/><rect x="172" y="276.5" width="2" height="3.4" class="s"/><rect x="185" y="273.1" width="7" height="3.4" class="s"/><rect x="172" y="256.6" width="17" height="3.4" class="h"/><rect x="172" y="256.6" width="3" height="6.8" class="h"/><rect x="196" y="256.6" width="27" height="23.3" class="m"/><rect x="196" y="274.5" width="26" height="5.4" class="s"/><rect x="196" y="276.5" width="2" height="3.4" class="s"/><rect x="212" y="273.1" width="10" height="3.4" class="s"/><rect x="202" y="256.6" width="13" height="3.4" class="h"/><rect x="196" y="256.6" width="3" height="6.8" class="h"/><rect x="226" y="256.6" width="34" height="23.3" class="m"/><rect x="234" y="274.5" width="26" height="5.4" class="s"/><rect x="226" y="276.5" width="9" height="3.4" class="s"/><rect x="250" y="273.1" width="11" height="3.4" class="s"/><rect x="233" y="256.6" width="17" height="3.4" class="h"/><rect x="226" y="256.6" width="3" height="6.8" class="h"/><rect x="264" y="256.6" width="27" height="23.3" class="m"/><rect x="273" y="274.5" width="18" height="5.4" class="s"/><rect x="264" y="276.5" width="10" height="3.4" class="s"/><rect x="283" y="273.1" width="8" height="3.4" class="s"/><rect x="287" y="269.7" width="3" height="3.4" class="s"/><rect x="271" y="256.6" width="13" height="3.4" class="h"/><rect x="264" y="256.6" width="3" height="6.8" class="h"/><rect x="294" y="256.6" width="27" height="23.3" class="m"/><rect x="299" y="274.5" width="23" height="5.4" class="s"/><rect x="294" y="276.5" width="5" height="3.4" class="s"/><rect x="309" y="273.1" width="12" height="3.4" class="s"/><rect x="318" y="269.7" width="3" height="3.4" class="s"/><rect x="294" y="256.6" width="22" height="3.4" class="h"/><rect x="303" y="260.0" width="8" height="3.4" class="h"/><rect x="325" y="256.6" width="20" height="23.3" class="m"/><rect x="328" y="274.5" width="17" height="5.4" class="s"/><rect x="325" y="276.5" width="4" height="3.4" class="s"/><rect x="339" y="273.1" width="6" height="3.4" class="s"/><rect x="332" y="256.6" width="9" height="3.4" class="h"/><rect x="331" y="260.0" width="6" height="3.4" class="h"/><rect x="349" y="256.6" width="27" height="23.3" class="m"/><rect x="351" y="274.5" width="25" height="5.4" class="s"/><rect x="349" y="276.5" width="3" height="3.4" class="s"/><rect x="368" y="273.1" width="8" height="3.4" class="s"/><rect x="352" y="256.6" width="14" height="3.4" class="h"/><rect x="349" y="256.6" width="3" height="6.8" class="h"/><rect x="379" y="256.6" width="34" height="23.3" class="m"/><rect x="387" y="274.5" width="26" height="5.4" class="s"/><rect x="379" y="276.5" width="9" height="3.4" class="s"/><rect x="403" y="273.1" width="10" height="3.4" class="s"/><rect x="383" y="256.6" width="23" height="3.4" class="h"/><rect x="379" y="256.6" width="3" height="6.8" class="h"/><rect x="417" y="256.6" width="34" height="23.3" class="m"/><rect x="422" y="274.5" width="29" height="5.4" class="s"/><rect x="417" y="276.5" width="6" height="3.4" class="s"/><rect x="440" y="273.1" width="11" height="3.4" class="s"/><rect x="447" y="269.7" width="3" height="3.4" class="s"/><rect x="420" y="256.6" width="24" height="3.4" class="h"/><rect x="417" y="256.6" width="3" height="6.8" class="h"/><rect x="426" y="260.0" width="10" height="3.4" class="h"/><rect x="454" y="256.6" width="20" height="23.3" class="m"/><rect x="456" y="274.5" width="19" height="5.4" class="s"/><rect x="454" y="276.5" width="2" height="3.4" class="s"/><rect x="468" y="273.1" width="7" height="3.4" class="s"/><rect x="471" y="269.7" width="3" height="3.4" class="s"/><rect x="454" y="256.6" width="16" height="3.4" class="h"/><rect x="460" y="260.0" width="6" height="3.4" class="h"/><rect x="478" y="256.6" width="34" height="23.3" class="m"/><rect x="485" y="274.5" width="27" height="5.4" class="s"/><rect x="478" y="276.5" width="8" height="3.4" class="s"/><rect x="502" y="273.1" width="10" height="3.4" class="s"/><rect x="481" y="256.6" width="20" height="3.4" class="h"/><rect x="489" y="260.0" width="10" height="3.4" class="h"/><rect x="516" y="256.6" width="34" height="23.3" class="m"/><rect x="521" y="274.5" width="29" height="5.4" class="s"/><rect x="516" y="276.5" width="6" height="3.4" class="s"/><rect x="540" y="273.1" width="9" height="3.4" class="s"/><rect x="546" y="269.7" width="3" height="3.4" class="s"/><rect x="519" y="256.6" width="17" height="3.4" class="h"/><rect x="524" y="260.0" width="10" height="3.4" class="h"/><rect x="553" y="256.6" width="27" height="23.3" class="m"/><rect x="559" y="274.5" width="21" height="5.4" class="s"/><rect x="553" y="276.5" width="7" height="3.4" class="s"/><rect x="574" y="273.1" width="6" height="3.4" class="s"/><rect x="577" y="269.7" width="3" height="3.4" class="s"/><rect x="553" y="256.6" width="16" height="3.4" class="h"/><rect x="553" y="256.6" width="3" height="6.8" class="h"/><rect x="584" y="256.6" width="48" height="23.3" class="m"/><rect x="596" y="274.5" width="36" height="5.4" class="s"/><rect x="584" y="276.5" width="13" height="3.4" class="s"/><rect x="616" y="273.1" width="16" height="3.4" class="s"/><rect x="628" y="269.7" width="3" height="3.4" class="s"/><rect x="591" y="256.6" width="32" height="3.4" class="h"/><rect x="584" y="256.6" width="3" height="6.8" class="h"/><rect x="635" y="256.6" width="41" height="23.3" class="m"/><rect x="641" y="274.5" width="36" height="5.4" class="s"/><rect x="635" y="276.5" width="6" height="3.4" class="s"/><rect x="662" y="273.1" width="15" height="3.4" class="s"/><rect x="639" y="256.6" width="29" height="3.4" class="h"/><rect x="635" y="256.6" width="3" height="6.8" class="h"/><rect x="680" y="256.6" width="20" height="23.3" class="m"/><rect x="683" y="274.5" width="17" height="5.4" class="s"/><rect x="680" y="276.5" width="4" height="3.4" class="s"/><rect x="692" y="273.1" width="8" height="3.4" class="s"/><rect x="697" y="269.7" width="3" height="3.4" class="s"/><rect x="683" y="256.6" width="12" height="3.4" class="h"/><rect x="680" y="256.6" width="3" height="6.8" class="h"/><rect x="704" y="256.6" width="34" height="23.3" class="m"/><rect x="711" y="274.5" width="26" height="5.4" class="s"/><rect x="704" y="276.5" width="9" height="3.4" class="s"/><rect x="722" y="273.1" width="15" height="3.4" class="s"/><rect x="707" y="256.6" width="19" height="3.4" class="h"/><rect x="741" y="256.6" width="27" height="23.3" class="m"/><rect x="743" y="274.5" width="25" height="5.4" class="s"/><rect x="741" y="276.5" width="3" height="3.4" class="s"/><rect x="757" y="273.1" width="11" height="3.4" class="s"/><rect x="741" y="256.6" width="18" height="3.4" class="h"/><rect x="741" y="256.6" width="3" height="6.8" class="h"/><rect x="772" y="256.6" width="27" height="23.3" class="m"/><rect x="777" y="274.5" width="22" height="5.4" class="s"/><rect x="772" y="276.5" width="6" height="3.4" class="s"/><rect x="794" y="273.1" width="5" height="3.4" class="s"/><rect x="772" y="256.6" width="25" height="3.4" class="h"/><rect x="772" y="256.6" width="3" height="6.8" class="h"/><rect x="802" y="256.6" width="27" height="23.3" class="m"/><rect x="810" y="274.5" width="19" height="5.4" class="s"/><rect x="802" y="276.5" width="9" height="3.4" class="s"/><rect x="820" y="273.1" width="9" height="3.4" class="s"/><rect x="809" y="256.6" width="14" height="3.4" class="h"/><rect x="810" y="260.0" width="8" height="3.4" class="h"/><rect x="833" y="256.6" width="34" height="23.3" class="m"/><rect x="844" y="274.5" width="23" height="5.4" class="s"/><rect x="833" y="276.5" width="12" height="3.4" class="s"/><rect x="853" y="273.1" width="14" height="3.4" class="s"/><rect x="836" y="256.6" width="20" height="3.4" class="h"/><rect x="871" y="256.6" width="34" height="23.3" class="m"/><rect x="880" y="274.5" width="25" height="5.4" class="s"/><rect x="871" y="276.5" width="10" height="3.4" class="s"/><rect x="899" y="273.1" width="6" height="3.4" class="s"/><rect x="901" y="269.7" width="3" height="3.4" class="s"/><rect x="877" y="256.6" width="22" height="3.4" class="h"/><rect x="871" y="256.6" width="3" height="6.8" class="h"/><rect x="-14" y="284.0" width="41" height="23.3" class="m"/><rect x="-11" y="301.9" width="38" height="5.4" class="s"/><rect x="-14" y="303.9" width="4" height="3.4" class="s"/><rect x="13" y="300.5" width="14" height="3.4" class="s"/><rect x="24" y="297.1" width="3" height="3.4" class="s"/><rect x="-11" y="284.0" width="24" height="3.4" class="h"/><rect x="31" y="284.0" width="55" height="23.3" class="m"/><rect x="43" y="301.9" width="42" height="5.4" class="s"/><rect x="31" y="303.9" width="14" height="3.4" class="s"/><rect x="75" y="300.5" width="11" height="3.4" class="s"/><rect x="82" y="297.1" width="3" height="3.4" class="s"/><rect x="37" y="284.0" width="24" height="3.4" class="h"/><rect x="89" y="284.0" width="27" height="23.3" class="m"/><rect x="97" y="301.9" width="19" height="5.4" class="s"/><rect x="89" y="303.9" width="9" height="3.4" class="s"/><rect x="106" y="300.5" width="10" height="3.4" class="s"/><rect x="113" y="297.1" width="3" height="3.4" class="s"/><rect x="96" y="284.0" width="12" height="3.4" class="h"/><rect x="89" y="284.0" width="3" height="6.8" class="h"/><rect x="120" y="284.0" width="41" height="23.3" class="m"/><rect x="126" y="301.9" width="35" height="5.4" class="s"/><rect x="120" y="303.9" width="7" height="3.4" class="s"/><rect x="151" y="300.5" width="10" height="3.4" class="s"/><rect x="157" y="297.1" width="3" height="3.4" class="s"/><rect x="127" y="284.0" width="15" height="3.4" class="h"/><rect x="120" y="284.0" width="3" height="6.8" class="h"/><rect x="164" y="284.0" width="55" height="23.3" class="m"/><rect x="173" y="301.9" width="46" height="5.4" class="s"/><rect x="164" y="303.9" width="10" height="3.4" class="s"/><rect x="197" y="300.5" width="23" height="3.4" class="s"/><rect x="216" y="297.1" width="3" height="3.4" class="s"/><rect x="171" y="284.0" width="23" height="3.4" class="h"/><rect x="164" y="284.0" width="3" height="6.8" class="h"/><rect x="223" y="284.0" width="20" height="23.3" class="m"/><rect x="231" y="301.9" width="12" height="5.4" class="s"/><rect x="223" y="303.9" width="9" height="3.4" class="s"/><rect x="236" y="300.5" width="7" height="3.4" class="s"/><rect x="240" y="297.1" width="3" height="3.4" class="s"/><rect x="226" y="284.0" width="10" height="3.4" class="h"/><rect x="223" y="284.0" width="3" height="6.8" class="h"/><rect x="247" y="284.0" width="41" height="23.3" class="m"/><rect x="260" y="301.9" width="28" height="5.4" class="s"/><rect x="247" y="303.9" width="14" height="3.4" class="s"/><rect x="270" y="300.5" width="17" height="3.4" class="s"/><rect x="247" y="284.0" width="39" height="3.4" class="h"/><rect x="291" y="284.0" width="41" height="23.3" class="m"/><rect x="293" y="301.9" width="39" height="5.4" class="s"/><rect x="291" y="303.9" width="3" height="3.4" class="s"/><rect x="323" y="300.5" width="9" height="3.4" class="s"/><rect x="295" y="284.0" width="30" height="3.4" class="h"/><rect x="291" y="284.0" width="3" height="6.8" class="h"/><rect x="336" y="284.0" width="41" height="23.3" class="m"/><rect x="346" y="301.9" width="31" height="5.4" class="s"/><rect x="336" y="303.9" width="11" height="3.4" class="s"/><rect x="369" y="300.5" width="8" height="3.4" class="s"/><rect x="336" y="284.0" width="25" height="3.4" class="h"/><rect x="336" y="284.0" width="3" height="6.8" class="h"/><rect x="380" y="284.0" width="41" height="23.3" class="m"/><rect x="391" y="301.9" width="30" height="5.4" class="s"/><rect x="380" y="303.9" width="12" height="3.4" class="s"/><rect x="406" y="300.5" width="15" height="3.4" class="s"/><rect x="384" y="284.0" width="26" height="3.4" class="h"/><rect x="380" y="284.0" width="3" height="6.8" class="h"/><rect x="391" y="287.4" width="12" height="3.4" class="h"/><rect x="425" y="284.0" width="34" height="23.3" class="m"/><rect x="437" y="301.9" width="22" height="5.4" class="s"/><rect x="425" y="303.9" width="13" height="3.4" class="s"/><rect x="445" y="300.5" width="14" height="3.4" class="s"/><rect x="425" y="284.0" width="26" height="3.4" class="h"/><rect x="425" y="284.0" width="3" height="6.8" class="h"/><rect x="463" y="284.0" width="41" height="23.3" class="m"/><rect x="468" y="301.9" width="36" height="5.4" class="s"/><rect x="463" y="303.9" width="6" height="3.4" class="s"/><rect x="490" y="300.5" width="13" height="3.4" class="s"/><rect x="469" y="284.0" width="28" height="3.4" class="h"/><rect x="463" y="284.0" width="3" height="6.8" class="h"/><rect x="507" y="284.0" width="41" height="23.3" class="m"/><rect x="513" y="301.9" width="35" height="5.4" class="s"/><rect x="507" y="303.9" width="7" height="3.4" class="s"/><rect x="532" y="300.5" width="16" height="3.4" class="s"/><rect x="511" y="284.0" width="28" height="3.4" class="h"/><rect x="507" y="284.0" width="3" height="6.8" class="h"/><rect x="523" y="287.4" width="12" height="3.4" class="h"/><rect x="552" y="284.0" width="27" height="23.3" class="m"/><rect x="558" y="301.9" width="21" height="5.4" class="s"/><rect x="552" y="303.9" width="7" height="3.4" class="s"/><rect x="574" y="300.5" width="5" height="3.4" class="s"/><rect x="555" y="284.0" width="21" height="3.4" class="h"/><rect x="552" y="284.0" width="3" height="6.8" class="h"/><rect x="582" y="284.0" width="27" height="23.3" class="m"/><rect x="585" y="301.9" width="25" height="5.4" class="s"/><rect x="582" y="303.9" width="3" height="3.4" class="s"/><rect x="600" y="300.5" width="9" height="3.4" class="s"/><rect x="606" y="297.1" width="3" height="3.4" class="s"/><rect x="582" y="284.0" width="14" height="3.4" class="h"/><rect x="588" y="287.4" width="8" height="3.4" class="h"/><rect x="613" y="284.0" width="34" height="23.3" class="m"/><rect x="626" y="301.9" width="21" height="5.4" class="s"/><rect x="613" y="303.9" width="14" height="3.4" class="s"/><rect x="639" y="300.5" width="8" height="3.4" class="s"/><rect x="620" y="284.0" width="18" height="3.4" class="h"/><rect x="613" y="284.0" width="3" height="6.8" class="h"/><rect x="651" y="284.0" width="27" height="23.3" class="m"/><rect x="656" y="301.9" width="21" height="5.4" class="s"/><rect x="651" y="303.9" width="7" height="3.4" class="s"/><rect x="668" y="300.5" width="9" height="3.4" class="s"/><rect x="674" y="297.1" width="3" height="3.4" class="s"/><rect x="651" y="284.0" width="24" height="3.4" class="h"/><rect x="651" y="284.0" width="3" height="6.8" class="h"/><rect x="657" y="287.4" width="8" height="3.4" class="h"/><rect x="681" y="284.0" width="55" height="23.3" class="m"/><rect x="682" y="301.9" width="54" height="5.4" class="s"/><rect x="681" y="303.9" width="2" height="3.4" class="s"/><rect x="727" y="300.5" width="9" height="3.4" class="s"/><rect x="681" y="284.0" width="31" height="3.4" class="h"/><rect x="681" y="284.0" width="3" height="6.8" class="h"/><rect x="700" y="287.4" width="16" height="3.4" class="h"/><rect x="740" y="284.0" width="34" height="23.3" class="m"/><rect x="753" y="301.9" width="21" height="5.4" class="s"/><rect x="740" y="303.9" width="14" height="3.4" class="s"/><rect x="768" y="300.5" width="6" height="3.4" class="s"/><rect x="743" y="284.0" width="28" height="3.4" class="h"/><rect x="740" y="284.0" width="3" height="6.8" class="h"/><rect x="777" y="284.0" width="41" height="23.3" class="m"/><rect x="793" y="301.9" width="26" height="5.4" class="s"/><rect x="777" y="303.9" width="16" height="3.4" class="s"/><rect x="801" y="300.5" width="17" height="3.4" class="s"/><rect x="777" y="284.0" width="23" height="3.4" class="h"/><rect x="777" y="284.0" width="3" height="6.8" class="h"/><rect x="794" y="287.4" width="12" height="3.4" class="h"/><rect x="822" y="284.0" width="48" height="23.3" class="m"/><rect x="823" y="301.9" width="47" height="5.4" class="s"/><rect x="822" y="303.9" width="2" height="3.4" class="s"/><rect x="860" y="300.5" width="10" height="3.4" class="s"/><rect x="829" y="284.0" width="35" height="3.4" class="h"/><rect x="874" y="284.0" width="27" height="23.3" class="m"/><rect x="874" y="301.9" width="27" height="5.4" class="s"/><rect x="874" y="303.9" width="1" height="3.4" class="s"/><rect x="889" y="300.5" width="12" height="3.4" class="s"/><rect x="877" y="284.0" width="20" height="3.4" class="h"/><rect x="874" y="284.0" width="3" height="6.8" class="h"/><rect x="881" y="287.4" width="8" height="3.4" class="h"/><rect x="-6" y="311.4" width="34" height="23.3" class="m"/><rect x="-2" y="329.3" width="30" height="5.4" class="s"/><rect x="-6" y="331.3" width="5" height="3.4" class="s"/><rect x="19" y="327.9" width="9" height="3.4" class="s"/><rect x="-3" y="311.4" width="22" height="3.4" class="h"/><rect x="-6" y="311.4" width="3" height="6.8" class="h"/><rect x="32" y="311.4" width="48" height="23.3" class="m"/><rect x="35" y="329.3" width="45" height="5.4" class="s"/><rect x="32" y="331.3" width="4" height="3.4" class="s"/><rect x="60" y="327.9" width="19" height="3.4" class="s"/><rect x="76" y="324.5" width="3" height="3.4" class="s"/><rect x="35" y="311.4" width="25" height="3.4" class="h"/><rect x="48" y="314.8" width="14" height="3.4" class="h"/><rect x="83" y="311.4" width="41" height="23.3" class="m"/><rect x="93" y="329.3" width="31" height="5.4" class="s"/><rect x="83" y="331.3" width="11" height="3.4" class="s"/><rect x="113" y="327.9" width="11" height="3.4" class="s"/><rect x="83" y="311.4" width="24" height="3.4" class="h"/><rect x="83" y="311.4" width="3" height="6.8" class="h"/><rect x="94" y="314.8" width="12" height="3.4" class="h"/><rect x="128" y="311.4" width="34" height="23.3" class="m"/><rect x="137" y="329.3" width="25" height="5.4" class="s"/><rect x="128" y="331.3" width="10" height="3.4" class="s"/><rect x="155" y="327.9" width="7" height="3.4" class="s"/><rect x="128" y="311.4" width="27" height="3.4" class="h"/><rect x="128" y="311.4" width="3" height="6.8" class="h"/><rect x="165" y="311.4" width="20" height="23.3" class="m"/><rect x="169" y="329.3" width="17" height="5.4" class="s"/><rect x="165" y="331.3" width="4" height="3.4" class="s"/><rect x="182" y="327.9" width="3" height="3.4" class="s"/><rect x="182" y="324.5" width="3" height="3.4" class="s"/><rect x="169" y="311.4" width="7" height="3.4" class="h"/><rect x="165" y="311.4" width="3" height="6.8" class="h"/><rect x="189" y="311.4" width="34" height="23.3" class="m"/><rect x="195" y="329.3" width="28" height="5.4" class="s"/><rect x="189" y="331.3" width="7" height="3.4" class="s"/><rect x="215" y="327.9" width="8" height="3.4" class="s"/><rect x="220" y="324.5" width="3" height="3.4" class="s"/><rect x="189" y="311.4" width="23" height="3.4" class="h"/><rect x="189" y="311.4" width="3" height="6.8" class="h"/><rect x="227" y="311.4" width="27" height="23.3" class="m"/><rect x="232" y="329.3" width="22" height="5.4" class="s"/><rect x="227" y="331.3" width="6" height="3.4" class="s"/><rect x="248" y="327.9" width="6" height="3.4" class="s"/><rect x="250" y="324.5" width="3" height="3.4" class="s"/><rect x="230" y="311.4" width="10" height="3.4" class="h"/><rect x="257" y="311.4" width="34" height="23.3" class="m"/><rect x="259" y="329.3" width="32" height="5.4" class="s"/><rect x="257" y="331.3" width="3" height="3.4" class="s"/><rect x="278" y="327.9" width="13" height="3.4" class="s"/><rect x="257" y="311.4" width="31" height="3.4" class="h"/><rect x="257" y="311.4" width="3" height="6.8" class="h"/><rect x="295" y="311.4" width="34" height="23.3" class="m"/><rect x="306" y="329.3" width="23" height="5.4" class="s"/><rect x="295" y="331.3" width="12" height="3.4" class="s"/><rect x="317" y="327.9" width="12" height="3.4" class="s"/><rect x="325" y="324.5" width="3" height="3.4" class="s"/><rect x="295" y="311.4" width="19" height="3.4" class="h"/><rect x="332" y="311.4" width="55" height="23.3" class="m"/><rect x="340" y="329.3" width="47" height="5.4" class="s"/><rect x="332" y="331.3" width="9" height="3.4" class="s"/><rect x="375" y="327.9" width="13" height="3.4" class="s"/><rect x="332" y="311.4" width="51" height="3.4" class="h"/><rect x="332" y="311.4" width="3" height="6.8" class="h"/><rect x="347" y="314.8" width="16" height="3.4" class="h"/><rect x="391" y="311.4" width="20" height="23.3" class="m"/><rect x="392" y="329.3" width="19" height="5.4" class="s"/><rect x="391" y="331.3" width="2" height="3.4" class="s"/><rect x="404" y="327.9" width="7" height="3.4" class="s"/><rect x="394" y="311.4" width="11" height="3.4" class="h"/><rect x="391" y="311.4" width="3" height="6.8" class="h"/><rect x="415" y="311.4" width="41" height="23.3" class="m"/><rect x="430" y="329.3" width="25" height="5.4" class="s"/><rect x="415" y="331.3" width="17" height="3.4" class="s"/><rect x="438" y="327.9" width="17" height="3.4" class="s"/><rect x="452" y="324.5" width="3" height="3.4" class="s"/><rect x="415" y="311.4" width="38" height="3.4" class="h"/><rect x="459" y="311.4" width="34" height="23.3" class="m"/><rect x="461" y="329.3" width="32" height="5.4" class="s"/><rect x="459" y="331.3" width="3" height="3.4" class="s"/><rect x="481" y="327.9" width="12" height="3.4" class="s"/><rect x="463" y="311.4" width="21" height="3.4" class="h"/><rect x="497" y="311.4" width="41" height="23.3" class="m"/><rect x="507" y="329.3" width="31" height="5.4" class="s"/><rect x="497" y="331.3" width="11" height="3.4" class="s"/><rect x="530" y="327.9" width="8" height="3.4" class="s"/><rect x="534" y="324.5" width="3" height="3.4" class="s"/><rect x="497" y="311.4" width="23" height="3.4" class="h"/><rect x="497" y="311.4" width="3" height="6.8" class="h"/><rect x="541" y="311.4" width="55" height="23.3" class="m"/><rect x="558" y="329.3" width="38" height="5.4" class="s"/><rect x="541" y="331.3" width="18" height="3.4" class="s"/><rect x="578" y="327.9" width="18" height="3.4" class="s"/><rect x="593" y="324.5" width="3" height="3.4" class="s"/><rect x="541" y="311.4" width="29" height="3.4" class="h"/><rect x="541" y="311.4" width="3" height="6.8" class="h"/><rect x="600" y="311.4" width="20" height="23.3" class="m"/><rect x="600" y="329.3" width="20" height="5.4" class="s"/><rect x="600" y="331.3" width="1" height="3.4" class="s"/><rect x="614" y="327.9" width="6" height="3.4" class="s"/><rect x="607" y="311.4" width="9" height="3.4" class="h"/><rect x="600" y="311.4" width="3" height="6.8" class="h"/><rect x="604" y="314.8" width="6" height="3.4" class="h"/><rect x="624" y="311.4" width="41" height="23.3" class="m"/><rect x="640" y="329.3" width="25" height="5.4" class="s"/><rect x="624" y="331.3" width="17" height="3.4" class="s"/><rect x="650" y="327.9" width="14" height="3.4" class="s"/><rect x="630" y="311.4" width="21" height="3.4" class="h"/><rect x="624" y="311.4" width="3" height="6.8" class="h"/><rect x="668" y="311.4" width="41" height="23.3" class="m"/><rect x="671" y="329.3" width="38" height="5.4" class="s"/><rect x="668" y="331.3" width="4" height="3.4" class="s"/><rect x="693" y="327.9" width="17" height="3.4" class="s"/><rect x="675" y="311.4" width="21" height="3.4" class="h"/><rect x="668" y="311.4" width="3" height="6.8" class="h"/><rect x="713" y="311.4" width="41" height="23.3" class="m"/><rect x="728" y="329.3" width="25" height="5.4" class="s"/><rect x="713" y="331.3" width="17" height="3.4" class="s"/><rect x="741" y="327.9" width="12" height="3.4" class="s"/><rect x="720" y="311.4" width="29" height="3.4" class="h"/><rect x="725" y="314.8" width="12" height="3.4" class="h"/><rect x="757" y="311.4" width="41" height="23.3" class="m"/><rect x="770" y="329.3" width="28" height="5.4" class="s"/><rect x="757" y="331.3" width="14" height="3.4" class="s"/><rect x="791" y="327.9" width="7" height="3.4" class="s"/><rect x="795" y="324.5" width="3" height="3.4" class="s"/><rect x="764" y="311.4" width="24" height="3.4" class="h"/><rect x="757" y="311.4" width="3" height="6.8" class="h"/><rect x="802" y="311.4" width="41" height="23.3" class="m"/><rect x="812" y="329.3" width="31" height="5.4" class="s"/><rect x="802" y="331.3" width="11" height="3.4" class="s"/><rect x="832" y="327.9" width="11" height="3.4" class="s"/><rect x="840" y="324.5" width="3" height="3.4" class="s"/><rect x="805" y="311.4" width="27" height="3.4" class="h"/><rect x="802" y="311.4" width="3" height="6.8" class="h"/><rect x="847" y="311.4" width="48" height="23.3" class="m"/><rect x="860" y="329.3" width="35" height="5.4" class="s"/><rect x="847" y="331.3" width="14" height="3.4" class="s"/><rect x="883" y="327.9" width="12" height="3.4" class="s"/><rect x="891" y="324.5" width="3" height="3.4" class="s"/><rect x="850" y="311.4" width="33" height="3.4" class="h"/><rect x="-6" y="338.8" width="41" height="23.3" class="m"/><rect x="2" y="356.7" width="33" height="5.4" class="s"/><rect x="-6" y="358.7" width="9" height="3.4" class="s"/><rect x="22" y="355.3" width="13" height="3.4" class="s"/><rect x="-6" y="338.8" width="26" height="3.4" class="h"/><rect x="-6" y="338.8" width="3" height="6.8" class="h"/><rect x="9" y="342.2" width="12" height="3.4" class="h"/><rect x="39" y="338.8" width="34" height="23.3" class="m"/><rect x="47" y="356.7" width="26" height="5.4" class="s"/><rect x="39" y="358.7" width="9" height="3.4" class="s"/><rect x="61" y="355.3" width="11" height="3.4" class="s"/><rect x="69" y="351.9" width="3" height="3.4" class="s"/><rect x="39" y="338.8" width="31" height="3.4" class="h"/><rect x="39" y="338.8" width="3" height="6.8" class="h"/><rect x="76" y="338.8" width="20" height="23.3" class="m"/><rect x="84" y="356.7" width="12" height="5.4" class="s"/><rect x="76" y="358.7" width="9" height="3.4" class="s"/><rect x="90" y="355.3" width="6" height="3.4" class="s"/><rect x="93" y="351.9" width="3" height="3.4" class="s"/><rect x="80" y="338.8" width="9" height="3.4" class="h"/><rect x="100" y="338.8" width="34" height="23.3" class="m"/><rect x="109" y="356.7" width="25" height="5.4" class="s"/><rect x="100" y="358.7" width="10" height="3.4" class="s"/><rect x="126" y="355.3" width="8" height="3.4" class="s"/><rect x="130" y="351.9" width="3" height="3.4" class="s"/><rect x="103" y="338.8" width="29" height="3.4" class="h"/><rect x="137" y="338.8" width="41" height="23.3" class="m"/><rect x="151" y="356.7" width="28" height="5.4" class="s"/><rect x="137" y="358.7" width="14" height="3.4" class="s"/><rect x="170" y="355.3" width="9" height="3.4" class="s"/><rect x="175" y="351.9" width="3" height="3.4" class="s"/><rect x="141" y="338.8" width="23" height="3.4" class="h"/><rect x="137" y="338.8" width="3" height="6.8" class="h"/><rect x="182" y="338.8" width="20" height="23.3" class="m"/><rect x="190" y="356.7" width="12" height="5.4" class="s"/><rect x="182" y="358.7" width="9" height="3.4" class="s"/><rect x="197" y="355.3" width="5" height="3.4" class="s"/><rect x="199" y="351.9" width="3" height="3.4" class="s"/><rect x="189" y="338.8" width="9" height="3.4" class="h"/><rect x="206" y="338.8" width="27" height="23.3" class="m"/><rect x="216" y="356.7" width="16" height="5.4" class="s"/><rect x="206" y="358.7" width="12" height="3.4" class="s"/><rect x="222" y="355.3" width="11" height="3.4" class="s"/><rect x="229" y="351.9" width="3" height="3.4" class="s"/><rect x="209" y="338.8" width="21" height="3.4" class="h"/><rect x="206" y="338.8" width="3" height="6.8" class="h"/><rect x="215" y="342.2" width="8" height="3.4" class="h"/><rect x="236" y="338.8" width="41" height="23.3" class="m"/><rect x="252" y="356.7" width="25" height="5.4" class="s"/><rect x="236" y="358.7" width="17" height="3.4" class="s"/><rect x="266" y="355.3" width="11" height="3.4" class="s"/><rect x="274" y="351.9" width="3" height="3.4" class="s"/><rect x="243" y="338.8" width="26" height="3.4" class="h"/><rect x="236" y="338.8" width="3" height="6.8" class="h"/><rect x="281" y="338.8" width="48" height="23.3" class="m"/><rect x="296" y="356.7" width="33" height="5.4" class="s"/><rect x="281" y="358.7" width="16" height="3.4" class="s"/><rect x="320" y="355.3" width="9" height="3.4" class="s"/><rect x="284" y="338.8" width="34" height="3.4" class="h"/><rect x="281" y="338.8" width="3" height="6.8" class="h"/><rect x="332" y="338.8" width="41" height="23.3" class="m"/><rect x="333" y="356.7" width="40" height="5.4" class="s"/><rect x="332" y="358.7" width="2" height="3.4" class="s"/><rect x="366" y="355.3" width="8" height="3.4" class="s"/><rect x="370" y="351.9" width="3" height="3.4" class="s"/><rect x="332" y="338.8" width="25" height="3.4" class="h"/><rect x="342" y="342.2" width="12" height="3.4" class="h"/><rect x="377" y="338.8" width="48" height="23.3" class="m"/><rect x="383" y="356.7" width="42" height="5.4" class="s"/><rect x="377" y="358.7" width="7" height="3.4" class="s"/><rect x="407" y="355.3" width="18" height="3.4" class="s"/><rect x="422" y="351.9" width="3" height="3.4" class="s"/><rect x="384" y="338.8" width="23" height="3.4" class="h"/><rect x="390" y="342.2" width="14" height="3.4" class="h"/><rect x="429" y="338.8" width="20" height="23.3" class="m"/><rect x="436" y="356.7" width="13" height="5.4" class="s"/><rect x="429" y="358.7" width="8" height="3.4" class="s"/><rect x="441" y="355.3" width="7" height="3.4" class="s"/><rect x="435" y="338.8" width="6" height="3.4" class="h"/><rect x="429" y="338.8" width="3" height="6.8" class="h"/><rect x="433" y="342.2" width="6" height="3.4" class="h"/><rect x="452" y="338.8" width="34" height="23.3" class="m"/><rect x="459" y="356.7" width="27" height="5.4" class="s"/><rect x="452" y="358.7" width="8" height="3.4" class="s"/><rect x="476" y="355.3" width="10" height="3.4" class="s"/><rect x="483" y="351.9" width="3" height="3.4" class="s"/><rect x="459" y="338.8" width="18" height="3.4" class="h"/><rect x="452" y="338.8" width="3" height="6.8" class="h"/><rect x="490" y="338.8" width="34" height="23.3" class="m"/><rect x="494" y="356.7" width="30" height="5.4" class="s"/><rect x="490" y="358.7" width="5" height="3.4" class="s"/><rect x="518" y="355.3" width="6" height="3.4" class="s"/><rect x="520" y="351.9" width="3" height="3.4" class="s"/><rect x="493" y="338.8" width="19" height="3.4" class="h"/><rect x="490" y="338.8" width="3" height="6.8" class="h"/><rect x="499" y="342.2" width="10" height="3.4" class="h"/><rect x="527" y="338.8" width="48" height="23.3" class="m"/><rect x="532" y="356.7" width="44" height="5.4" class="s"/><rect x="527" y="358.7" width="5" height="3.4" class="s"/><rect x="567" y="355.3" width="8" height="3.4" class="s"/><rect x="527" y="338.8" width="27" height="3.4" class="h"/><rect x="527" y="338.8" width="3" height="6.8" class="h"/><rect x="579" y="338.8" width="41" height="23.3" class="m"/><rect x="589" y="356.7" width="31" height="5.4" class="s"/><rect x="579" y="358.7" width="11" height="3.4" class="s"/><rect x="607" y="355.3" width="13" height="3.4" class="s"/><rect x="617" y="351.9" width="3" height="3.4" class="s"/><rect x="579" y="338.8" width="24" height="3.4" class="h"/><rect x="588" y="342.2" width="12" height="3.4" class="h"/><rect x="624" y="338.8" width="41" height="23.3" class="m"/><rect x="637" y="356.7" width="28" height="5.4" class="s"/><rect x="624" y="358.7" width="14" height="3.4" class="s"/><rect x="653" y="355.3" width="11" height="3.4" class="s"/><rect x="627" y="338.8" width="31" height="3.4" class="h"/><rect x="668" y="338.8" width="55" height="23.3" class="m"/><rect x="670" y="356.7" width="54" height="5.4" class="s"/><rect x="668" y="358.7" width="2" height="3.4" class="s"/><rect x="715" y="355.3" width="9" height="3.4" class="s"/><rect x="668" y="338.8" width="51" height="3.4" class="h"/><rect x="680" y="342.2" width="16" height="3.4" class="h"/><rect x="727" y="338.8" width="41" height="23.3" class="m"/><rect x="734" y="356.7" width="33" height="5.4" class="s"/><rect x="727" y="358.7" width="9" height="3.4" class="s"/><rect x="757" y="355.3" width="11" height="3.4" class="s"/><rect x="730" y="338.8" width="26" height="3.4" class="h"/><rect x="742" y="342.2" width="12" height="3.4" class="h"/><rect x="771" y="338.8" width="34" height="23.3" class="m"/><rect x="781" y="356.7" width="25" height="5.4" class="s"/><rect x="771" y="358.7" width="10" height="3.4" class="s"/><rect x="796" y="355.3" width="9" height="3.4" class="s"/><rect x="802" y="351.9" width="3" height="3.4" class="s"/><rect x="778" y="338.8" width="19" height="3.4" class="h"/><rect x="771" y="338.8" width="3" height="6.8" class="h"/><rect x="809" y="338.8" width="48" height="23.3" class="m"/><rect x="809" y="356.7" width="48" height="5.4" class="s"/><rect x="809" y="358.7" width="1" height="3.4" class="s"/><rect x="836" y="355.3" width="21" height="3.4" class="s"/><rect x="854" y="351.9" width="3" height="3.4" class="s"/><rect x="812" y="338.8" width="34" height="3.4" class="h"/><rect x="809" y="338.8" width="3" height="6.8" class="h"/><rect x="826" y="342.2" width="14" height="3.4" class="h"/><rect x="861" y="338.8" width="41" height="23.3" class="m"/><rect x="876" y="356.7" width="26" height="5.4" class="s"/><rect x="861" y="358.7" width="16" height="3.4" class="s"/><rect x="891" y="355.3" width="11" height="3.4" class="s"/><rect x="898" y="351.9" width="3" height="3.4" class="s"/><rect x="861" y="338.8" width="25" height="3.4" class="h"/></svg>
<div class="t" style="left:478px;top:705.7px;font-size:36px;line-height:36px;color:#f7951e;font-weight:400;transform:translateX(-50%);">FOL</div>
<div class="t" style="left:478px;top:747.3px;font-size:36px;line-height:36px;color:#f7951e;font-weight:400;transform:translateX(-50%);">Frame Of Legends</div>
<svg class="a" style="left:440px;top:800px;" width="170" height="180" viewBox="0 0 170 180"><path d="M100 139.7 A75 66 0 1 0 76 141 Q92 160 113.7 173.2 Q101 158 100 139.7Z" fill="#f0feff" stroke="#0a0a0a" stroke-width="2"/></svg>
<div class="t" style="left:522.7px;top:861.7px;font-size:24px;line-height:24px;color:#c9a444;font-weight:400;transform:translateX(-50%);">Play</div>
<svg class="a" style="left:252px;top:803px" width="160" height="200" viewBox="0 0 16 16" preserveAspectRatio="none" shape-rendering="crispEdges"><rect x="6" y="0" width="1.04" height="1.04" fill="#1e1e1e"/><rect x="7" y="0" width="1.04" height="1.04" fill="#1e1e1e"/><rect x="8" y="0" width="1.04" height="1.04" fill="#1e1e1e"/><rect x="9" y="0" width="1.04" height="1.04" fill="#1e1e1e"/><rect x="10" y="0" width="1.04" height="1.04" fill="#1e1e1e"/><rect x="5" y="1" width="1.04" height="1.04" fill="#1e1e1e"/><rect x="6" y="1" width="1.04" height="1.04" fill="#3ec433"/><rect x="7" y="1" width="1.04" height="1.04" fill="#3ec433"/><rect x="8" y="1" width="1.04" height="1.04" fill="#3ec433"/><rect x="9" y="1" width="1.04" height="1.04" fill="#3ec433"/><rect x="10" y="1" width="1.04" height="1.04" fill="#39b22f"/><rect x="11" y="1" width="1.04" height="1.04" fill="#1e1e1e"/><rect x="5" y="2" width="1.04" height="1.04" fill="#3ec433"/><rect x="6" y="2" width="1.04" height="1.04" fill="#3ec433"/><rect x="7" y="2" width="1.04" height="1.04" fill="#1e1e1e"/><rect x="8" y="2" width="1.04" height="1.04" fill="#1e1e1e"/><rect x="9" y="2" width="1.04" height="1.04" fill="#3ec433"/><rect x="10" y="2" width="1.04" height="1.04" fill="#39b22f"/><rect x="11" y="2" width="1.04" height="1.04" fill="#3f9a3b"/><rect x="12" y="2" width="1.04" height="1.04" fill="#1e1e1e"/><rect x="4" y="3" width="1.04" height="1.04" fill="#1e1e1e"/><rect x="5" y="3" width="1.04" height="1.04" fill="#3ec433"/><rect x="6" y="3" width="1.04" height="1.04" fill="#3ec433"/><rect x="7" y="3" width="1.04" height="1.04" fill="#2e6cc4"/><rect x="8" y="3" width="1.04" height="1.04" fill="#39b22f"/><rect x="9" y="3" width="1.04" height="1.04" fill="#39b22f"/><rect x="10" y="3" width="1.04" height="1.04" fill="#39b22f"/><rect x="11" y="3" width="1.04" height="1.04" fill="#3f9a3b"/><rect x="12" y="3" width="1.04" height="1.04" fill="#1e1e1e"/><rect x="5" y="4" width="1.04" height="1.04" fill="#1e1e1e"/><rect x="6" y="4" width="1.04" height="1.04" fill="#3ec433"/><rect x="7" y="4" width="1.04" height="1.04" fill="#3ec433"/><rect x="8" y="4" width="1.04" height="1.04" fill="#39b22f"/><rect x="9" y="4" width="1.04" height="1.04" fill="#39b22f"/><rect x="10" y="4" width="1.04" height="1.04" fill="#3f9a3b"/><rect x="11" y="4" width="1.04" height="1.04" fill="#3f9a3b"/><rect x="12" y="4" width="1.04" height="1.04" fill="#1e1e1e"/><rect x="3" y="5" width="1.04" height="1.04" fill="#1e1e1e"/><rect x="6" y="5" width="1.04" height="1.04" fill="#1e1e1e"/><rect x="7" y="5" width="1.04" height="1.04" fill="#8a3c3a"/><rect x="8" y="5" width="1.04" height="1.04" fill="#8a3c3a"/><rect x="9" y="5" width="1.04" height="1.04" fill="#39b22f"/><rect x="10" y="5" width="1.04" height="1.04" fill="#3f9a3b"/><rect x="11" y="5" width="1.04" height="1.04" fill="#1e1e1e"/><rect x="2" y="6" width="1.04" height="1.04" fill="#1e1e1e"/><rect x="3" y="6" width="1.04" height="1.04" fill="#3ec433"/><rect x="4" y="6" width="1.04" height="1.04" fill="#1e1e1e"/><rect x="5" y="6" width="1.04" height="1.04" fill="#6b5a50"/><rect x="6" y="6" width="1.04" height="1.04" fill="#6b5a50"/><rect x="7" y="6" width="1.04" height="1.04" fill="#3ec433"/><rect x="8" y="6" width="1.04" height="1.04" fill="#39b22f"/><rect x="9" y="6" width="1.04" height="1.04" fill="#39b22f"/><rect x="10" y="6" width="1.04" height="1.04" fill="#564840"/><rect x="11" y="6" width="1.04" height="1.04" fill="#564840"/><rect x="12" y="6" width="1.04" height="1.04" fill="#1e1e1e"/><rect x="1" y="7" width="1.04" height="1.04" fill="#1e1e1e"/><rect x="2" y="7" width="1.04" height="1.04" fill="#3ec433"/><rect x="3" y="7" width="1.04" height="1.04" fill="#3ec433"/><rect x="4" y="7" width="1.04" height="1.04" fill="#1e1e1e"/><rect x="5" y="7" width="1.04" height="1.04" fill="#6b5a50"/><rect x="6" y="7" width="1.04" height="1.04" fill="#564840"/><rect x="7" y="7" width="1.04" height="1.04" fill="#564840"/><rect x="8" y="7" width="1.04" height="1.04" fill="#39b22f"/><rect x="9" y="7" width="1.04" height="1.04" fill="#564840"/><rect x="10" y="7" width="1.04" height="1.04" fill="#564840"/><rect x="11" y="7" width="1.04" height="1.04" fill="#564840"/><rect x="12" y="7" width="1.04" height="1.04" fill="#564840"/><rect x="13" y="7" width="1.04" height="1.04" fill="#1e1e1e"/><rect x="1" y="8" width="1.04" height="1.04" fill="#1e1e1e"/><rect x="2" y="8" width="1.04" height="1.04" fill="#3ec433"/><rect x="3" y="8" width="1.04" height="1.04" fill="#39b22f"/><rect x="4" y="8" width="1.04" height="1.04" fill="#39b22f"/><rect x="5" y="8" width="1.04" height="1.04" fill="#3f9a3b"/><rect x="6" y="8" width="1.04" height="1.04" fill="#564840"/><rect x="7" y="8" width="1.04" height="1.04" fill="#3ec433"/><rect x="8" y="8" width="1.04" height="1.04" fill="#39b22f"/><rect x="9" y="8" width="1.04" height="1.04" fill="#564840"/><rect x="10" y="8" width="1.04" height="1.04" fill="#564840"/><rect x="11" y="8" width="1.04" height="1.04" fill="#3ec433"/><rect x="12" y="8" width="1.04" height="1.04" fill="#564840"/><rect x="13" y="8" width="1.04" height="1.04" fill="#1e1e1e"/><rect x="2" y="9" width="1.04" height="1.04" fill="#1e1e1e"/><rect x="3" y="9" width="1.04" height="1.04" fill="#39b22f"/><rect x="4" y="9" width="1.04" height="1.04" fill="#39b22f"/><rect x="5" y="9" width="1.04" height="1.04" fill="#1e1e1e"/><rect x="6" y="9" width="1.04" height="1.04" fill="#6b5a50"/><rect x="7" y="9" width="1.04" height="1.04" fill="#3ec433"/><rect x="8" y="9" width="1.04" height="1.04" fill="#6b5a50"/><rect x="9" y="9" width="1.04" height="1.04" fill="#564840"/><rect x="10" y="9" width="1.04" height="1.04" fill="#3ec433"/><rect x="11" y="9" width="1.04" height="1.04" fill="#3ec433"/><rect x="12" y="9" width="1.04" height="1.04" fill="#3f9a3b"/><rect x="13" y="9" width="1.04" height="1.04" fill="#1e1e1e"/><rect x="3" y="10" width="1.04" height="1.04" fill="#1e1e1e"/><rect x="4" y="10" width="1.04" height="1.04" fill="#1e1e1e"/><rect x="5" y="10" width="1.04" height="1.04" fill="#1e1e1e"/><rect x="6" y="10" width="1.04" height="1.04" fill="#6b5a50"/><rect x="7" y="10" width="1.04" height="1.04" fill="#564840"/><rect x="8" y="10" width="1.04" height="1.04" fill="#564840"/><rect x="9" y="10" width="1.04" height="1.04" fill="#564840"/><rect x="10" y="10" width="1.04" height="1.04" fill="#3ec433"/><rect x="11" y="10" width="1.04" height="1.04" fill="#3ec433"/><rect x="12" y="10" width="1.04" height="1.04" fill="#3f9a3b"/><rect x="13" y="10" width="1.04" height="1.04" fill="#1e1e1e"/><rect x="5" y="11" width="1.04" height="1.04" fill="#1e1e1e"/><rect x="6" y="11" width="1.04" height="1.04" fill="#5b3239"/><rect x="7" y="11" width="1.04" height="1.04" fill="#5b3239"/><rect x="8" y="11" width="1.04" height="1.04" fill="#5b3239"/><rect x="9" y="11" width="1.04" height="1.04" fill="#5b3239"/><rect x="10" y="11" width="1.04" height="1.04" fill="#3ec433"/><rect x="11" y="11" width="1.04" height="1.04" fill="#3ec433"/><rect x="12" y="11" width="1.04" height="1.04" fill="#3f9a3b"/><rect x="13" y="11" width="1.04" height="1.04" fill="#1e1e1e"/><rect x="5" y="12" width="1.04" height="1.04" fill="#1e1e1e"/><rect x="6" y="12" width="1.04" height="1.04" fill="#5b3239"/><rect x="7" y="12" width="1.04" height="1.04" fill="#5b3239"/><rect x="9" y="12" width="1.04" height="1.04" fill="#5b3239"/><rect x="10" y="12" width="1.04" height="1.04" fill="#3ec433"/><rect x="11" y="12" width="1.04" height="1.04" fill="#3ec433"/><rect x="12" y="12" width="1.04" height="1.04" fill="#1e1e1e"/><rect x="5" y="13" width="1.04" height="1.04" fill="#1e1e1e"/><rect x="6" y="13" width="1.04" height="1.04" fill="#3f9a3b"/><rect x="7" y="13" width="1.04" height="1.04" fill="#5b3239"/><rect x="9" y="13" width="1.04" height="1.04" fill="#3ec433"/><rect x="10" y="13" width="1.04" height="1.04" fill="#5b3239"/><rect x="11" y="13" width="1.04" height="1.04" fill="#1e1e1e"/><rect x="4" y="14" width="1.04" height="1.04" fill="#1e1e1e"/><rect x="5" y="14" width="1.04" height="1.04" fill="#1e1e1e"/><rect x="6" y="14" width="1.04" height="1.04" fill="#3ec433"/><rect x="7" y="14" width="1.04" height="1.04" fill="#3ec433"/><rect x="9" y="14" width="1.04" height="1.04" fill="#3ec433"/><rect x="10" y="14" width="1.04" height="1.04" fill="#3ec433"/><rect x="11" y="14" width="1.04" height="1.04" fill="#1e1e1e"/><rect x="4" y="15" width="1.04" height="1.04" fill="#1e1e1e"/><rect x="5" y="15" width="1.04" height="1.04" fill="#3ec433"/><rect x="6" y="15" width="1.04" height="1.04" fill="#39b22f"/><rect x="7" y="15" width="1.04" height="1.04" fill="#39b22f"/><rect x="9" y="15" width="1.04" height="1.04" fill="#39b22f"/><rect x="10" y="15" width="1.04" height="1.04" fill="#39b22f"/><rect x="11" y="15" width="1.04" height="1.04" fill="#1e1e1e"/></svg>
<div class="t" style="left:332px;top:878.7px;font-size:19.7px;line-height:19.7px;color:#ffffff;font-weight:400;transform:translateX(-50%);">Escull</div>
<div class="t" style="left:332px;top:901.5px;font-size:19.7px;line-height:19.7px;color:#ffffff;font-weight:400;transform:translateX(-50%);">Personatge</div>
<div class="a" style="left:877px;top:634px;width:611px;height:19px;background:#282828;"></div>
<div class="a" style="left:877px;top:634px;width:81px;height:19px;background:#3c3c3c;border-radius:3px 3px 0 0"></div>
<svg class="a" style="left:885px;top:639px;" width="13" height="11" viewBox="0 0 13 11"><path d="M0.5 0.5 H5 L6.5 2.5 H12.5 V10.5 H0.5Z" fill="#c4c4c4"/></svg>
<div class="t" style="left:901px;top:637.6px;font-size:12.5px;line-height:15px;color:#c4c4c4;font-weight:400;">Project</div>
<svg class="a" style="left:1453px;top:638px;" width="10" height="11" viewBox="0 0 10 11"><path d="M2.5 5 V3 A2.5 2.5 0 0 1 7.5 3" fill="none" stroke="#c4c4c4" stroke-width="1.2"/><rect x="0.6" y="5.6" width="8.8" height="4.8" fill="none" stroke="#c4c4c4" stroke-width="1.2" rx="0.5"/></svg>
<svg class="a" style="left:1473px;top:637px;" width="4" height="12" viewBox="0 0 4 12"><circle cx="2" cy="2" r="1.3" fill="#c4c4c4"/><circle cx="2" cy="6" r="1.3" fill="#c4c4c4"/><circle cx="2" cy="10" r="1.3" fill="#c4c4c4"/></svg>
<div class="a" style="left:877px;top:653px;width:611px;height:21px;background:#3c3c3c;"></div>
<svg class="a" style="left:884px;top:657px;" width="13" height="13" viewBox="0 0 13 13"><path d="M6.5 0.5 V12.5 M0.5 6.5 H12.5" stroke="#d0d0d0" stroke-width="1.8"/></svg>
<svg class="a" style="left:900px;top:661px;" width="9" height="6" viewBox="0 0 9 6"><path d="M0.5 0.5 H8.5 L4.5 5Z" fill="#c4c4c4"/></svg>
<div class="a" style="left:1026px;top:656px;width:380px;height:15px;background:#2a2a2a;border:1px solid #222;border-radius:4px"></div>
<svg class="a" style="left:1030px;top:659px;" width="10" height="10" viewBox="0 0 10 10"><circle cx="4" cy="4" r="2.8" fill="none" stroke="#c4c4c4" stroke-width="1.2"/><path d="M6 6 L8.8 8.8" stroke="#c4c4c4" stroke-width="1.5"/></svg>
<div class="a" style="left:1424px;top:655px;width:1px;height:17px;background:#2a2a2a;"></div>
<div class="a" style="left:1451px;top:655px;width:1px;height:17px;background:#2a2a2a;"></div>
<svg class="a" style="left:1405px;top:656px;" width="15" height="15" viewBox="0 0 15 15"><circle cx="7.5" cy="7.5" r="6.5" fill="#c4c4c4"/><rect x="6.5" y="3.5" width="2" height="5" fill="#3c3c3c"/><circle cx="7.5" cy="11" r="1" fill="#3c3c3c"/></svg>
<svg class="a" style="left:1430px;top:656px;" width="14" height="14" viewBox="0 0 14 14"><path d="M7 0.8 L8.9 5 L13.3 5.3 L9.9 8.2 L11 12.7 L7 10.3 L3 12.7 L4.1 8.2 L0.7 5.3 L5.1 5Z" fill="#9a9a9a"/></svg>
<svg class="a" style="left:1455px;top:657px;" width="16" height="13" viewBox="0 0 16 13"><path d="M1 6.5 Q8 0.5 15 6.5 Q8 12.5 1 6.5Z" fill="none" stroke="#c4c4c4" stroke-width="1.2"/><path d="M2 12 L14 1" stroke="#c4c4c4" stroke-width="1.3"/></svg>
<div class="t" style="left:1471px;top:656.6px;font-size:12.5px;line-height:15px;color:#c4c4c4;font-weight:400;">21</div>
<div class="a" style="left:877px;top:674px;width:196px;height:344px;background:#383838;"></div>
<div class="a" style="left:1072px;top:674px;width:13px;height:344px;background:#353535;"></div>
<div class="a" style="left:1085px;top:674px;width:1px;height:344px;background:#232323;"></div>
<svg class="a" style="left:1074px;top:679px;" width="10" height="7" viewBox="0 0 10 7"><path d="M0.5 6 L5 1 L9.5 6Z" fill="#c4c4c4"/></svg>
<div class="a" style="left:1074px;top:757px;width:10px;height:171px;background:#626262;border-radius:5px"></div>
<div class="a" style="left:937px;top:674px;width:120px;height:8px;overflow:hidden"><svg style="position:absolute;left:0;top:-5px" width="13" height="11"><path d="M0.5 0.5 H5 L6.5 2.5 H12.5 V10.5 H0.5Z" fill="#c4c4c4"/></svg><div class="t" style="left:16px;top:-8.4px;font-size:12.5px;line-height:15px;color:#c4c4c4">Backgrounds</div></div>
<svg class="a" style="left:923px;top:685.6px;" width="10" height="8" viewBox="0 0 10 8"><path d="M0.5 0.5 H9.5 L5 7.5Z" fill="#8a8a8a"/></svg>
<svg class="a" style="left:936px;top:684.6px;" width="14" height="11" viewBox="0 0 14 11"><path d="M0.8 10.2 V0.8 H5 L6.5 2.5 H11.5 V4.5" fill="none" stroke="#c4c4c4" stroke-width="1.3"/><path d="M0.8 10.2 L3 4.8 H13.5 L11.3 10.2Z" fill="none" stroke="#c4c4c4" stroke-width="1.3" stroke-linejoin="round"/></svg>
<div class="t" style="left:953px;top:682.7px;font-size:12.5px;line-height:15px;color:#c4c4c4;font-weight:400;">Characters</div>
<svg class="a" style="left:937px;top:701.6px;" width="10" height="8" viewBox="0 0 10 8"><path d="M0.5 0.5 H9.5 L5 7.5Z" fill="#8a8a8a"/></svg>
<svg class="a" style="left:950px;top:700.6px;" width="14" height="11" viewBox="0 0 14 11"><path d="M0.8 10.2 V0.8 H5 L6.5 2.5 H11.5 V4.5" fill="none" stroke="#c4c4c4" stroke-width="1.3"/><path d="M0.8 10.2 L3 4.8 H13.5 L11.3 10.2Z" fill="none" stroke="#c4c4c4" stroke-width="1.3" stroke-linejoin="round"/></svg>
<div class="t" style="left:967px;top:698.7px;font-size:12.5px;line-height:15px;color:#c4c4c4;font-weight:400;">Animation</div>
<svg class="a" style="left:965px;top:716.6px;" width="13" height="11" viewBox="0 0 13 11"><path d="M0.5 0.5 H5 L6.5 2.5 H12.5 V10.5 H0.5Z" fill="#c4c4c4"/></svg>
<div class="t" style="left:981px;top:714.7px;font-size:12.5px;line-height:15px;color:#c4c4c4;font-weight:400;">Astronaut</div>
<svg class="a" style="left:965px;top:732.6px;" width="13" height="11" viewBox="0 0 13 11"><path d="M0.5 0.5 H5 L6.5 2.5 H12.5 V10.5 H0.5Z" fill="#c4c4c4"/></svg>
<div class="t" style="left:981px;top:730.7px;font-size:12.5px;line-height:15px;color:#c4c4c4;font-weight:400;">Detective</div>
<svg class="a" style="left:937px;top:749.6px;" width="10" height="8" viewBox="0 0 10 8"><path d="M0.5 0.5 H9.5 L5 7.5Z" fill="#8a8a8a"/></svg>
<svg class="a" style="left:950px;top:748.6px;" width="14" height="11" viewBox="0 0 14 11"><path d="M0.8 10.2 V0.8 H5 L6.5 2.5 H11.5 V4.5" fill="none" stroke="#c4c4c4" stroke-width="1.3"/><path d="M0.8 10.2 L3 4.8 H13.5 L11.3 10.2Z" fill="none" stroke="#c4c4c4" stroke-width="1.3" stroke-linejoin="round"/></svg>
<div class="t" style="left:967px;top:746.7px;font-size:12.5px;line-height:15px;color:#c4c4c4;font-weight:400;">Blob Players</div>
<svg class="a" style="left:965px;top:764.6px;" width="13" height="11" viewBox="0 0 13 11"><path d="M0.5 0.5 H5 L6.5 2.5 H12.5 V10.5 H0.5Z" fill="#c4c4c4"/></svg>
<div class="t" style="left:981px;top:762.7px;font-size:12.5px;line-height:15px;color:#c4c4c4;font-weight:400;">Animation</div>
<svg class="a" style="left:951px;top:780.6px;" width="13" height="11" viewBox="0 0 13 11"><path d="M0.5 0.5 H5 L6.5 2.5 H12.5 V10.5 H0.5Z" fill="#c4c4c4"/></svg>
<div class="t" style="left:967px;top:778.7px;font-size:12.5px;line-height:15px;color:#c4c4c4;font-weight:400;">Fantasy</div>
<svg class="a" style="left:938px;top:796.6px;" width="8" height="10" viewBox="0 0 8 10"><path d="M0.5 0.5 L7.5 5 L0.5 9.5Z" fill="#8a8a8a"/></svg>
<svg class="a" style="left:951px;top:796.6px;" width="13" height="11" viewBox="0 0 13 11"><path d="M0.5 0.5 H5 L6.5 2.5 H12.5 V10.5 H0.5Z" fill="#c4c4c4"/></svg>
<div class="t" style="left:967px;top:794.7px;font-size:12.5px;line-height:15px;color:#c4c4c4;font-weight:400;">Soldiers</div>
<svg class="a" style="left:951px;top:812.6px;" width="13" height="11" viewBox="0 0 13 11"><path d="M0.5 0.5 H5 L6.5 2.5 H12.5 V10.5 H0.5Z" fill="#c4c4c4"/></svg>
<div class="t" style="left:967px;top:810.7px;font-size:12.5px;line-height:15px;color:#c4c4c4;font-weight:400;">Stickman</div>
<svg class="a" style="left:924px;top:828.6px;" width="8" height="10" viewBox="0 0 8 10"><path d="M0.5 0.5 L7.5 5 L0.5 9.5Z" fill="#8a8a8a"/></svg>
<svg class="a" style="left:937px;top:828.6px;" width="13" height="11" viewBox="0 0 13 11"><path d="M0.5 0.5 H5 L6.5 2.5 H12.5 V10.5 H0.5Z" fill="#c4c4c4"/></svg>
<div class="t" style="left:953px;top:826.7px;font-size:12.5px;line-height:15px;color:#c4c4c4;font-weight:400;">Effects</div>
<svg class="a" style="left:924px;top:844.6px;" width="8" height="10" viewBox="0 0 8 10"><path d="M0.5 0.5 L7.5 5 L0.5 9.5Z" fill="#8a8a8a"/></svg>
<svg class="a" style="left:937px;top:844.6px;" width="13" height="11" viewBox="0 0 13 11"><path d="M0.5 0.5 H5 L6.5 2.5 H12.5 V10.5 H0.5Z" fill="#c4c4c4"/></svg>
<div class="t" style="left:953px;top:842.7px;font-size:12.5px;line-height:15px;color:#c4c4c4;font-weight:400;">Enemies</div>
<svg class="a" style="left:924px;top:860.6px;" width="8" height="10" viewBox="0 0 8 10"><path d="M0.5 0.5 L7.5 5 L0.5 9.5Z" fill="#8a8a8a"/></svg>
<svg class="a" style="left:937px;top:860.6px;" width="13" height="11" viewBox="0 0 13 11"><path d="M0.5 0.5 H5 L6.5 2.5 H12.5 V10.5 H0.5Z" fill="#c4c4c4"/></svg>
<div class="t" style="left:953px;top:858.7px;font-size:12.5px;line-height:15px;color:#c4c4c4;font-weight:400;">Environment</div>
<svg class="a" style="left:937px;top:876.6px;" width="13" height="11" viewBox="0 0 13 11"><path d="M0.5 0.5 H5 L6.5 2.5 H12.5 V10.5 H0.5Z" fill="#c4c4c4"/></svg>
<div class="t" style="left:953px;top:874.7px;font-size:12.5px;line-height:15px;color:#c4c4c4;font-weight:400;">Extra</div>
<svg class="a" style="left:924px;top:892.6px;" width="8" height="10" viewBox="0 0 8 10"><path d="M0.5 0.5 L7.5 5 L0.5 9.5Z" fill="#8a8a8a"/></svg>
<svg class="a" style="left:937px;top:892.6px;" width="13" height="11" viewBox="0 0 13 11"><path d="M0.5 0.5 H5 L6.5 2.5 H12.5 V10.5 H0.5Z" fill="#c4c4c4"/></svg>
<div class="t" style="left:953px;top:890.7px;font-size:12.5px;line-height:15px;color:#c4c4c4;font-weight:400;">Food &amp; Plants</div>
<svg class="a" style="left:924px;top:908.6px;" width="8" height="10" viewBox="0 0 8 10"><path d="M0.5 0.5 L7.5 5 L0.5 9.5Z" fill="#8a8a8a"/></svg>
<svg class="a" style="left:937px;top:908.6px;" width="13" height="11" viewBox="0 0 13 11"><path d="M0.5 0.5 H5 L6.5 2.5 H12.5 V10.5 H0.5Z" fill="#c4c4c4"/></svg>
<div class="t" style="left:953px;top:906.7px;font-size:12.5px;line-height:15px;color:#c4c4c4;font-weight:400;">Items &amp; Icons</div>
<svg class="a" style="left:937px;top:924.6px;" width="13" height="11" viewBox="0 0 13 11"><path d="M0.5 0.5 H5 L6.5 2.5 H12.5 V10.5 H0.5Z" fill="#c4c4c4"/></svg>
<div class="t" style="left:953px;top:922.7px;font-size:12.5px;line-height:15px;color:#c4c4c4;font-weight:400;">Platforms</div>
<svg class="a" style="left:937px;top:940.6px;" width="13" height="11" viewBox="0 0 13 11"><path d="M0.5 0.5 H5 L6.5 2.5 H12.5 V10.5 H0.5Z" fill="#c4c4c4"/></svg>
<div class="t" style="left:953px;top:938.7px;font-size:12.5px;line-height:15px;color:#c4c4c4;font-weight:400;">Shapes</div>
<svg class="a" style="left:937px;top:956.6px;" width="13" height="11" viewBox="0 0 13 11"><path d="M0.5 0.5 H5 L6.5 2.5 H12.5 V10.5 H0.5Z" fill="#c4c4c4"/></svg>
<div class="t" style="left:953px;top:954.7px;font-size:12.5px;line-height:15px;color:#c4c4c4;font-weight:400;">Sounds</div>
<svg class="a" style="left:924px;top:972.6px;" width="8" height="10" viewBox="0 0 8 10"><path d="M0.5 0.5 L7.5 5 L0.5 9.5Z" fill="#8a8a8a"/></svg>
<svg class="a" style="left:937px;top:972.6px;" width="13" height="11" viewBox="0 0 13 11"><path d="M0.5 0.5 H5 L6.5 2.5 H12.5 V10.5 H0.5Z" fill="#c4c4c4"/></svg>
<div class="t" style="left:953px;top:970.7px;font-size:12.5px;line-height:15px;color:#c4c4c4;font-weight:400;">UI</div>
<svg class="a" style="left:937px;top:988.6px;" width="13" height="11" viewBox="0 0 13 11"><path d="M0.5 0.5 H5 L6.5 2.5 H12.5 V10.5 H0.5Z" fill="#c4c4c4"/></svg>
<div class="t" style="left:953px;top:986.7px;font-size:12.5px;line-height:15px;color:#c4c4c4;font-weight:400;">Weapons &amp; Tools</div>
<div class="a" style="left:877px;top:1002px;width:196px;height:16px;background:#4d4d4d;"></div>
<svg class="a" style="left:909px;top:1004px;" width="13" height="11" viewBox="0 0 13 11"><path d="M0.5 0.5 H5 L6.5 2.5 H12.5 V10.5 H0.5Z" fill="#c4c4c4"/></svg>
<div class="t" style="left:925px;top:1003.1px;font-size:12.5px;line-height:15px;color:#c4c4c4;font-weight:400;">Scenes</div>
<div class="a" style="left:1086px;top:674px;width:402px;height:344px;background:#333333;"></div>
<div class="a" style="left:1086px;top:674px;width:402px;height:20px;background:#3e3e3e;"></div>
<div class="t" style="left:1090px;top:677.6px;font-size:12.5px;line-height:15px;color:#9a9a9a;font-weight:400;">Assets</div>
<svg class="a" style="left:1135px;top:679px;" width="7" height="11" viewBox="0 0 7 11"><path d="M1 1 L5.5 5.5 L1 10" fill="none" stroke="#9a9a9a" stroke-width="1.2"/></svg>
<div class="t" style="left:1147px;top:677.6px;font-size:12.5px;line-height:15px;color:#c4c4c4;font-weight:400;">S</div>
<svg class="a" style="left:1104px;top:696px;" width="14" height="15" viewBox="0 0 14 15"><path d="M7 0.6 L13.2 4.1 V11 L7 14.4 L0.8 11 V4.1Z" fill="#e0e0e0"/><path d="M6.2 0 H7.8 V4.2 L9.6 3.2 L7 7.2 L4.4 3.2 L6.2 4.2Z" fill="#333333"/><path d="M2.4 6 L5.6 7.9 L3.6 11.2 L2.4 10.5Z" fill="#333333"/><path d="M11.6 6 L8.4 7.9 L10.4 11.2 L11.6 10.5Z" fill="#333333"/></svg>
<div class="t" style="left:1120px;top:696.1px;font-size:12.5px;line-height:15px;color:#c4c4c4;font-weight:400;">Characters</div>
<svg class="a" style="left:1104px;top:712px;" width="14" height="15" viewBox="0 0 14 15"><path d="M7 0.6 L13.2 4.1 V11 L7 14.4 L0.8 11 V4.1Z" fill="#e0e0e0"/><path d="M6.2 0 H7.8 V4.2 L9.6 3.2 L7 7.2 L4.4 3.2 L6.2 4.2Z" fill="#333333"/><path d="M2.4 6 L5.6 7.9 L3.6 11.2 L2.4 10.5Z" fill="#333333"/><path d="M11.6 6 L8.4 7.9 L10.4 11.2 L11.6 10.5Z" fill="#333333"/></svg>
<div class="t" style="left:1120px;top:712.1px;font-size:12.5px;line-height:15px;color:#c4c4c4;font-weight:400;">Portada</div>
<div class="a" style="left:1086px;top:997px;width:402px;height:21px;background:#424242;"></div>
<div class="a" style="left:1420px;top:1007px;width:50px;height:1px;background:#6a6a6a;"></div>
<svg class="a" style="left:1416px;top:1002px;" width="11" height="11" viewBox="0 0 11 11"><circle cx="5.5" cy="5.5" r="4.5" fill="#9a9a9a"/></svg>
<svg class="a" style="left:1074px;top:1007px;" width="10" height="7" viewBox="0 0 10 7"><path d="M0.5 1 L5 6 L9.5 1Z" fill="#e0e0e0"/></svg>
<div class="a" style="left:875px;top:634px;width:2px;height:384px;background:#191919;"></div>
<div class="a" style="left:1488px;top:73px;width:2px;height:945px;background:#191919;"></div>
<div class="a" style="left:0px;top:1018px;width:1920px;height:22px;background:#191919;"></div>
<svg class="a" style="left:3px;top:1023px;" width="13" height="13" viewBox="0 0 13 13"><circle cx="6.5" cy="6.5" r="6" fill="#d0d0d0"/><rect x="5.5" y="2.5" width="2" height="5.5" fill="#191919"/><circle cx="6.5" cy="10" r="1.1" fill="#191919"/></svg>
<div class="t" style="left:20px;top:1022.1px;font-size:12.65px;line-height:15px;color:#c4c4c4;font-weight:400;">[TMP Essential Resources] have been imported.</div>
<div class="a" style="left:1815px;top:1020px;width:1px;height:18px;background:#2a2a2a;"></div>
<div class="a" style="left:1840px;top:1020px;width:1px;height:18px;background:#2a2a2a;"></div>
<div class="a" style="left:1866px;top:1020px;width:1px;height:18px;background:#2a2a2a;"></div>
<div class="a" style="left:1892px;top:1020px;width:1px;height:18px;background:#2a2a2a;"></div>
<svg class="a" style="left:1820px;top:1022px;" width="15" height="14" viewBox="0 0 15 14"><ellipse cx="7.5" cy="8.5" rx="4.5" ry="5" fill="#c4c4c4"/><circle cx="7.5" cy="3.5" r="2.5" fill="#c4c4c4"/><path d="M1 5 L4 7 M14 5 L11 7 M0.5 9 H3.5 M14.5 9 H11.5 M1 13 L4 11 M14 13 L11 11 M1 1 L14 13" stroke="#c4c4c4" stroke-width="1.1"/></svg>
<svg class="a" style="left:1846px;top:1022px;" width="15" height="14" viewBox="0 0 15 14"><ellipse cx="7" cy="3" rx="6" ry="2.3" fill="#c4c4c4"/><path d="M1 5 V10 Q7 14 13 10 V5 Q7 9 1 5Z" fill="#c4c4c4"/><path d="M2 1 L14 13" stroke="#191919" stroke-width="1.3"/></svg>
<svg class="a" style="left:1871px;top:1021px;" width="16" height="16" viewBox="0 0 16 16"><circle cx="8" cy="8" r="6" fill="none" stroke="#c4c4c4" stroke-width="1.2"/><path d="M2 2 L14 14" stroke="#c4c4c4" stroke-width="1.2"/><circle cx="8" cy="8" r="2" fill="#c4c4c4"/></svg>
<svg class="a" style="left:1897px;top:1021px;" width="16" height="16" viewBox="0 0 16 16"><circle cx="8" cy="8" r="6.3" fill="none" stroke="#c4c4c4" stroke-width="1.2"/><path d="M5 8.2 L7.2 10.3 L11 6" fill="none" stroke="#c4c4c4" stroke-width="1.3"/></svg>
<div class="a" style="left:0px;top:1040px;width:1920px;height:40px;background:#1b1b1b;"></div>
<svg class="a" style="left:16px;top:1052px;" width="16" height="16" viewBox="0 0 16 16"><path d="M0 2.2 L6.6 1.3 V7.6 H0Z M7.4 1.2 L16 0 V7.6 H7.4Z M0 8.4 H6.6 V14.7 L0 13.8Z M7.4 8.4 H16 V16 L7.4 14.8Z" fill="#ffffff"/></svg>
<div class="a" style="left:48px;top:1040px;width:288px;height:40px;background:#2e2e2e;border:1px solid #4a4a4a;border-bottom:none"></div>
<svg class="a" style="left:59px;top:1051px;" width="18" height="18" viewBox="0 0 18 18"><circle cx="11" cy="7" r="6" fill="none" stroke="#e0e0e0" stroke-width="1.3"/><path d="M6.8 11.2 L1 17" stroke="#e0e0e0" stroke-width="1.4"/></svg>
<div class="t" style="left:88px;top:1050px;font-size:14.4px;line-height:20px;color:#e6e6e6">Escriu aquí per cercar</div>
<svg class="a" style="left:256px;top:1042px;" width="80" height="38" viewBox="0 0 80 38"><path d="M1 38 L14 23 H80 V38Z" fill="#dcc193"/><path d="M10 38 L14 23 H80 V27 H20Z" fill="#e8d2a8" opacity="0.6"/><g transform="translate(9 1)"><path d="M4 17 L17 12 L28 14 L29 30 L18 28 L8 33Z" fill="#4caf50"/><path d="M5 15 L16 10 L27 12 L28 28 L17 26 L7 31Z" fill="#f2f0f8"/><path d="M16 10 L17 26" stroke="#9a9ab0" stroke-width="1"/><path d="M8 17 L14 15 M8 20 L14 18 M8 23 L14 21 M19 15 L25 16 M19 18 L25 19 M19 21 L25 22" stroke="#b0b0c8" stroke-width="0.8"/><path d="M21 19 L33 6 L36 9 L24 22Z" fill="#f5c341"/><path d="M33 6 L36 9 L38 7 L35 4Z" fill="#e8553a"/><path d="M21 19 L24 22 L20 23Z" fill="#555"/></g><g transform="translate(-17 0) scale(1.3 1)"><path d="M52 3 Q56 0 60 3" fill="none" stroke="#2a80f0" stroke-width="2"/><path d="M49 14 Q49 5 56 5 Q63 5 63 14 L64 29 Q56 33 49 29Z" fill="#2a7ef0"/><path d="M49 14 Q49 5 56 5 Q58 5 60 6 Q52 8 52 16 V29 L49 29Z" fill="#5aa8ff" opacity="0.5"/><path d="M50 24 Q56 15 63 24 V29 Q56 32 50 29Z" fill="#3a90ff"/><path d="M51 28 Q56 30 62 28" stroke="#c080ff" stroke-width="1.5" fill="none"/></g></svg>
<svg class="a" style="left:351px;top:1051px;" width="18" height="18" viewBox="0 0 18 18"><circle cx="9" cy="9" r="6.7" fill="none" stroke="#ffffff" stroke-width="1.8"/></svg>
<svg class="a" style="left:399px;top:1051px;" width="18" height="17" viewBox="0 0 18 17"><g fill="none" stroke="#ffffff" stroke-width="1.3"><path d="M1 3.5 V1 H11 V3.5"/><rect x="1" y="5.5" width="10" height="6"/><path d="M1 13.5 V16 H11 V13.5"/><path d="M15.5 7 V16"/></g><rect x="14" y="1.5" width="3" height="3" fill="#ffffff"/></svg>
<svg class="a" style="left:446px;top:1048px;" width="25" height="25" viewBox="0 0 25 25"><rect x="0.5" y="0.5" width="24" height="24" rx="3" fill="#f7801e"/><path d="M7 6 Q4 6 4 9 Q4 12 7 12.5 Q4 13 4 16 Q4 19 7 19 Q10 19 12.5 16 Q15 19 18 19 Q21 19 21 16 Q21 13 18 12.5 Q21 12 21 9 Q21 6 18 6 Q15 6 12.5 9 Q10 6 7 6Z" fill="none" stroke="#ffffff" stroke-width="2.2"/></svg>
<svg class="a" style="left:497px;top:1050px;" width="22" height="20" viewBox="0 0 22 20"><path d="M0 2 H8 L10 4 H22 V19 H0Z" fill="#f4c542"/><path d="M0 6 H22 V19 H0Z" fill="#fbd35a"/><path d="M6 19 V13 H16 V19" fill="none" stroke="#2a8ae8" stroke-width="2.4"/></svg>
<svg class="a" style="left:545px;top:1048px;" width="24" height="24" viewBox="0 0 24 24"><circle cx="12" cy="12" r="11.5" fill="#db4437"/><path d="M12 12 L2 6.2 A11.5 11.5 0 0 0 6.2 22 Z" fill="#0f9d58"/><path d="M12 12 L6.2 22 A11.5 11.5 0 0 0 23.5 12 Z" fill="#f4b400"/><path d="M12 12 L23.5 12 A11.5 11.5 0 0 0 22 6.2Z" fill="#f4b400"/><circle cx="12" cy="12" r="5.3" fill="#ffffff"/><circle cx="12" cy="12" r="4.2" fill="#4285f4"/></svg>
<svg class="a" style="left:594px;top:1048px;" width="24" height="24" viewBox="0 0 24 24"><path d="M17.5 0.5 L23.5 3.5 V20.5 L17.5 23.5 L6.5 13.5 L2.5 16.8 L0.5 15.8 V8.2 L2.5 7.2 L6.5 10.5Z" fill="#1f8ad2"/><path d="M17.5 6.5 V17.5 L10.5 12Z" fill="#1b1b1b"/><path d="M17.5 0.5 L23.5 3.5 V20.5 L17.5 23.5Z" fill="#3aa3f0"/></svg>
<div class="a" style="left:631px;top:1040px;width:48px;height:40px;background:#3b3b3b;"></div>
<div class="a" style="left:631px;top:1077px;width:48px;height:3px;background:#76b9ed;"></div>
<svg class="a" style="left:643px;top:1048px;" width="24" height="25" viewBox="0 0 24 25"><path d="M12 0.5 L23 6.5 V18.5 L12 24.5 L1 18.5 V6.5Z" fill="#4a4a4a"/><path d="M12 5 L19 9 V16.5 L12 20.5 L5 16.5 V9Z" fill="#f0f0f0"/><path d="M12 8.5 L15.5 10.5 L12 12.5 L8.5 10.5Z M8 12 L11 13.8 V17.3 L8 15.5Z M16 12 L13 13.8 V17.3 L16 15.5Z" fill="#4a4a4a"/><path d="M12 24.5 L23 18.5 V6.5" fill="#111" opacity="0.5"/></svg>
<div class="a" style="left:683px;top:1077px;width:41px;height:3px;background:#76b9ed;"></div>
<svg class="a" style="left:692px;top:1048px;" width="23" height="23" viewBox="0 0 23 23"><rect x="0.5" y="0.5" width="22" height="22" fill="#001d34" stroke="#31a8ff" stroke-width="1.4"/><text x="4" y="16" font-family="Liberation Sans" font-weight="700" font-size="11" fill="#31a8ff">Ps</text></svg>
<svg class="a" style="left:1477px;top:1047px;" width="27" height="25" viewBox="0 0 27 25"><circle cx="17" cy="9" r="6" fill="#f7a41d"/><path d="M4 22 Q0 22 0 18 Q0 14 4.5 13.5 Q6 8 12 8.5 Q18 9 19 14 Q24 14 24 18 Q24 22 20 22Z" fill="#bcd8f5"/><path d="M4 22 Q0 22 0 18 Q8 20 24 18 Q24 22 20 22Z" fill="#8fb8e8"/></svg>
<div class="t" style="left:1511px;top:1050px;font-size:12.5px;line-height:20px;color:#ffffff;transform:scaleY(1.15)">18°C</div>
<div class="t" style="left:1549px;top:1050px;font-size:13.7px;line-height:20px;color:#ffffff">Mayorm. nubla...</div>
<svg class="a" style="left:1676px;top:1055px;" width="15" height="9" viewBox="0 0 15 9"><path d="M1 8 L7.5 1.5 L14 8" fill="none" stroke="#ffffff" stroke-width="1.4"/></svg>
<svg class="a" style="left:1698px;top:1052px;" width="18" height="15" viewBox="0 0 18 15"><rect x="4.5" y="5.5" width="12" height="7" fill="none" stroke="#ffffff" stroke-width="1.2"/><rect x="6" y="7" width="6" height="4" fill="#ffffff"/><path d="M2 1 V5 M5 1 V5 M1 5 H6 V7 Q6 9 3.5 9 Q1 9 1 7Z" fill="#ffffff" stroke="#ffffff" stroke-width="1"/></svg>
<svg class="a" style="left:1725px;top:1051px;" width="17" height="17" viewBox="0 0 17 17"><path d="M2 15 A13 13 0 0 1 15 2 M5 15 A10 10 0 0 1 15 5 M8 15 A7 7 0 0 1 15 8 M11 15 A4 4 0 0 1 15 11" fill="none" stroke="#ffffff" stroke-width="1.2"/><circle cx="14" cy="14" r="1.5" fill="#ffffff"/></svg>
<svg class="a" style="left:1747px;top:1051px;" width="17" height="17" viewBox="0 0 17 17"><path d="M1 6 H4 L8 2 V15 L4 11 H1Z" fill="none" stroke="#ffffff" stroke-width="1.2"/><path d="M10.5 6 Q12 8.5 10.5 11 M12.5 4 Q15 8.5 12.5 13 M14.5 2 Q18 8.5 14.5 15" fill="none" stroke="#ffffff" stroke-width="1.1"/></svg>
<div class="t" style="left:1774px;top:1050px;font-size:12.7px;line-height:20px;color:#ffffff;transform:scaleX(0.8);transform-origin:0 0">CAT</div>
<div class="t" style="left:1795px;top:1042px;width:80px;text-align:center;font-size:12.3px;line-height:18px;color:#ffffff;transform:scaleX(0.86)">14:12<br>19/2/2024</div>
<svg class="a" style="left:1877px;top:1051px;" width="20" height="18" viewBox="0 0 20 18"><path d="M0.5 0.5 H19.5 V13.5 H12 L10 16.5 L8 13.5 H0.5Z" fill="#ffffff"/><path d="M4 4 H16 M4 7 H16 M4 10 H12" stroke="#1b1b1b" stroke-width="1.1"/></svg>
<div class="a" style="left:1914px;top:1044px;width:1px;height:36px;background:#5a5a5a;"></div>
<div class="a" style="left:1154px;top:359px;width:254px;height:503px;background:#f0f0f0;border:1px solid #a0a0a0;box-shadow:2px 2px 3px rgba(0,0,0,0.45)"></div>
<div class="t" style="left:1189px;top:365.6px;font-size:12px;line-height:17px;color:#6d6d6d;will-change:auto;transform:scaleX(0.95);transform-origin:0 0;-webkit-text-stroke:0.2px #6d6d6d">Cut</div>
<div class="t" style="left:1189px;top:387.8px;font-size:12px;line-height:17px;color:#6d6d6d;will-change:auto;transform:scaleX(0.95);transform-origin:0 0;-webkit-text-stroke:0.2px #6d6d6d">Copy</div>
<div class="t" style="left:1189px;top:409.8px;font-size:12px;line-height:17px;color:#6d6d6d;will-change:auto;transform:scaleX(0.95);transform-origin:0 0;-webkit-text-stroke:0.2px #6d6d6d">Paste</div>
<div class="t" style="left:1189px;top:431.4px;font-size:12px;line-height:17px;color:#6d6d6d;will-change:auto;transform:scaleX(0.95);transform-origin:0 0;-webkit-text-stroke:0.2px #6d6d6d">Paste As Child</div>
<div class="a" style="left:1185px;top:453px;width:220px;height:1px;background:#d7d7d7;"></div>
<div class="t" style="left:1189px;top:460.4px;font-size:12px;line-height:17px;color:#6d6d6d;will-change:auto;transform:scaleX(0.95);transform-origin:0 0;-webkit-text-stroke:0.2px #6d6d6d">Rename</div>
<div class="t" style="left:1189px;top:482.4px;font-size:12px;line-height:17px;color:#6d6d6d;will-change:auto;transform:scaleX(0.95);transform-origin:0 0;-webkit-text-stroke:0.2px #6d6d6d">Duplicate</div>
<div class="t" style="left:1189px;top:504.4px;font-size:12px;line-height:17px;color:#6d6d6d;will-change:auto;transform:scaleX(0.95);transform-origin:0 0;-webkit-text-stroke:0.2px #6d6d6d">Delete</div>
<div class="a" style="left:1185px;top:526px;width:220px;height:1px;background:#d7d7d7;"></div>
<div class="t" style="left:1189px;top:533.4px;font-size:12px;line-height:17px;color:#000000;will-change:auto;transform:scaleX(0.95);transform-origin:0 0;-webkit-text-stroke:0.2px #000000">Select Children</div>
<div class="a" style="left:1185px;top:555px;width:220px;height:1px;background:#d7d7d7;"></div>
<div class="t" style="left:1189px;top:562.4px;font-size:12px;line-height:17px;color:#6d6d6d;will-change:auto;transform:scaleX(0.95);transform-origin:0 0;-webkit-text-stroke:0.2px #6d6d6d">Find References in Scene</div>
<div class="a" style="left:1185px;top:584px;width:220px;height:1px;background:#d7d7d7;"></div>
<div class="t" style="left:1189px;top:591.7px;font-size:12px;line-height:17px;color:#6d6d6d;will-change:auto;transform:scaleX(0.95);transform-origin:0 0;-webkit-text-stroke:0.2px #6d6d6d">Set as Default Parent</div>
<div class="a" style="left:1185px;top:613px;width:220px;height:1px;background:#d7d7d7;"></div>
<div class="a" style="left:1157px;top:617px;width:248px;height:22px;background:#91c9f7;"></div>
<div class="t" style="left:1189px;top:620.3px;font-size:12px;line-height:17px;color:#000000;will-change:auto;transform:scaleX(0.95);transform-origin:0 0;-webkit-text-stroke:0.2px #000000">Create Empty</div>
<div class="t" style="left:1189px;top:642.3px;font-size:12px;line-height:17px;color:#000000;will-change:auto;transform:scaleX(0.95);transform-origin:0 0;-webkit-text-stroke:0.2px #000000">2D Object</div>
<svg class="a" style="left:1391px;top:644.5px;" width="6" height="10" viewBox="0 0 6 10"><path d="M1 1 L5 5 L1 9" fill="none" stroke="#333" stroke-width="1.1"/></svg>
<div class="t" style="left:1189px;top:664.3px;font-size:12px;line-height:17px;color:#000000;will-change:auto;transform:scaleX(0.95);transform-origin:0 0;-webkit-text-stroke:0.2px #000000">3D Object</div>
<svg class="a" style="left:1391px;top:666.5px;" width="6" height="10" viewBox="0 0 6 10"><path d="M1 1 L5 5 L1 9" fill="none" stroke="#333" stroke-width="1.1"/></svg>
<div class="t" style="left:1189px;top:686.3px;font-size:12px;line-height:17px;color:#000000;will-change:auto;transform:scaleX(0.95);transform-origin:0 0;-webkit-text-stroke:0.2px #000000">Effects</div>
<svg class="a" style="left:1391px;top:688.5px;" width="6" height="10" viewBox="0 0 6 10"><path d="M1 1 L5 5 L1 9" fill="none" stroke="#333" stroke-width="1.1"/></svg>
<div class="t" style="left:1189px;top:708.3px;font-size:12px;line-height:17px;color:#000000;will-change:auto;transform:scaleX(0.95);transform-origin:0 0;-webkit-text-stroke:0.2px #000000">Light</div>
<svg class="a" style="left:1391px;top:710.5px;" width="6" height="10" viewBox="0 0 6 10"><path d="M1 1 L5 5 L1 9" fill="none" stroke="#333" stroke-width="1.1"/></svg>
<div class="t" style="left:1189px;top:730.3px;font-size:12px;line-height:17px;color:#000000;will-change:auto;transform:scaleX(0.95);transform-origin:0 0;-webkit-text-stroke:0.2px #000000">Audio</div>
<svg class="a" style="left:1391px;top:732.5px;" width="6" height="10" viewBox="0 0 6 10"><path d="M1 1 L5 5 L1 9" fill="none" stroke="#333" stroke-width="1.1"/></svg>
<div class="t" style="left:1189px;top:752.3px;font-size:12px;line-height:17px;color:#000000;will-change:auto;transform:scaleX(0.95);transform-origin:0 0;-webkit-text-stroke:0.2px #000000">Video</div>
<svg class="a" style="left:1391px;top:754.5px;" width="6" height="10" viewBox="0 0 6 10"><path d="M1 1 L5 5 L1 9" fill="none" stroke="#333" stroke-width="1.1"/></svg>
<div class="t" style="left:1189px;top:774.3px;font-size:12px;line-height:17px;color:#000000;will-change:auto;transform:scaleX(0.95);transform-origin:0 0;-webkit-text-stroke:0.2px #000000">UI</div>
<svg class="a" style="left:1391px;top:776.5px;" width="6" height="10" viewBox="0 0 6 10"><path d="M1 1 L5 5 L1 9" fill="none" stroke="#333" stroke-width="1.1"/></svg>
<div class="t" style="left:1189px;top:796.3px;font-size:12px;line-height:17px;color:#000000;will-change:auto;transform:scaleX(0.95);transform-origin:0 0;-webkit-text-stroke:0.2px #000000">UI Toolkit</div>
<svg class="a" style="left:1391px;top:798.5px;" width="6" height="10" viewBox="0 0 6 10"><path d="M1 1 L5 5 L1 9" fill="none" stroke="#333" stroke-width="1.1"/></svg>
<div class="t" style="left:1189px;top:818.3px;font-size:12px;line-height:17px;color:#000000;will-change:auto;transform:scaleX(0.95);transform-origin:0 0;-webkit-text-stroke:0.2px #000000">Camera</div>
<div class="t" style="left:1189px;top:840.3px;font-size:12px;line-height:17px;color:#000000;will-change:auto;transform:scaleX(0.95);transform-origin:0 0;-webkit-text-stroke:0.2px #000000">Visual Scripting Scene Variables</div>
<svg class="a" style="left:990px;top:380px;" width="180" height="255" viewBox="0 0 180 255"><g fill="#ffffff"><path d="M19.5 140.75 L62 28.6" stroke="#ffffff" stroke-width="2.2"/><path d="M68.7 10 L57.1 26.6 L66.9 30.6Z"/><path d="M107.5 157 L162 230.3" stroke="#ffffff" stroke-width="2.2"/><path d="M173.6 245.6 L158.3 232.9 L165.9 227.8Z"/></g></svg>
</body></html>
